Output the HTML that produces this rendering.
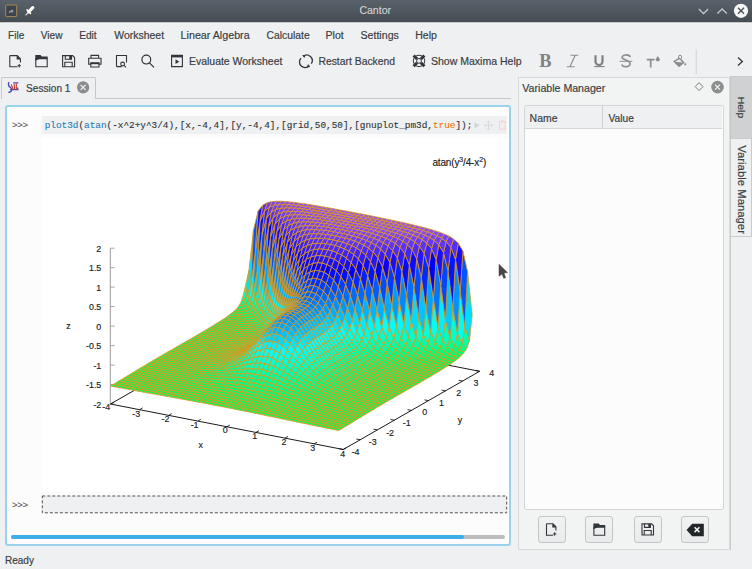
<!DOCTYPE html>
<html><head><meta charset="utf-8">
<style>
*{margin:0;padding:0;box-sizing:border-box}
html,body{width:752px;height:569px;overflow:hidden;background:#eff0f1;font-family:"Liberation Sans",sans-serif;color:#31363b;position:relative}
.a{position:absolute;white-space:nowrap}
svg{position:absolute;overflow:visible}
.btn{position:absolute;width:28px;height:27px;border:1px solid #c4c5c6;border-radius:3px;background:linear-gradient(#f1f2f2,#e9eaeb)}
</style></head><body>
<!-- title bar -->
<svg style="left:0;top:0" width="752" height="25"><defs><linearGradient id="tg" x1="0" y1="0" x2="0" y2="1"><stop offset="0" stop-color="#59626a"/><stop offset="1" stop-color="#454c53"/></linearGradient></defs><rect x="0" y="0" width="752" height="22.5" fill="url(#tg)"/><rect x="0" y="22.5" width="752" height="1.2" fill="#f4f5f6"/></svg>
<svg style="left:0;top:0" width="22" height="22"><rect x="5.7" y="5.0" width="11" height="11.6" rx="0.6" fill="#3d444b" stroke="#a78958" stroke-width="1"/><path d="M9 12.8C8.6 11.8 9.4 10.6 10.8 10.6C11.3 9.9 12.4 9.6 13.2 10.1V12.8Z" fill="#9aa0a6"/><path d="M10 12.2H12.8" stroke="#3d444b" stroke-width="0.6"/></svg>
<svg style="left:0;top:0" width="752" height="22">

<path d="M25.9 14.9L28.3 12.5" stroke="#dfe1e3" stroke-width="1.3" stroke-linecap="round"/>
<path d="M28.8 11.7L32.8 7.7" stroke="#fff" stroke-width="3.2" stroke-linecap="round"/>
<path d="M27 9.9L30.5 13.4" stroke="#fff" stroke-width="1.5" stroke-linecap="round"/>
<path d="M698.8 9L703.5 13.5L708.2 9" stroke="#c3c7cb" stroke-width="1.3" fill="none"/>
<path d="M717.4 13.5L722.1 9L726.8 13.5" stroke="#c3c7cb" stroke-width="1.3" fill="none"/>
<circle cx="741" cy="10.8" r="7.1" fill="#f6f7f7"/>
<path d="M738 7.8L744 13.8M744 7.8L738 13.8" stroke="#464d54" stroke-width="1.3"/>
</svg>

<!-- toolbar icons -->
<svg style="left:0;top:0" width="752" height="80" fill="none" stroke="#31363b" stroke-width="1.1">
<!-- new -->
<path d="M9.8 55.6H17.2L20.4 58.8V62.5M9.8 55.6V66.8H17.5"/><path d="M16.6 55.2L20.9 59.5H16.6Z" fill="#31363b" stroke="none"/><path d="M19.2 64v3.5M17.5 65.7h3.4" stroke-width="1"/>
<!-- open -->
<path d="M35.8 58.6V66.8H47.2V58.6Z"/><path d="M35.3 55.1H40.5L42 56.6H47.7V58.6H40.3L35.3 60.7Z" fill="#31363b" stroke="none"/>
<!-- save -->
<path d="M62.6 55.6H72.6L74.6 57.6V66.8H62.6Z"/><path d="M65.3 55.6V59.2H71.5V55.6M64.8 66.8V62.2H72.2V66.8"/><path d="M69.8 56.2h1.2v2.4h-1.2Z" fill="#31363b"/>
<!-- print -->
<path d="M91 58V55.4H98.6V58M88.7 58.2H101V64.2H88.7Z"/><path d="M90.8 62.8H99V67H90.8Z" fill="#eff0f1"/><path d="M90.5 62.8H99.2V64.2H90.5Z" fill="#31363b" stroke="none"/>
<!-- print preview -->
<path d="M116.5 66.6V55.5H126.5V62.5M116.5 66.6H121.8"/><circle cx="122.6" cy="64" r="1.9"/><path d="M124 65.4L126 67.3"/>
<!-- search -->
<circle cx="146.3" cy="59.6" r="4.4" stroke-width="1.2"/><path d="M149.5 62.8L154 67.3" stroke-width="1.2"/>
<!-- evaluate -->
<path d="M171.6 55.4H182.4V66.6H171.6Z"/><path d="M171 55H183V57.4H171Z" fill="#31363b" stroke="none"/><path d="M175.5 59.3L179.3 61.7L175.5 64.1Z" fill="#31363b" stroke="none"/>
<!-- restart -->
<path d="M303.2 56.2A5.6 5.6 0 0 1 311.3 63.7" stroke-width="1.3"/><path d="M309.2 65.8A5.6 5.6 0 0 1 301 58.1" stroke-width="1.3"/>
<path d="M302.3 55.0L305.6 54.9L304.3 58.1Z" fill="#31363b" stroke="none"/><path d="M310.1 67.1L306.8 67.2L308.1 64Z" fill="#31363b" stroke="none"/>
<!-- maxima help lifebuoy -->
<circle cx="419" cy="60.9" r="5.7" stroke-width="1"/><circle cx="419" cy="60.9" r="2.4" stroke-width="1"/>
<path d="M413.6 55.5L417.1 59M424.4 55.5L420.9 59M413.6 66.3L417.1 62.8M424.4 66.3L420.9 62.8" stroke-width="3"/>
<!-- disabled formatting icons -->
<g fill="#7f8183" stroke="none">
<text x="539.2" y="67" font-family="Liberation Serif" font-weight="bold" font-size="18.4">B</text>
</g>
<path d="M570.5 55.3H578.3M566.8 66.8H574.6M575.2 55.3L569.9 66.8" stroke="#8a8c8e" stroke-width="1.1"/>
<path d="M595.5 55.2V61.5A3.5 3.5 0 0 0 602.5 61.5V55.2" stroke="#7f8183" stroke-width="2.2"/><path d="M594 66.6H604.6" stroke="#7f8183" stroke-width="1.1"/>
<path d="M630.2 57.2A4 2.4 0 0 0 622 57.6C622 59.6 630 60.2 630 63.5A4 2.5 0 0 1 621.8 64.6" stroke="#8a8c8e" stroke-width="1.6"/><path d="M619.6 61.3H632.3" stroke="#8a8c8e" stroke-width="1"/>
<path d="M646.8 59.7H654.5M650.7 59.7V67.6" stroke="#8a8c8e" stroke-width="1.7"/><path d="M657.8 56L659.9 59.3A2.1 2.1 0 1 1 655.7 59.3Z" fill="#8a8c8e" stroke="none"/>
<path d="M678.5 58.6V56.8A1.5 1.5 0 0 1 681.5 56.8V58.6" stroke="#8a8c8e" stroke-width="1"/><path d="M673 61.3L679.6 57.4L684.8 62.6L679 67.2Z" fill="#8a8c8e" stroke="none"/><path d="M675 61.8L679.4 59.3L682.5 62.4Z" fill="#eff0f1" stroke="none"/><circle cx="685.3" cy="64.3" r="1.1" fill="#8a8c8e" stroke="none"/>
<path d="M696.2 49.5V74" stroke="#cfd0d1" stroke-width="1"/>
<path d="M738 57.5L742.4 61.5L738 65.5" stroke="#31363b" stroke-width="1.3"/>
</svg>

<!-- tab bar -->
<div class="a" style="left:1px;top:77px;width:95px;height:22px;border:1px solid #c6c7c8;border-bottom:none;border-radius:2px 2px 0 0;background:#eff0f1"></div>
<div class="a" style="left:95px;top:98px;width:416px;height:1px;background:#c6c7c8"></div>
<svg style="left:0;top:72px" width="100" height="30">
<path d="M9 10.2C8 12 8.3 14.5 10.5 15.5C12 16.3 12 18.5 10.8 19.5C10 20.2 9 20.3 8.5 19.8" stroke="#4b49b8" stroke-width="1.4" fill="none"/>
<path d="M13.2 10.8H18.4M10 17.6H18.6M17.6 17.6V15.6" stroke="#4b49b8" stroke-width="1.3" fill="none"/>
<path d="M11.2 12.5L13.2 17.2M14.2 12L14.6 17.3M16.3 11.5V17.3" stroke="#c0392b" stroke-width="1.1" fill="none"/>
<circle cx="83.1" cy="15.4" r="6.1" fill="#8b8d8f"/><path d="M80.6 12.9L85.6 17.9M85.6 12.9L80.6 17.9" stroke="#eff0f1" stroke-width="1.3"/>
</svg>

<!-- worksheet frame -->
<div class="a" style="left:5px;top:105px;width:506px;height:440.5px;border:2px solid #9ad1ec;border-radius:3px;background:#fcfcfc"></div>
<div class="a" style="left:42px;top:116px;width:465px;height:18px;background:#eff0f1"></div>
<div class="a" style="left:42px;top:137.5px;width:467px;height:354.5px;background:#fff"></div>
<svg style="left:0;top:0" width="752" height="569"><rect x="42.3" y="496" width="464.4" height="16.8" fill="#eff0f1" stroke="#505050" stroke-width="1" stroke-dasharray="3 2"/></svg>
<div class="a" style="left:11px;top:534.6px;width:494px;height:4.8px;border-radius:2.4px;background:#bcbdbe"></div>
<div class="a" style="left:11px;top:534.6px;width:453px;height:4.8px;border-radius:2.4px;background:#3daee9"></div>
<svg style="left:0;top:0" width="752" height="569">
<text x="44.7" y="127.9" font-family="Liberation Mono" font-size="9.4" fill="#31363b" stroke="#31363b" stroke-width="0.12" xml:space="preserve"><tspan fill="#2980b9" stroke="#2980b9">plot3d</tspan>(<tspan fill="#2980b9" stroke="#2980b9">atan</tspan>(-x^2+y^3/4),[x,-4,4],[y,-4,4],[grid,50,50],[gnuplot_pm3d,<tspan fill="#f67400" stroke="#f67400">true</tspan>]);</text>
<text x="12" y="127.9" font-family="Liberation Mono" font-size="9.4" fill="#555" stroke="#555" stroke-width="0.1" letter-spacing="-0.4">&gt;&gt;&gt;</text>
<text x="12" y="508" stroke="#555" stroke-width="0.1" font-family="Liberation Mono" font-size="9.4" fill="#555" letter-spacing="-0.4">&gt;&gt;&gt;</text>
<g fill="none" stroke="#c4c5c6" stroke-width="0.9" opacity="0.6">
<path d="M474.5 122L479.5 125.2L474.5 128.4Z" fill="#c4c5c6" stroke="none"/>
<path d="M488.5 121V129.4M484.3 125.2H492.7M487.3 122.2L488.5 121L489.7 122.2M487.3 128.2L488.5 129.4L489.7 128.2M485.5 124L484.3 125.2L485.5 126.4M491.5 124L492.7 125.2L491.5 126.4"/>
<path d="M498.5 121.8H506M499.6 121.8V129.2H505V121.8M501 120.8H503.5" stroke="#f0c0c0"/>
</g>
</svg>

<!-- plot -->
<svg style="left:0;top:0" width="752" height="569">
<defs><filter id="sb" x="-5%" y="-5%" width="110%" height="110%"><feGaussianBlur stdDeviation="0.35"/></filter></defs><g><path d="M110.5 404.0L246.9 325.8" stroke="#000" stroke-width="0.9" fill="none"/><path d="M246.9 325.8L479.6 371.3" stroke="#000" stroke-width="0.9" fill="none"/><path d="M110.3 404.0L110.3 248.2" stroke="#9a9a9a" stroke-width="1.0" fill="none"/><path d="M110.3 404.0L114.6 404.0" stroke="#9a9a9a" stroke-width="0.9" fill="none"/><path d="M110.3 384.5L114.6 384.5" stroke="#9a9a9a" stroke-width="0.9" fill="none"/><path d="M110.3 365.1L114.6 365.1" stroke="#9a9a9a" stroke-width="0.9" fill="none"/><path d="M110.3 345.6L114.6 345.6" stroke="#9a9a9a" stroke-width="0.9" fill="none"/><path d="M110.3 326.1L114.6 326.1" stroke="#9a9a9a" stroke-width="0.9" fill="none"/><path d="M110.3 306.6L114.6 306.6" stroke="#9a9a9a" stroke-width="0.9" fill="none"/><path d="M110.3 287.1L114.6 287.1" stroke="#9a9a9a" stroke-width="0.9" fill="none"/><path d="M110.3 267.7L114.6 267.7" stroke="#9a9a9a" stroke-width="0.9" fill="none"/><path d="M110.3 248.2L114.6 248.2" stroke="#9a9a9a" stroke-width="0.9" fill="none"/></g><g stroke="#dc9818" stroke-width="0.78" filter="url(#sb)" stroke-linejoin="round"><path d="M238.7 306.2 243.4 304.8 246.1 297.1 241.4 301.5Z" fill="#00ff88"/><path d="M236.0 309.4 240.6 308.9 243.4 304.8 238.7 306.2Z" fill="#00ff78"/><path d="M233.3 311.9 237.9 311.9 240.6 308.9 236.0 309.4Z" fill="#00ff70"/><path d="M241.4 301.5 246.1 297.1 248.8 271.1 244.2 291.3Z" fill="#00ffbc"/><path d="M240.6 308.9 245.3 307.8 248.0 301.5 243.4 304.8Z" fill="#00ff84"/><path d="M230.5 314.1 235.2 314.4 237.9 311.9 233.3 311.9Z" fill="#00ff6b"/><path d="M237.9 311.9 242.6 311.5 245.3 307.8 240.6 308.9Z" fill="#00ff77"/><path d="M243.4 304.8 248.0 301.5 250.8 285.0 246.1 297.1Z" fill="#00ffa7"/><path d="M235.2 314.4 239.8 314.4 242.6 311.5 237.9 311.9Z" fill="#00ff70"/><path d="M227.8 316.2 232.5 316.5 235.2 314.4 230.5 314.1Z" fill="#00ff68"/><path d="M242.6 311.5 247.2 310.5 250.0 305.2 245.3 307.8Z" fill="#00ff81"/><path d="M245.3 307.8 250.0 305.2 252.7 293.4 248.0 301.5Z" fill="#00ff9b"/><path d="M232.5 316.5 237.1 316.7 239.8 314.4 235.2 314.4Z" fill="#00ff6b"/><path d="M239.8 314.4 244.5 314.0 247.2 310.5 242.6 311.5Z" fill="#00ff76"/><path d="M225.1 318.1 229.7 318.5 232.5 316.5 227.8 316.2Z" fill="#00ff66"/><path d="M237.1 316.7 241.8 316.7 244.5 314.0 239.8 314.4Z" fill="#00ff70"/><path d="M229.7 318.5 234.4 318.9 237.1 316.7 232.5 316.5Z" fill="#00ff68"/><path d="M247.2 310.5 251.9 308.4 254.6 299.3 250.0 305.2Z" fill="#00ff94"/><path d="M244.5 314.0 249.1 313.1 251.9 308.4 247.2 310.5Z" fill="#00ff80"/><path d="M222.3 319.9 227.0 320.4 229.7 318.5 225.1 318.1Z" fill="#00ff64"/><path d="M234.4 318.9 239.0 319.1 241.8 316.7 237.1 316.7Z" fill="#00ff6c"/><path d="M241.8 316.7 246.4 316.4 249.1 313.1 244.5 314.0Z" fill="#00ff76"/><path d="M227.0 320.4 231.7 320.8 234.4 318.9 229.7 318.5Z" fill="#00ff66"/><path d="M219.6 321.6 224.3 322.2 227.0 320.4 222.3 319.9Z" fill="#00ff63"/><path d="M249.1 313.1 253.8 311.3 256.5 303.8 251.9 308.4Z" fill="#00ff90"/><path d="M239.0 319.1 243.7 319.1 246.4 316.4 241.8 316.7Z" fill="#00ff70"/><path d="M248.0 301.5 252.7 293.4 255.4 251.1 250.8 285.0Z" fill="#00fff2"/><path d="M231.7 320.8 236.3 321.2 239.0 319.1 234.4 318.9Z" fill="#00ff69"/><path d="M250.0 305.2 254.6 299.3 257.3 270.6 252.7 293.4Z" fill="#00ffd0"/><path d="M246.4 316.4 251.1 315.6 253.8 311.3 249.1 313.1Z" fill="#00ff7f"/><path d="M224.3 322.2 228.9 322.7 231.7 320.8 227.0 320.4Z" fill="#00ff65"/><path d="M246.1 297.1 250.8 285.0 253.5 229.9 248.8 271.1Z" fill="#00deff"/><path d="M216.9 323.3 221.5 323.9 224.3 322.2 219.6 321.6Z" fill="#00ff62"/><path d="M251.9 308.4 256.5 303.8 259.3 283.9 254.6 299.3Z" fill="#00ffbb"/><path d="M236.3 321.2 241.0 321.3 243.7 319.1 239.0 319.1Z" fill="#00ff6d"/><path d="M243.7 319.1 248.3 318.8 251.1 315.6 246.4 316.4Z" fill="#00ff77"/><path d="M228.9 322.7 233.6 323.1 236.3 321.2 231.7 320.8Z" fill="#00ff67"/><path d="M221.5 323.9 226.2 324.5 228.9 322.7 224.3 322.2Z" fill="#00ff63"/><path d="M251.1 315.6 255.7 313.9 258.5 307.4 253.8 311.3Z" fill="#00ff8e"/><path d="M214.2 325.0 218.8 325.7 221.5 323.9 216.9 323.3Z" fill="#00ff61"/><path d="M241.0 321.3 245.6 321.3 248.3 318.8 243.7 319.1Z" fill="#00ff71"/><path d="M233.6 323.1 238.2 323.4 241.0 321.3 236.3 321.2Z" fill="#00ff6a"/><path d="M248.3 318.8 253.0 318.0 255.7 313.9 251.1 315.6Z" fill="#00ff7f"/><path d="M253.8 311.3 258.5 307.4 261.2 292.7 256.5 303.8Z" fill="#00ffaf"/><path d="M226.2 324.5 230.9 325.0 233.6 323.1 228.9 322.7Z" fill="#00ff66"/><path d="M218.8 325.7 223.5 326.2 226.2 324.5 221.5 323.9Z" fill="#00ff63"/><path d="M238.2 323.4 242.9 323.6 245.6 321.3 241.0 321.3Z" fill="#00ff6e"/><path d="M245.6 321.3 250.3 321.0 253.0 318.0 248.3 318.8Z" fill="#00ff77"/><path d="M211.4 326.7 216.1 327.3 218.8 325.7 214.2 325.0Z" fill="#00ff60"/><path d="M230.9 325.0 235.5 325.4 238.2 323.4 233.6 323.1Z" fill="#00ff68"/><path d="M223.5 326.2 228.1 326.8 230.9 325.0 226.2 324.5Z" fill="#00ff64"/><path d="M253.0 318.0 257.7 316.4 260.4 310.6 255.7 313.9Z" fill="#00ff8d"/><path d="M255.7 313.9 260.4 310.6 263.1 298.9 258.5 307.4Z" fill="#00ffa8"/><path d="M216.1 327.3 220.7 327.9 223.5 326.2 218.8 325.7Z" fill="#00ff62"/><path d="M242.9 323.6 247.5 323.5 250.3 321.0 245.6 321.3Z" fill="#00ff72"/><path d="M235.5 325.4 240.2 325.6 242.9 323.6 238.2 323.4Z" fill="#00ff6b"/><path d="M250.3 321.0 254.9 320.2 257.7 316.4 253.0 318.0Z" fill="#00ff80"/><path d="M208.7 328.3 213.4 329.0 216.1 327.3 211.4 326.7Z" fill="#00ff60"/><path d="M228.1 326.8 232.8 327.2 235.5 325.4 230.9 325.0Z" fill="#00ff67"/><path d="M220.7 327.9 225.4 328.5 228.1 326.8 223.5 326.2Z" fill="#00ff64"/><path d="M240.2 325.6 244.8 325.7 247.5 323.5 242.9 323.6Z" fill="#00ff6f"/><path d="M247.5 323.5 252.2 323.2 254.9 320.2 250.3 321.0Z" fill="#00ff79"/><path d="M213.4 329.0 218.0 329.6 220.7 327.9 216.1 327.3Z" fill="#00ff61"/><path d="M232.8 327.2 237.4 327.6 240.2 325.6 235.5 325.4Z" fill="#00ff69"/><path d="M225.4 328.5 230.1 329.0 232.8 327.2 228.1 326.8Z" fill="#00ff66"/><path d="M206.0 329.9 210.6 330.6 213.4 329.0 208.7 328.3Z" fill="#00ff60"/><path d="M257.7 316.4 262.3 313.3 265.0 303.5 260.4 310.6Z" fill="#00ffa4"/><path d="M254.9 320.2 259.6 318.7 262.3 313.3 257.7 316.4Z" fill="#00ff8d"/><path d="M218.0 329.6 222.7 330.2 225.4 328.5 220.7 327.9Z" fill="#00ff63"/><path d="M244.8 325.7 249.5 325.6 252.2 323.2 247.5 323.5Z" fill="#00ff74"/><path d="M237.4 327.6 242.1 327.8 244.8 325.7 240.2 325.6Z" fill="#00ff6d"/><path d="M256.5 303.8 261.2 292.7 263.9 250.4 259.3 283.9Z" fill="#00efff"/><path d="M252.2 323.2 256.9 322.3 259.6 318.7 254.9 320.2Z" fill="#00ff82"/><path d="M210.6 330.6 215.3 331.3 218.0 329.6 213.4 329.0Z" fill="#00ff61"/><path d="M230.1 329.0 234.7 329.4 237.4 327.6 232.8 327.2Z" fill="#00ff68"/><path d="M254.6 299.3 259.3 283.9 262.0 234.3 257.3 270.6Z" fill="#00c7ff"/><path d="M258.5 307.4 263.1 298.9 265.8 266.1 261.2 292.7Z" fill="#00fff1"/><path d="M222.7 330.2 227.3 330.7 230.1 329.0 225.4 328.5Z" fill="#00ff65"/><path d="M203.3 331.6 207.9 332.2 210.6 330.6 206.0 329.9Z" fill="#00ff5f"/><path d="M242.1 327.8 246.7 327.8 249.5 325.6 244.8 325.7Z" fill="#00ff71"/><path d="M249.5 325.6 254.1 325.2 256.9 322.3 252.2 323.2Z" fill="#00ff7b"/><path d="M215.3 331.3 219.9 331.9 222.7 330.2 218.0 329.6Z" fill="#00ff62"/><path d="M252.7 293.4 257.3 270.6 260.1 221.0 255.4 251.1Z" fill="#0093ff"/><path d="M234.7 329.4 239.4 329.7 242.1 327.8 237.4 327.6Z" fill="#00ff6b"/><path d="M260.4 310.6 265.0 303.5 267.8 278.5 263.1 298.9Z" fill="#00ffdd"/><path d="M259.6 318.7 264.2 315.7 267.0 307.2 262.3 313.3Z" fill="#00ffa3"/><path d="M207.9 332.2 212.6 332.9 215.3 331.3 210.6 330.6Z" fill="#00ff61"/><path d="M227.3 330.7 232.0 331.2 234.7 329.4 230.1 329.0Z" fill="#00ff67"/><path d="M256.9 322.3 261.5 320.7 264.2 315.7 259.6 318.7Z" fill="#00ff8f"/><path d="M219.9 331.9 224.6 332.4 227.3 330.7 222.7 330.2Z" fill="#00ff64"/><path d="M200.5 333.2 205.2 333.8 207.9 332.2 203.3 331.6Z" fill="#00ff5f"/><path d="M246.7 327.8 251.4 327.7 254.1 325.2 249.5 325.6Z" fill="#00ff76"/><path d="M239.4 329.7 244.0 329.9 246.7 327.8 242.1 327.8Z" fill="#00ff6e"/><path d="M254.1 325.2 258.8 324.3 261.5 320.7 256.9 322.3Z" fill="#00ff84"/><path d="M212.6 332.9 217.2 333.5 219.9 331.9 215.3 331.3Z" fill="#00ff62"/><path d="M232.0 331.2 236.6 331.5 239.4 329.7 234.7 329.4Z" fill="#00ff69"/><path d="M250.8 285.0 255.4 251.1 258.1 211.1 253.5 229.9Z" fill="#0057ff"/><path d="M262.3 313.3 267.0 307.2 269.7 287.6 265.0 303.5Z" fill="#00ffd0"/><path d="M224.6 332.4 229.2 332.9 232.0 331.2 227.3 330.7Z" fill="#00ff66"/><path d="M205.2 333.8 209.8 334.5 212.6 332.9 207.9 332.2Z" fill="#00ff60"/><path d="M244.0 329.9 248.7 329.8 251.4 327.7 246.7 327.8Z" fill="#00ff73"/><path d="M251.4 327.7 256.1 327.1 258.8 324.3 254.1 325.2Z" fill="#00ff7d"/><path d="M217.2 333.5 221.9 334.1 224.6 332.4 219.9 331.9Z" fill="#00ff64"/><path d="M197.8 334.7 202.5 335.4 205.2 333.8 200.5 333.2Z" fill="#00ff5f"/><path d="M236.6 331.5 241.3 331.8 244.0 329.9 239.4 329.7Z" fill="#00ff6d"/><path d="M261.5 320.7 266.2 317.9 268.9 310.1 264.2 315.7Z" fill="#00ffa3"/><path d="M209.8 334.5 214.5 335.1 217.2 333.5 212.6 332.9Z" fill="#00ff62"/><path d="M229.2 332.9 233.9 333.3 236.6 331.5 232.0 331.2Z" fill="#00ff68"/><path d="M258.8 324.3 263.4 322.7 266.2 317.9 261.5 320.7Z" fill="#00ff91"/><path d="M221.9 334.1 226.5 334.6 229.2 332.9 224.6 332.4Z" fill="#00ff65"/><path d="M202.5 335.4 207.1 336.1 209.8 334.5 205.2 333.8Z" fill="#00ff60"/><path d="M248.7 329.8 253.3 329.6 256.1 327.1 251.4 327.7Z" fill="#00ff78"/><path d="M241.3 331.8 245.9 331.9 248.7 329.8 244.0 329.9Z" fill="#00ff70"/><path d="M264.2 315.7 268.9 310.1 271.6 294.0 267.0 307.2Z" fill="#00ffc9"/><path d="M256.1 327.1 260.7 326.1 263.4 322.7 258.8 324.3Z" fill="#00ff86"/><path d="M214.5 335.1 219.1 335.7 221.9 334.1 217.2 333.5Z" fill="#00ff63"/><path d="M195.1 336.3 199.7 337.0 202.5 335.4 197.8 334.7Z" fill="#00ff5f"/><path d="M233.9 333.3 238.6 333.6 241.3 331.8 236.6 331.5Z" fill="#00ff6b"/><path d="M207.1 336.1 211.8 336.7 214.5 335.1 209.8 334.5Z" fill="#00ff61"/><path d="M226.5 334.6 231.2 335.0 233.9 333.3 229.2 332.9Z" fill="#00ff68"/><path d="M219.1 335.7 223.8 336.2 226.5 334.6 221.9 334.1Z" fill="#00ff65"/><path d="M245.9 331.9 250.6 331.8 253.3 329.6 248.7 329.8Z" fill="#00ff75"/><path d="M199.7 337.0 204.4 337.7 207.1 336.1 202.5 335.4Z" fill="#00ff60"/><path d="M253.3 329.6 258.0 329.0 260.7 326.1 256.1 327.1Z" fill="#00ff80"/><path d="M238.6 333.6 243.2 333.8 245.9 331.9 241.3 331.8Z" fill="#00ff6f"/><path d="M263.4 322.7 268.1 319.7 270.8 312.5 266.2 317.9Z" fill="#00ffa5"/><path d="M211.8 336.7 216.4 337.3 219.1 335.7 214.5 335.1Z" fill="#00ff63"/><path d="M231.2 335.0 235.8 335.3 238.6 333.6 233.9 333.3Z" fill="#00ff6a"/><path d="M192.3 337.9 197.0 338.6 199.7 337.0 195.1 336.3Z" fill="#00ff5f"/><path d="M260.7 326.1 265.4 324.4 268.1 319.7 263.4 322.7Z" fill="#00ff94"/><path d="M223.8 336.2 228.4 336.7 231.2 335.0 226.5 334.6Z" fill="#00ff67"/><path d="M204.4 337.7 209.0 338.3 211.8 336.7 207.1 336.1Z" fill="#00ff61"/><path d="M266.2 317.9 270.8 312.5 273.5 298.8 268.9 310.1Z" fill="#00ffc6"/><path d="M250.6 331.8 255.2 331.4 258.0 329.0 253.3 329.6Z" fill="#00ff7b"/><path d="M243.2 333.8 247.9 333.8 250.6 331.8 245.9 331.9Z" fill="#00ff73"/><path d="M216.4 337.3 221.1 337.9 223.8 336.2 219.1 335.7Z" fill="#00ff65"/><path d="M197.0 338.6 201.6 339.3 204.4 337.7 199.7 337.0Z" fill="#00ff60"/><path d="M258.0 329.0 262.6 327.8 265.4 324.4 260.7 326.1Z" fill="#00ff8a"/><path d="M235.8 335.3 240.5 335.6 243.2 333.8 238.6 333.6Z" fill="#00ff6d"/><path d="M209.0 338.3 213.7 338.9 216.4 337.3 211.8 336.7Z" fill="#00ff63"/><path d="M228.4 336.7 233.1 337.1 235.8 335.3 231.2 335.0Z" fill="#00ff6a"/><path d="M189.6 339.5 194.3 340.2 197.0 338.6 192.3 337.9Z" fill="#00ff5f"/><path d="M263.1 298.9 267.8 278.5 270.5 236.9 265.8 266.1Z" fill="#00a1ff"/><path d="M265.0 303.5 269.7 287.6 272.4 248.4 267.8 278.5Z" fill="#00c3ff"/><path d="M221.1 337.9 225.7 338.3 228.4 336.7 223.8 336.2Z" fill="#00ff67"/><path d="M201.6 339.3 206.3 339.9 209.0 338.3 204.4 337.7Z" fill="#00ff61"/><path d="M247.9 333.8 252.5 333.5 255.2 331.4 250.6 331.8Z" fill="#00ff78"/><path d="M255.2 331.4 259.9 330.6 262.6 327.8 258.0 329.0Z" fill="#00ff84"/><path d="M261.2 292.7 265.8 266.1 268.6 226.6 263.9 250.4Z" fill="#0076ff"/><path d="M240.5 335.6 245.1 335.7 247.9 333.8 243.2 333.8Z" fill="#00ff71"/><path d="M213.7 338.9 218.3 339.5 221.1 337.9 216.4 337.3Z" fill="#00ff64"/><path d="M265.4 324.4 270.0 321.3 272.7 314.5 268.1 319.7Z" fill="#00ffa8"/><path d="M194.3 340.2 198.9 340.9 201.6 339.3 197.0 338.6Z" fill="#00ff60"/><path d="M233.1 337.1 237.8 337.3 240.5 335.6 235.8 335.3Z" fill="#00ff6d"/><path d="M267.0 307.2 271.6 294.0 274.3 259.8 269.7 287.6Z" fill="#00dcff"/><path d="M262.6 327.8 267.3 325.8 270.0 321.3 265.4 324.4Z" fill="#00ff98"/><path d="M268.1 319.7 272.7 314.5 275.5 302.4 270.8 312.5Z" fill="#00ffc6"/><path d="M206.3 339.9 211.0 340.5 213.7 338.9 209.0 338.3Z" fill="#00ff62"/><path d="M225.7 338.3 230.4 338.7 233.1 337.1 228.4 336.7Z" fill="#00ff69"/><path d="M259.3 283.9 263.9 250.4 266.6 218.0 262.0 234.3Z" fill="#0046ff"/><path d="M186.9 341.1 191.5 341.8 194.3 340.2 189.6 339.5Z" fill="#00ff5f"/><path d="M252.5 333.5 257.2 333.0 259.9 330.6 255.2 331.4Z" fill="#00ff7f"/><path d="M218.3 339.5 223.0 340.0 225.7 338.3 221.1 337.9Z" fill="#00ff66"/><path d="M245.1 335.7 249.8 335.5 252.5 333.5 247.9 333.8Z" fill="#00ff76"/><path d="M198.9 340.9 203.6 341.5 206.3 339.9 201.6 339.3Z" fill="#00ff61"/><path d="M237.8 337.3 242.4 337.5 245.1 335.7 240.5 335.6Z" fill="#00ff70"/><path d="M259.9 330.6 264.6 329.2 267.3 325.8 262.6 327.8Z" fill="#00ff8f"/><path d="M257.3 270.6 262.0 234.3 264.7 210.9 260.1 221.0Z" fill="#0015ff"/><path d="M268.9 310.1 273.5 298.8 276.3 269.9 271.6 294.0Z" fill="#00eeff"/><path d="M211.0 340.5 215.6 341.1 218.3 339.5 213.7 338.9Z" fill="#00ff64"/><path d="M230.4 338.7 235.0 339.0 237.8 337.3 233.1 337.1Z" fill="#00ff6c"/><path d="M191.5 341.8 196.2 342.4 198.9 340.9 194.3 340.2Z" fill="#00ff60"/><path d="M203.6 341.5 208.2 342.1 211.0 340.5 206.3 339.9Z" fill="#00ff62"/><path d="M223.0 340.0 227.6 340.4 230.4 338.7 225.7 338.3Z" fill="#00ff69"/><path d="M255.4 251.1 260.1 221.0 262.8 205.0 258.1 211.1Z" fill="#190efd"/><path d="M184.2 342.6 188.8 343.3 191.5 341.8 186.9 341.1Z" fill="#00ff5f"/><path d="M249.8 335.5 254.4 335.2 257.2 333.0 252.5 333.5Z" fill="#00ff7c"/><path d="M242.4 337.5 247.1 337.4 249.8 335.5 245.1 335.7Z" fill="#00ff75"/><path d="M257.2 333.0 261.8 332.0 264.6 329.2 259.9 330.6Z" fill="#00ff88"/><path d="M215.6 341.1 220.3 341.6 223.0 340.0 218.3 339.5Z" fill="#00ff66"/><path d="M196.2 342.4 200.8 343.1 203.6 341.5 198.9 340.9Z" fill="#00ff61"/><path d="M235.0 339.0 239.7 339.2 242.4 337.5 237.8 337.3Z" fill="#00ff6f"/><path d="M267.3 325.8 271.9 322.5 274.7 316.0 270.0 321.3Z" fill="#00ffad"/><path d="M208.2 342.1 212.9 342.7 215.6 341.1 211.0 340.5Z" fill="#00ff64"/><path d="M270.0 321.3 274.7 316.0 277.4 305.0 272.7 314.5Z" fill="#00ffc9"/><path d="M227.6 340.4 232.3 340.7 235.0 339.0 230.4 338.7Z" fill="#00ff6b"/><path d="M270.8 312.5 275.5 302.4 278.2 278.0 273.5 298.8Z" fill="#00f9ff"/><path d="M188.8 343.3 193.5 344.0 196.2 342.4 191.5 341.8Z" fill="#00ff60"/><path d="M264.6 329.2 269.2 327.0 271.9 322.5 267.3 325.8Z" fill="#00ff9e"/><path d="M220.3 341.6 224.9 342.0 227.6 340.4 223.0 340.0Z" fill="#00ff68"/><path d="M200.8 343.1 205.5 343.7 208.2 342.1 203.6 341.5Z" fill="#00ff62"/><path d="M247.1 337.4 251.7 337.2 254.4 335.2 249.8 335.5Z" fill="#00ff7a"/><path d="M254.4 335.2 259.1 334.4 261.8 332.0 257.2 333.0Z" fill="#00ff84"/><path d="M181.4 344.2 186.1 344.9 188.8 343.3 184.2 342.6Z" fill="#00ff5f"/><path d="M239.7 339.2 244.3 339.2 247.1 337.4 242.4 337.5Z" fill="#00ff73"/><path d="M212.9 342.7 217.5 343.2 220.3 341.6 215.6 341.1Z" fill="#00ff66"/><path d="M193.5 344.0 198.1 344.6 200.8 343.1 196.2 342.4Z" fill="#00ff61"/><path d="M261.8 332.0 266.5 330.4 269.2 327.0 264.6 329.2Z" fill="#00ff94"/><path d="M232.3 340.7 237.0 340.9 239.7 339.2 235.0 339.0Z" fill="#00ff6f"/><path d="M205.5 343.7 210.2 344.2 212.9 342.7 208.2 342.1Z" fill="#00ff64"/><path d="M224.9 342.0 229.6 342.3 232.3 340.7 227.6 340.4Z" fill="#00ff6b"/><path d="M186.1 344.9 190.7 345.6 193.5 344.0 188.8 343.3Z" fill="#00ff60"/><path d="M251.7 337.2 256.4 336.6 259.1 334.4 254.4 335.2Z" fill="#00ff81"/><path d="M217.5 343.2 222.2 343.6 224.9 342.0 220.3 341.6Z" fill="#00ff68"/><path d="M198.1 344.6 202.8 345.3 205.5 343.7 200.8 343.1Z" fill="#00ff62"/><path d="M244.3 339.2 249.0 339.0 251.7 337.2 247.1 337.4Z" fill="#00ff78"/><path d="M272.7 314.5 277.4 305.0 280.1 284.2 275.5 302.4Z" fill="#00feff"/><path d="M259.1 334.4 263.8 333.2 266.5 330.4 261.8 332.0Z" fill="#00ff8e"/><path d="M178.7 345.8 183.4 346.5 186.1 344.9 181.4 344.2Z" fill="#00ff5f"/><path d="M237.0 340.9 241.6 340.9 244.3 339.2 239.7 339.2Z" fill="#00ff72"/><path d="M210.2 344.2 214.8 344.7 217.5 343.2 212.9 342.7Z" fill="#00ff66"/><path d="M269.2 327.0 273.9 323.3 276.6 317.0 271.9 322.5Z" fill="#00ffb4"/><path d="M190.7 345.6 195.4 346.2 198.1 344.6 193.5 344.0Z" fill="#00ff61"/><path d="M229.6 342.3 234.2 342.5 237.0 340.9 232.3 340.7Z" fill="#00ff6e"/><path d="M271.9 322.5 276.6 317.0 279.3 306.8 274.7 316.0Z" fill="#00ffce"/><path d="M202.8 345.3 207.4 345.8 210.2 344.2 205.5 343.7Z" fill="#00ff64"/><path d="M222.2 343.6 226.8 343.9 229.6 342.3 224.9 342.0Z" fill="#00ff6b"/><path d="M266.5 330.4 271.1 327.8 273.9 323.3 269.2 327.0Z" fill="#00ffa5"/><path d="M183.4 346.5 188.0 347.1 190.7 345.6 186.1 344.9Z" fill="#00ff60"/><path d="M249.0 339.0 253.6 338.6 256.4 336.6 251.7 337.2Z" fill="#00ff7f"/><path d="M256.4 336.6 261.0 335.6 263.8 333.2 259.1 334.4Z" fill="#00ff8a"/><path d="M241.6 340.9 246.3 340.8 249.0 339.0 244.3 339.2Z" fill="#00ff77"/><path d="M214.8 344.7 219.5 345.2 222.2 343.6 217.5 343.2Z" fill="#00ff68"/><path d="M195.4 346.2 200.0 346.8 202.8 345.3 198.1 344.6Z" fill="#00ff62"/><path d="M176.0 347.3 180.6 348.0 183.4 346.5 178.7 345.8Z" fill="#00ff5f"/><path d="M234.2 342.5 238.9 342.6 241.6 340.9 237.0 340.9Z" fill="#00ff72"/><path d="M263.8 333.2 268.4 331.2 271.1 327.8 266.5 330.4Z" fill="#00ff9c"/><path d="M207.4 345.8 212.1 346.3 214.8 344.7 210.2 344.2Z" fill="#00ff66"/><path d="M188.0 347.1 192.7 347.8 195.4 346.2 190.7 345.6Z" fill="#00ff61"/><path d="M226.8 343.9 231.5 344.2 234.2 342.5 229.6 342.3Z" fill="#00ff6e"/><path d="M260.1 221.0 264.7 210.9 267.4 202.6 262.8 205.0Z" fill="#552ef9"/><path d="M274.7 316.0 279.3 306.8 282.0 288.8 277.4 305.0Z" fill="#00ffff"/><path d="M200.0 346.8 204.7 347.4 207.4 345.8 202.8 345.3Z" fill="#00ff64"/><path d="M219.5 345.2 224.1 345.5 226.8 343.9 222.2 343.6Z" fill="#00ff6b"/><path d="M180.6 348.0 185.3 348.7 188.0 347.1 183.4 346.5Z" fill="#00ff60"/><path d="M253.6 338.6 258.3 337.7 261.0 335.6 256.4 336.6Z" fill="#00ff87"/><path d="M246.3 340.8 250.9 340.4 253.6 338.6 249.0 339.0Z" fill="#00ff7d"/><path d="M238.9 342.6 243.5 342.5 246.3 340.8 241.6 340.9Z" fill="#00ff77"/><path d="M262.0 234.3 266.6 218.0 269.4 207.0 264.7 210.9Z" fill="#3d21fb"/><path d="M267.8 278.5 272.4 248.4 275.1 224.1 270.5 236.9Z" fill="#002bff"/><path d="M212.1 346.3 216.7 346.7 219.5 345.2 214.8 344.7Z" fill="#00ff68"/><path d="M269.7 287.6 274.3 259.8 277.1 231.3 272.4 248.4Z" fill="#004fff"/><path d="M192.7 347.8 197.3 348.4 200.0 346.8 195.4 346.2Z" fill="#00ff62"/><path d="M261.0 335.6 265.7 334.0 268.4 331.2 263.8 333.2Z" fill="#00ff95"/><path d="M265.8 266.1 270.5 236.9 273.2 217.7 268.6 226.6Z" fill="#0005ff"/><path d="M263.9 250.4 268.6 226.6 271.3 212.0 266.6 218.0Z" fill="#1e10fd"/><path d="M173.2 348.9 177.9 349.6 180.6 348.0 176.0 347.3Z" fill="#00ff5f"/><path d="M231.5 344.2 236.2 344.3 238.9 342.6 234.2 342.5Z" fill="#00ff71"/><path d="M271.6 294.0 276.3 269.9 279.0 239.2 274.3 259.8Z" fill="#006fff"/><path d="M204.7 347.4 209.4 347.9 212.1 346.3 207.4 345.8Z" fill="#00ff66"/><path d="M271.1 327.8 275.8 323.7 278.5 317.5 273.9 323.3Z" fill="#00ffbd"/><path d="M185.3 348.7 189.9 349.3 192.7 347.8 188.0 347.1Z" fill="#00ff61"/><path d="M224.1 345.5 228.8 345.8 231.5 344.2 226.8 343.9Z" fill="#00ff6e"/><path d="M273.9 323.3 278.5 317.5 281.2 307.9 276.6 317.0Z" fill="#00ffd6"/><path d="M273.5 298.8 278.2 278.0 280.9 247.4 276.3 269.9Z" fill="#0089ff"/><path d="M197.3 348.4 202.0 348.9 204.7 347.4 200.0 346.8Z" fill="#00ff64"/><path d="M216.7 346.7 221.4 347.1 224.1 345.5 219.5 345.2Z" fill="#00ff6a"/><path d="M268.4 331.2 273.1 328.1 275.8 323.7 271.1 327.8Z" fill="#00ffae"/><path d="M250.9 340.4 255.6 339.7 258.3 337.7 253.6 338.6Z" fill="#00ff85"/><path d="M177.9 349.6 182.6 350.3 185.3 348.7 180.6 348.0Z" fill="#00ff60"/><path d="M243.5 342.5 248.2 342.2 250.9 340.4 246.3 340.8Z" fill="#00ff7c"/><path d="M258.3 337.7 263.0 336.4 265.7 334.0 261.0 335.6Z" fill="#00ff91"/><path d="M236.2 344.3 240.8 344.2 243.5 342.5 238.9 342.6Z" fill="#00ff76"/><path d="M209.4 347.9 214.0 348.3 216.7 346.7 212.1 346.3Z" fill="#00ff68"/><path d="M189.9 349.3 194.6 349.9 197.3 348.4 192.7 347.8Z" fill="#00ff62"/><path d="M170.5 350.4 175.2 351.2 177.9 349.6 173.2 348.9Z" fill="#00ff5f"/><path d="M228.8 345.8 233.4 345.9 236.2 344.3 231.5 344.2Z" fill="#00ff71"/><path d="M264.7 210.9 269.4 207.0 272.1 201.6 267.4 202.6Z" fill="#6d3bf7"/><path d="M265.7 334.0 270.3 331.5 273.1 328.1 268.4 331.2Z" fill="#00ffa5"/><path d="M202.0 348.9 206.6 349.4 209.4 347.9 204.7 347.4Z" fill="#00ff66"/><path d="M276.6 317.0 281.2 307.9 284.0 292.0 279.3 306.8Z" fill="#00fcff"/><path d="M275.5 302.4 280.1 284.2 282.9 255.5 278.2 278.0Z" fill="#009cff"/><path d="M182.6 350.3 187.2 350.9 189.9 349.3 185.3 348.7Z" fill="#00ff61"/><path d="M221.4 347.1 226.0 347.3 228.8 345.8 224.1 345.5Z" fill="#00ff6d"/><path d="M248.2 342.2 252.8 341.5 255.6 339.7 250.9 340.4Z" fill="#00ff83"/><path d="M194.6 349.9 199.2 350.5 202.0 348.9 197.3 348.4Z" fill="#00ff64"/><path d="M214.0 348.3 218.7 348.7 221.4 347.1 216.7 346.7Z" fill="#00ff6a"/><path d="M255.6 339.7 260.2 338.5 263.0 336.4 258.3 337.7Z" fill="#00ff8e"/><path d="M240.8 344.2 245.5 343.9 248.2 342.2 243.5 342.5Z" fill="#00ff7b"/><path d="M175.2 351.2 179.8 351.8 182.6 350.3 177.9 349.6Z" fill="#00ff60"/><path d="M233.4 345.9 238.1 345.8 240.8 344.2 236.2 344.3Z" fill="#00ff76"/><path d="M206.6 349.4 211.3 349.9 214.0 348.3 209.4 347.9Z" fill="#00ff68"/><path d="M263.0 336.4 267.6 334.3 270.3 331.5 265.7 334.0Z" fill="#00ff9f"/><path d="M187.2 350.9 191.9 351.5 194.6 349.9 189.9 349.3Z" fill="#00ff62"/><path d="M167.8 352.0 172.4 352.7 175.2 351.2 170.5 350.4Z" fill="#00ff5e"/><path d="M226.0 347.3 230.7 347.4 233.4 345.9 228.8 345.8Z" fill="#00ff71"/><path d="M266.6 218.0 271.3 212.0 274.0 205.4 269.4 207.0Z" fill="#6135f8"/><path d="M199.2 350.5 203.9 351.0 206.6 349.4 202.0 348.9Z" fill="#00ff66"/><path d="M269.4 207.0 274.0 205.4 276.8 201.2 272.1 201.6Z" fill="#7942f6"/><path d="M277.4 305.0 282.0 288.8 284.8 262.9 280.1 284.2Z" fill="#00aaff"/><path d="M179.8 351.8 184.5 352.5 187.2 350.9 182.6 350.3Z" fill="#00ff61"/><path d="M218.7 348.7 223.3 348.9 226.0 347.3 221.4 347.1Z" fill="#00ff6d"/><path d="M273.1 328.1 277.7 323.5 280.4 317.5 275.8 323.7Z" fill="#00ffc9"/><path d="M275.8 323.7 280.4 317.5 283.2 308.4 278.5 317.5Z" fill="#00ffe1"/><path d="M245.5 343.9 250.1 343.3 252.8 341.5 248.2 342.2Z" fill="#00ff82"/><path d="M252.8 341.5 257.5 340.5 260.2 338.5 255.6 339.7Z" fill="#00ff8c"/><path d="M191.9 351.5 196.5 352.1 199.2 350.5 194.6 349.9Z" fill="#00ff64"/><path d="M211.3 349.9 215.9 350.2 218.7 348.7 214.0 348.3Z" fill="#00ff6a"/><path d="M238.1 345.8 242.7 345.5 245.5 343.9 240.8 344.2Z" fill="#00ff7b"/><path d="M172.4 352.7 177.1 353.4 179.8 351.8 175.2 351.2Z" fill="#00ff60"/><path d="M270.3 331.5 275.0 327.9 277.7 323.5 273.1 328.1Z" fill="#00ffba"/><path d="M260.2 338.5 264.9 336.7 267.6 334.3 263.0 336.4Z" fill="#00ff9a"/><path d="M230.7 347.4 235.4 347.4 238.1 345.8 233.4 345.9Z" fill="#00ff75"/><path d="M203.9 351.0 208.6 351.4 211.3 349.9 206.6 349.4Z" fill="#00ff68"/><path d="M184.5 352.5 189.1 353.1 191.9 351.5 187.2 350.9Z" fill="#00ff62"/><path d="M268.6 226.6 273.2 217.7 275.9 209.5 271.3 212.0Z" fill="#512df9"/><path d="M165.1 353.6 169.7 354.3 172.4 352.7 167.8 352.0Z" fill="#00ff5e"/><path d="M223.3 348.9 228.0 349.0 230.7 347.4 226.0 347.3Z" fill="#00ff71"/><path d="M278.5 317.5 283.2 308.4 285.9 294.3 281.2 307.9Z" fill="#00f5ff"/><path d="M274.0 205.4 278.7 204.7 281.4 201.3 276.8 201.2Z" fill="#8046f6"/><path d="M196.5 352.1 201.2 352.6 203.9 351.0 199.2 350.5Z" fill="#00ff66"/><path d="M267.6 334.3 272.3 331.3 275.0 327.9 270.3 331.5Z" fill="#00ffb1"/><path d="M177.1 353.4 181.8 354.0 184.5 352.5 179.8 351.8Z" fill="#00ff61"/><path d="M215.9 350.2 220.6 350.5 223.3 348.9 218.7 348.7Z" fill="#00ff6d"/><path d="M250.1 343.3 254.8 342.3 257.5 340.5 252.8 341.5Z" fill="#00ff8b"/><path d="M271.3 212.0 275.9 209.5 278.7 204.7 274.0 205.4Z" fill="#713ef7"/><path d="M242.7 345.5 247.4 344.9 250.1 343.3 245.5 343.9Z" fill="#00ff82"/><path d="M279.3 306.8 284.0 292.0 286.7 269.2 282.0 288.8Z" fill="#00b1ff"/><path d="M189.1 353.1 193.8 353.6 196.5 352.1 191.9 351.5Z" fill="#00ff64"/><path d="M208.6 351.4 213.2 351.8 215.9 350.2 211.3 349.9Z" fill="#00ff6a"/><path d="M257.5 340.5 262.2 338.8 264.9 336.7 260.2 338.5Z" fill="#00ff98"/><path d="M235.4 347.4 240.0 347.1 242.7 345.5 238.1 345.8Z" fill="#00ff7b"/><path d="M169.7 354.3 174.4 355.0 177.1 353.4 172.4 352.7Z" fill="#00ff60"/><path d="M270.5 236.9 275.1 224.1 277.9 214.0 273.2 217.7Z" fill="#3e22fb"/><path d="M228.0 349.0 232.6 349.0 235.4 347.4 230.7 347.4Z" fill="#00ff75"/><path d="M201.2 352.6 205.8 353.0 208.6 351.4 203.9 351.0Z" fill="#00ff68"/><path d="M181.8 354.0 186.4 354.7 189.1 353.1 184.5 352.5Z" fill="#00ff62"/><path d="M278.7 204.7 283.3 204.6 286.1 201.6 281.4 201.3Z" fill="#8549f6"/><path d="M264.9 336.7 269.5 334.1 272.3 331.3 267.6 334.3Z" fill="#00ffab"/><path d="M162.3 355.2 167.0 355.9 169.7 354.3 165.1 353.6Z" fill="#00ff5e"/><path d="M220.6 350.5 225.2 350.6 228.0 349.0 223.3 348.9Z" fill="#00ff71"/><path d="M272.4 248.4 277.1 231.3 279.8 218.8 275.1 224.1Z" fill="#2715fc"/><path d="M193.8 353.6 198.4 354.1 201.2 352.6 196.5 352.1Z" fill="#00ff66"/><path d="M174.4 355.0 179.0 355.6 181.8 354.0 177.1 353.4Z" fill="#00ff61"/><path d="M213.2 351.8 217.9 352.0 220.6 350.5 215.9 350.2Z" fill="#00ff6d"/><path d="M247.4 344.9 252.0 344.0 254.8 342.3 250.1 343.3Z" fill="#00ff8a"/><path d="M240.0 347.1 244.7 346.5 247.4 344.9 242.7 345.5Z" fill="#00ff81"/><path d="M275.9 209.5 280.6 208.4 283.3 204.6 278.7 204.7Z" fill="#7b43f6"/><path d="M254.8 342.3 259.4 340.7 262.2 338.8 257.5 340.5Z" fill="#00ff96"/><path d="M277.7 323.5 282.4 316.8 285.1 308.3 280.4 317.5Z" fill="#00ffee"/><path d="M275.0 327.9 279.6 322.6 282.4 316.8 277.7 323.5Z" fill="#00ffd8"/><path d="M274.3 259.8 279.0 239.2 281.7 224.1 277.1 231.3Z" fill="#0e08fe"/><path d="M186.4 354.7 191.1 355.2 193.8 353.6 189.1 353.1Z" fill="#00ff64"/><path d="M205.8 353.0 210.5 353.4 213.2 351.8 208.6 351.4Z" fill="#00ff6a"/><path d="M232.6 349.0 237.3 348.7 240.0 347.1 235.4 347.4Z" fill="#00ff7b"/><path d="M273.2 217.7 277.9 214.0 280.6 208.4 275.9 209.5Z" fill="#6839f8"/><path d="M167.0 355.9 171.6 356.6 174.4 355.0 169.7 354.3Z" fill="#00ff5f"/><path d="M283.3 204.6 288.0 204.7 290.7 202.0 286.1 201.6Z" fill="#884af5"/><path d="M225.2 350.6 229.9 350.5 232.6 349.0 228.0 349.0Z" fill="#00ff75"/><path d="M262.2 338.8 266.8 336.4 269.5 334.1 264.9 336.7Z" fill="#00ffa6"/><path d="M198.4 354.1 203.1 354.6 205.8 353.0 201.2 352.6Z" fill="#00ff68"/><path d="M272.3 331.3 276.9 327.0 279.6 322.6 275.0 327.9Z" fill="#00ffc9"/><path d="M179.0 355.6 183.7 356.2 186.4 354.7 181.8 354.0Z" fill="#00ff62"/><path d="M276.3 269.9 280.9 247.4 283.7 229.9 279.0 239.2Z" fill="#000cff"/><path d="M281.2 307.9 285.9 294.3 288.6 274.4 284.0 292.0Z" fill="#00b4ff"/><path d="M159.6 356.8 164.3 357.5 167.0 355.9 162.3 355.2Z" fill="#00ff5e"/><path d="M217.9 352.0 222.5 352.2 225.2 350.6 220.6 350.5Z" fill="#00ff71"/><path d="M280.4 317.5 285.1 308.3 287.8 295.7 283.2 308.4Z" fill="#00ebff"/><path d="M191.1 355.2 195.7 355.7 198.4 354.1 193.8 353.6Z" fill="#00ff66"/><path d="M171.6 356.6 176.3 357.2 179.0 355.6 174.4 355.0Z" fill="#00ff61"/><path d="M210.5 353.4 215.1 353.6 217.9 352.0 213.2 351.8Z" fill="#00ff6d"/><path d="M280.6 208.4 285.3 208.0 288.0 204.7 283.3 204.6Z" fill="#8146f6"/><path d="M288.0 204.7 292.6 205.1 295.4 202.5 290.7 202.0Z" fill="#8b4cf5"/><path d="M244.7 346.5 249.3 345.6 252.0 344.0 247.4 344.9Z" fill="#00ff8a"/><path d="M278.2 278.0 282.9 255.5 285.6 236.0 280.9 247.4Z" fill="#0025ff"/><path d="M252.0 344.0 256.7 342.5 259.4 340.7 254.8 342.3Z" fill="#00ff95"/><path d="M237.3 348.7 241.9 348.1 244.7 346.5 240.0 347.1Z" fill="#00ff81"/><path d="M269.5 334.1 274.2 330.3 276.9 327.0 272.3 331.3Z" fill="#00ffc0"/><path d="M183.7 356.2 188.3 356.8 191.1 355.2 186.4 354.7Z" fill="#00ff64"/><path d="M203.1 354.6 207.7 354.9 210.5 353.4 205.8 353.0Z" fill="#00ff6a"/><path d="M229.9 350.5 234.5 350.3 237.3 348.7 232.6 349.0Z" fill="#00ff7b"/><path d="M164.3 357.5 168.9 358.2 171.6 356.6 167.0 355.9Z" fill="#00ff5f"/><path d="M275.1 224.1 279.8 218.8 282.5 212.3 277.9 214.0Z" fill="#5d33f8"/><path d="M259.4 340.7 264.1 338.5 266.8 336.4 262.2 338.8Z" fill="#00ffa4"/><path d="M277.9 214.0 282.5 212.3 285.3 208.0 280.6 208.4Z" fill="#7440f7"/><path d="M222.5 352.2 227.2 352.1 229.9 350.5 225.2 350.6Z" fill="#00ff75"/><path d="M195.7 355.7 200.4 356.2 203.1 354.6 198.4 354.1Z" fill="#00ff68"/><path d="M176.3 357.2 180.9 357.8 183.7 356.2 179.0 355.6Z" fill="#00ff62"/><path d="M156.9 358.3 161.5 359.1 164.3 357.5 159.6 356.8Z" fill="#00ff5e"/><path d="M215.1 353.6 219.8 353.7 222.5 352.2 217.9 352.0Z" fill="#00ff71"/><path d="M280.1 284.2 284.8 262.9 287.5 242.3 282.9 255.5Z" fill="#003cff"/><path d="M292.6 205.1 297.3 205.5 300.0 203.2 295.4 202.5Z" fill="#8d4df5"/><path d="M285.3 208.0 289.9 208.0 292.6 205.1 288.0 204.7Z" fill="#8549f6"/><path d="M188.3 356.8 193.0 357.3 195.7 355.7 191.1 355.2Z" fill="#00ff66"/><path d="M266.8 336.4 271.5 333.1 274.2 330.3 269.5 334.1Z" fill="#00ffba"/><path d="M168.9 358.2 173.6 358.8 176.3 357.2 171.6 356.6Z" fill="#00ff61"/><path d="M207.7 354.9 212.4 355.2 215.1 353.6 210.5 353.4Z" fill="#00ff6d"/><path d="M459.4 349.6 464.0 352.6 466.8 348.4 462.1 343.3Z" fill="#00ff84"/><path d="M241.9 348.1 246.6 347.2 249.3 345.6 244.7 346.5Z" fill="#00ff89"/><path d="M249.3 345.6 254.0 344.2 256.7 342.5 252.0 344.0Z" fill="#00ff94"/><path d="M234.5 350.3 239.2 349.7 241.9 348.1 237.3 348.7Z" fill="#00ff81"/><path d="M180.9 357.8 185.6 358.4 188.3 356.8 183.7 356.2Z" fill="#00ff64"/><path d="M200.4 356.2 205.0 356.5 207.7 354.9 203.1 354.6Z" fill="#00ff6a"/><path d="M227.2 352.1 231.8 351.8 234.5 350.3 229.9 350.5Z" fill="#00ff7b"/><path d="M283.2 308.4 287.8 295.7 290.6 278.6 285.9 294.3Z" fill="#00b2ff"/><path d="M277.1 231.3 281.7 224.1 284.5 216.4 279.8 218.8Z" fill="#502cf9"/><path d="M256.7 342.5 261.3 340.3 264.1 338.5 259.4 340.7Z" fill="#00ffa2"/><path d="M161.5 359.1 166.2 359.8 168.9 358.2 164.3 357.5Z" fill="#00ff5f"/><path d="M282.5 212.3 287.2 211.6 289.9 208.0 285.3 208.0Z" fill="#7c44f6"/><path d="M452.0 350.6 456.7 353.4 459.4 349.6 454.7 345.2Z" fill="#00ff81"/><path d="M297.3 205.5 301.9 206.1 304.7 203.8 300.0 203.2Z" fill="#8e4ef5"/><path d="M456.7 353.4 461.3 355.6 464.0 352.6 459.4 349.6Z" fill="#00ff77"/><path d="M219.8 353.7 224.4 353.7 227.2 352.1 222.5 352.2Z" fill="#00ff75"/><path d="M454.7 345.2 459.4 349.6 462.1 343.3 457.5 333.5Z" fill="#00ff9b"/><path d="M289.9 208.0 294.6 208.2 297.3 205.5 292.6 205.1Z" fill="#884af5"/><path d="M282.0 288.8 286.7 269.2 289.4 248.7 284.8 262.9Z" fill="#004eff"/><path d="M279.6 322.6 284.3 315.4 287.0 307.6 282.4 316.8Z" fill="#00ffff"/><path d="M193.0 357.3 197.6 357.8 200.4 356.2 195.7 355.7Z" fill="#00ff68"/><path d="M462.1 343.3 466.8 348.4 469.5 340.7 464.8 326.9Z" fill="#00ffa7"/><path d="M276.9 327.0 281.6 321.0 284.3 315.4 279.6 322.6Z" fill="#00ffea"/><path d="M173.6 358.8 178.2 359.4 180.9 357.8 176.3 357.2Z" fill="#00ff62"/><path d="M447.3 346.6 452.0 350.6 454.7 345.2 450.1 337.5Z" fill="#00ff94"/><path d="M279.8 218.8 284.5 216.4 287.2 211.6 282.5 212.3Z" fill="#6d3bf7"/><path d="M154.1 359.9 158.8 360.7 161.5 359.1 156.9 358.3Z" fill="#00ff5e"/><path d="M212.4 355.2 217.1 355.3 219.8 353.7 215.1 353.6Z" fill="#00ff71"/><path d="M444.6 351.4 449.3 354.1 452.0 350.6 447.3 346.6Z" fill="#00ff80"/><path d="M264.1 338.5 268.7 335.3 271.5 333.1 266.8 336.4Z" fill="#00ffb6"/><path d="M440.0 347.7 444.6 351.4 447.3 346.6 442.7 340.2Z" fill="#00ff90"/><path d="M449.3 354.1 453.9 356.2 456.7 353.4 452.0 350.6Z" fill="#00ff76"/><path d="M185.6 358.4 190.3 358.9 193.0 357.3 188.3 356.8Z" fill="#00ff65"/><path d="M166.2 359.8 170.8 360.4 173.6 358.8 168.9 358.2Z" fill="#00ff60"/><path d="M282.4 316.8 287.0 307.6 289.8 296.6 285.1 308.3Z" fill="#00deff"/><path d="M205.0 356.5 209.7 356.8 212.4 355.2 207.7 354.9Z" fill="#00ff6d"/><path d="M274.2 330.3 278.8 325.2 281.6 321.0 276.9 327.0Z" fill="#00ffdc"/><path d="M301.9 206.1 306.6 206.7 309.3 204.5 304.7 203.8Z" fill="#8f4ef5"/><path d="M239.2 349.7 243.9 348.8 246.6 347.2 241.9 348.1Z" fill="#00ff89"/><path d="M246.6 347.2 251.2 345.8 254.0 344.2 249.3 345.6Z" fill="#00ff94"/><path d="M437.2 352.0 441.9 354.7 444.6 351.4 440.0 347.7Z" fill="#00ff7f"/><path d="M231.8 351.8 236.5 351.3 239.2 349.7 234.5 350.3Z" fill="#00ff81"/><path d="M453.9 356.2 458.6 358.0 461.3 355.6 456.7 353.4Z" fill="#00ff70"/><path d="M279.0 239.2 283.7 229.9 286.4 220.9 281.7 224.1Z" fill="#4023fa"/><path d="M287.2 211.6 291.8 211.4 294.6 208.2 289.9 208.0Z" fill="#8146f6"/><path d="M432.6 348.5 437.2 352.0 440.0 347.7 435.3 342.0Z" fill="#00ff8e"/><path d="M294.6 208.2 299.2 208.6 301.9 206.1 297.3 205.5Z" fill="#8a4bf5"/><path d="M178.2 359.4 182.9 360.0 185.6 358.4 180.9 357.8Z" fill="#00ff63"/><path d="M197.6 357.8 202.3 358.1 205.0 356.5 200.4 356.2Z" fill="#00ff6a"/><path d="M254.0 344.2 258.6 342.1 261.3 340.3 256.7 342.5Z" fill="#00ffa1"/><path d="M224.4 353.7 229.1 353.4 231.8 351.8 227.2 352.1Z" fill="#00ff7b"/><path d="M441.9 354.7 446.5 356.8 449.3 354.1 444.6 351.4Z" fill="#00ff76"/><path d="M158.8 360.7 163.5 361.4 166.2 359.8 161.5 359.1Z" fill="#00ff5f"/><path d="M217.1 355.3 221.7 355.3 224.4 353.7 219.8 353.7Z" fill="#00ff75"/><path d="M284.0 292.0 288.6 274.4 291.4 254.9 286.7 269.2Z" fill="#005bff"/><path d="M429.9 352.6 434.5 355.2 437.2 352.0 432.6 348.5Z" fill="#00ff7f"/><path d="M190.3 358.9 194.9 359.4 197.6 357.8 193.0 357.3Z" fill="#00ff67"/><path d="M425.2 349.1 429.9 352.6 432.6 348.5 427.9 343.3Z" fill="#00ff8d"/><path d="M170.8 360.4 175.5 361.0 178.2 359.4 173.6 358.8Z" fill="#00ff62"/><path d="M271.5 333.1 276.1 328.5 278.8 325.2 274.2 330.3Z" fill="#00ffd3"/><path d="M446.5 356.8 451.2 358.6 453.9 356.2 449.3 354.1Z" fill="#00ff70"/><path d="M435.3 342.0 440.0 347.7 442.7 340.2 438.0 327.3Z" fill="#00ffaf"/><path d="M306.6 206.7 311.3 207.4 314.0 205.3 309.3 204.5Z" fill="#904ff5"/><path d="M261.3 340.3 266.0 337.3 268.7 335.3 264.1 338.5Z" fill="#00ffb4"/><path d="M284.5 216.4 289.1 215.3 291.8 211.4 287.2 211.6Z" fill="#7641f7"/><path d="M151.4 361.5 156.1 362.3 158.8 360.7 154.1 359.9Z" fill="#00ff5e"/><path d="M209.7 356.8 214.3 356.9 217.1 355.3 212.4 355.2Z" fill="#00ff71"/><path d="M442.7 340.2 447.3 346.6 450.1 337.5 445.4 320.3Z" fill="#00ffbb"/><path d="M427.9 343.3 432.6 348.5 435.3 342.0 430.7 331.6Z" fill="#00ffa8"/><path d="M434.5 355.2 439.2 357.3 441.9 354.7 437.2 352.0Z" fill="#00ff77"/><path d="M281.7 224.1 286.4 220.9 289.1 215.3 284.5 216.4Z" fill="#6437f8"/><path d="M299.2 208.6 303.9 209.1 306.6 206.7 301.9 206.1Z" fill="#8c4cf5"/><path d="M182.9 360.0 187.5 360.5 190.3 358.9 185.6 358.4Z" fill="#00ff65"/><path d="M291.8 211.4 296.5 211.5 299.2 208.6 294.6 208.2Z" fill="#8448f6"/><path d="M163.5 361.4 168.1 362.0 170.8 360.4 166.2 359.8Z" fill="#00ff60"/><path d="M280.9 247.4 285.6 236.0 288.3 225.6 283.7 229.9Z" fill="#2f1afc"/><path d="M202.3 358.1 206.9 358.4 209.7 356.8 205.0 356.5Z" fill="#00ff6d"/><path d="M451.2 358.6 455.9 360.2 458.6 358.0 453.9 356.2Z" fill="#00ff6b"/><path d="M420.5 344.2 425.2 349.1 427.9 343.3 423.3 334.4Z" fill="#00ffa4"/><path d="M417.8 349.6 422.5 353.0 425.2 349.1 420.5 344.2Z" fill="#00ff8d"/><path d="M422.5 353.0 427.1 355.6 429.9 352.6 425.2 349.1Z" fill="#00ff80"/><path d="M439.2 357.3 443.8 359.1 446.5 356.8 441.9 354.7Z" fill="#00ff70"/><path d="M236.5 351.3 241.1 350.3 243.9 348.8 239.2 349.7Z" fill="#00ff89"/><path d="M243.9 348.8 248.5 347.3 251.2 345.8 246.6 347.2Z" fill="#00ff94"/><path d="M285.1 308.3 289.8 296.6 292.5 282.0 287.8 295.7Z" fill="#00acff"/><path d="M229.1 353.4 233.7 352.8 236.5 351.3 231.8 351.8Z" fill="#00ff81"/><path d="M427.1 355.6 431.8 357.7 434.5 355.2 429.9 352.6Z" fill="#00ff77"/><path d="M450.1 337.5 454.7 345.2 457.5 333.5 452.8 308.8Z" fill="#00ffd0"/><path d="M175.5 361.0 180.1 361.6 182.9 360.0 178.2 359.4Z" fill="#00ff63"/><path d="M194.9 359.4 199.6 359.8 202.3 358.1 197.6 357.8Z" fill="#00ff6a"/><path d="M311.3 207.4 315.9 208.1 318.6 206.1 314.0 205.3Z" fill="#914ff5"/><path d="M251.2 345.8 255.9 343.7 258.6 342.1 254.0 344.2Z" fill="#00ffa1"/><path d="M221.7 355.3 226.4 355.0 229.1 353.4 224.4 353.7Z" fill="#00ff7a"/><path d="M156.1 362.3 160.7 363.0 163.5 361.4 158.8 360.7Z" fill="#00ff5f"/><path d="M413.2 344.9 417.8 349.6 420.5 344.2 415.9 336.3Z" fill="#00ffa3"/><path d="M268.7 335.3 273.4 331.1 276.1 328.5 271.5 333.1Z" fill="#00ffcd"/><path d="M443.8 359.1 448.5 360.7 451.2 358.6 446.5 356.8Z" fill="#00ff6c"/><path d="M214.3 356.9 219.0 356.9 221.7 355.3 217.1 355.3Z" fill="#00ff75"/><path d="M410.4 349.9 415.1 353.3 417.8 349.6 413.2 344.9Z" fill="#00ff8f"/><path d="M303.9 209.1 308.5 209.7 311.3 207.4 306.6 206.7Z" fill="#8d4df5"/><path d="M415.1 353.3 419.7 355.9 422.5 353.0 417.8 349.6Z" fill="#00ff82"/><path d="M431.8 357.7 436.4 359.6 439.2 357.3 434.5 355.2Z" fill="#00ff71"/><path d="M289.1 215.3 293.8 214.9 296.5 211.5 291.8 211.4Z" fill="#7c44f6"/><path d="M187.5 360.5 192.2 361.0 194.9 359.4 190.3 358.9Z" fill="#00ff67"/><path d="M168.1 362.0 172.8 362.7 175.5 361.0 170.8 360.4Z" fill="#00ff61"/><path d="M258.6 342.1 263.3 339.1 266.0 337.3 261.3 340.3Z" fill="#00ffb2"/><path d="M296.5 211.5 301.1 211.8 303.9 209.1 299.2 208.6Z" fill="#874af5"/><path d="M285.9 294.3 290.6 278.6 293.3 260.8 288.6 274.4Z" fill="#0065ff"/><path d="M148.7 363.1 153.3 363.9 156.1 362.3 151.4 361.5Z" fill="#00ff5e"/><path d="M419.7 355.9 424.4 358.1 427.1 355.6 422.5 353.0Z" fill="#00ff79"/><path d="M206.9 358.4 211.6 358.5 214.3 356.9 209.7 356.8Z" fill="#00ff71"/><path d="M282.9 255.5 287.5 242.3 290.2 230.6 285.6 236.0Z" fill="#1d10fd"/><path d="M405.8 345.2 410.4 349.9 413.2 344.9 408.5 337.4Z" fill="#00ffa3"/><path d="M448.5 360.7 453.1 362.2 455.9 360.2 451.2 358.6Z" fill="#00ff68"/><path d="M315.9 208.1 320.6 208.9 323.3 206.9 318.6 206.1Z" fill="#9250f5"/><path d="M180.1 361.6 184.8 362.2 187.5 360.5 182.9 360.0Z" fill="#00ff65"/><path d="M436.4 359.6 441.1 361.2 443.8 359.1 439.2 357.3Z" fill="#00ff6d"/><path d="M160.7 363.0 165.4 363.7 168.1 362.0 163.5 361.4Z" fill="#00ff60"/><path d="M283.7 229.9 288.3 225.6 291.0 219.3 286.4 220.9Z" fill="#5a31f9"/><path d="M281.6 321.0 286.2 313.5 289.0 306.5 284.3 315.4Z" fill="#00ecff"/><path d="M286.4 220.9 291.0 219.3 293.8 214.9 289.1 215.3Z" fill="#703df7"/><path d="M199.6 359.8 204.2 360.0 206.9 358.4 202.3 358.1Z" fill="#00ff6d"/><path d="M424.4 358.1 429.1 360.0 431.8 357.7 427.1 355.6Z" fill="#00ff72"/><path d="M403.1 350.0 407.7 353.4 410.4 349.9 405.8 345.2Z" fill="#00ff91"/><path d="M407.7 353.4 412.4 356.1 415.1 353.3 410.4 349.9Z" fill="#00ff84"/><path d="M233.7 352.8 238.4 351.9 241.1 350.3 236.5 351.3Z" fill="#00ff89"/><path d="M278.8 325.2 283.5 318.7 286.2 313.5 281.6 321.0Z" fill="#00ffff"/><path d="M241.1 350.3 245.8 348.9 248.5 347.3 243.9 348.8Z" fill="#00ff94"/><path d="M308.5 209.7 313.2 210.4 315.9 208.1 311.3 207.4Z" fill="#8e4ef5"/><path d="M226.4 355.0 231.0 354.5 233.7 352.8 229.1 353.4Z" fill="#00ff81"/><path d="M412.4 356.1 417.0 358.4 419.7 355.9 415.1 353.3Z" fill="#00ff7b"/><path d="M266.0 337.3 270.7 333.2 273.4 331.1 268.7 335.3Z" fill="#00ffca"/><path d="M284.3 315.4 289.0 306.5 291.7 297.0 287.0 307.6Z" fill="#00ceff"/><path d="M172.8 362.7 177.4 363.3 180.1 361.6 175.5 361.0Z" fill="#00ff63"/><path d="M192.2 361.0 196.8 361.4 199.6 359.8 194.9 359.4Z" fill="#00ff6a"/><path d="M248.5 347.3 253.2 345.2 255.9 343.7 251.2 345.8Z" fill="#00ffa1"/><path d="M457.5 333.5 462.1 343.3 464.8 326.9 460.2 291.1Z" fill="#00fff2"/><path d="M219.0 356.9 223.6 356.6 226.4 355.0 221.7 355.3Z" fill="#00ff7a"/><path d="M153.3 363.9 158.0 364.6 160.7 363.0 156.1 362.3Z" fill="#00ff5f"/><path d="M398.4 345.2 403.1 350.0 405.8 345.2 401.1 338.0Z" fill="#00ffa5"/><path d="M301.1 211.8 305.8 212.2 308.5 209.7 303.9 209.1Z" fill="#894bf5"/><path d="M441.1 361.2 445.7 362.7 448.5 360.7 443.8 359.1Z" fill="#00ff69"/><path d="M293.8 214.9 298.4 214.8 301.1 211.8 296.5 211.5Z" fill="#8046f6"/><path d="M415.9 336.3 420.5 344.2 423.3 334.4 418.6 316.7Z" fill="#00ffd0"/><path d="M429.1 360.0 433.7 361.6 436.4 359.6 431.8 357.7Z" fill="#00ff6e"/><path d="M284.8 262.9 289.4 248.7 292.2 235.8 287.5 242.3Z" fill="#0c06fe"/><path d="M211.6 358.5 216.3 358.5 219.0 356.9 214.3 356.9Z" fill="#00ff75"/><path d="M423.3 334.4 427.9 343.3 430.7 331.6 426.0 309.5Z" fill="#00ffdd"/><path d="M408.5 337.4 413.2 344.9 415.9 336.3 411.2 321.3Z" fill="#00ffc9"/><path d="M320.6 208.9 325.2 209.7 327.9 207.7 323.3 206.9Z" fill="#9250f5"/><path d="M417.0 358.4 421.7 360.3 424.4 358.1 419.7 355.9Z" fill="#00ff74"/><path d="M184.8 362.2 189.5 362.7 192.2 361.0 187.5 360.5Z" fill="#00ff67"/><path d="M400.3 353.4 405.0 356.3 407.7 353.4 403.1 350.0Z" fill="#00ff86"/><path d="M276.1 328.5 280.8 322.6 283.5 318.7 278.8 325.2Z" fill="#00fff2"/><path d="M395.7 349.8 400.3 353.4 403.1 350.0 398.4 345.2Z" fill="#00ff94"/><path d="M165.4 363.7 170.0 364.3 172.8 362.7 168.1 362.0Z" fill="#00ff61"/><path d="M255.9 343.7 260.5 340.7 263.3 339.1 258.6 342.1Z" fill="#00ffb2"/><path d="M146.0 364.8 150.6 365.5 153.3 363.9 148.7 363.1Z" fill="#00ff5d"/><path d="M204.2 360.0 208.9 360.2 211.6 358.5 206.9 358.4Z" fill="#00ff70"/><path d="M405.0 356.3 409.6 358.6 412.4 356.1 407.7 353.4Z" fill="#00ff7d"/><path d="M313.2 210.4 317.8 211.1 320.6 208.9 315.9 208.1Z" fill="#8f4ef5"/><path d="M401.1 338.0 405.8 345.2 408.5 337.4 403.9 324.3Z" fill="#00ffc6"/><path d="M445.7 362.7 450.4 364.1 453.1 362.2 448.5 360.7Z" fill="#00ff66"/><path d="M433.7 361.6 438.4 363.2 441.1 361.2 436.4 359.6Z" fill="#00ff6a"/><path d="M421.7 360.3 426.3 362.0 429.1 360.0 424.4 358.1Z" fill="#00ff6f"/><path d="M177.4 363.3 182.1 363.8 184.8 362.2 180.1 361.6Z" fill="#00ff65"/><path d="M391.0 345.0 395.7 349.8 398.4 345.2 393.7 338.2Z" fill="#00ffa8"/><path d="M291.0 219.3 295.7 218.6 298.4 214.8 293.8 214.9Z" fill="#7741f7"/><path d="M430.7 331.6 435.3 342.0 438.0 327.3 433.4 298.8Z" fill="#00fff1"/><path d="M158.0 364.6 162.7 365.3 165.4 363.7 160.7 363.0Z" fill="#00ff60"/><path d="M196.8 361.4 201.5 361.7 204.2 360.0 199.6 359.8Z" fill="#00ff6c"/><path d="M305.8 212.2 310.5 212.8 313.2 210.4 308.5 209.7Z" fill="#8b4cf5"/><path d="M285.6 236.0 290.2 230.6 293.0 223.4 288.3 225.6Z" fill="#4e2bf9"/><path d="M409.6 358.6 414.3 360.6 417.0 358.4 412.4 356.1Z" fill="#00ff76"/><path d="M287.8 295.7 292.5 282.0 295.2 266.1 290.6 278.6Z" fill="#006aff"/><path d="M298.4 214.8 303.1 215.0 305.8 212.2 301.1 211.8Z" fill="#8448f6"/><path d="M287.0 307.6 291.7 297.0 294.4 284.7 289.8 296.6Z" fill="#00a4ff"/><path d="M325.2 209.7 329.9 210.5 332.6 208.5 327.9 207.7Z" fill="#9350f5"/><path d="M231.0 354.5 235.7 353.6 238.4 351.9 233.7 352.8Z" fill="#00ff89"/><path d="M238.4 351.9 243.1 350.5 245.8 348.9 241.1 350.3Z" fill="#00ff93"/><path d="M392.9 353.3 397.6 356.3 400.3 353.4 395.7 349.8Z" fill="#00ff8a"/><path d="M263.3 339.1 267.9 335.1 270.7 333.2 266.0 337.3Z" fill="#00ffc8"/><path d="M223.6 356.6 228.3 356.1 231.0 354.5 226.4 355.0Z" fill="#00ff81"/><path d="M388.3 349.5 392.9 353.3 395.7 349.8 391.0 345.0Z" fill="#00ff98"/><path d="M288.3 225.6 293.0 223.4 295.7 218.6 291.0 219.3Z" fill="#6839f8"/><path d="M393.7 338.2 398.4 345.2 401.1 338.0 396.5 326.0Z" fill="#00ffc6"/><path d="M170.0 364.3 174.7 364.9 177.4 363.3 172.8 362.7Z" fill="#00ff62"/><path d="M273.4 331.1 278.0 325.6 280.8 322.6 276.1 328.5Z" fill="#00ffeb"/><path d="M189.5 362.7 194.1 363.1 196.8 361.4 192.2 361.0Z" fill="#00ff69"/><path d="M438.4 363.2 443.0 364.6 445.7 362.7 441.1 361.2Z" fill="#00ff67"/><path d="M286.7 269.2 291.4 254.9 294.1 241.3 289.4 248.7Z" fill="#0005ff"/><path d="M426.3 362.0 431.0 363.6 433.7 361.6 429.1 360.0Z" fill="#00ff6b"/><path d="M216.3 358.5 220.9 358.3 223.6 356.6 219.0 356.9Z" fill="#00ff7a"/><path d="M245.8 348.9 250.4 346.8 253.2 345.2 248.5 347.3Z" fill="#00ffa1"/><path d="M397.6 356.3 402.2 358.7 405.0 356.3 400.3 353.4Z" fill="#00ff80"/><path d="M150.6 365.5 155.3 366.2 158.0 364.6 153.3 363.9Z" fill="#00ff5e"/><path d="M414.3 360.6 418.9 362.4 421.7 360.3 417.0 358.4Z" fill="#00ff71"/><path d="M317.8 211.1 322.5 211.8 325.2 209.7 320.6 208.9Z" fill="#904ff5"/><path d="M208.9 360.2 213.5 360.2 216.3 358.5 211.6 358.5Z" fill="#00ff74"/><path d="M383.6 344.4 388.3 349.5 391.0 345.0 386.4 337.8Z" fill="#00ffad"/><path d="M402.2 358.7 406.9 360.8 409.6 358.6 405.0 356.3Z" fill="#00ff78"/><path d="M182.1 363.8 186.7 364.3 189.5 362.7 184.8 362.2Z" fill="#00ff66"/><path d="M162.7 365.3 167.3 366.0 170.0 364.3 165.4 363.7Z" fill="#00ff61"/><path d="M253.2 345.2 257.8 342.3 260.5 340.7 255.9 343.7Z" fill="#00ffb1"/><path d="M310.5 212.8 315.1 213.4 317.8 211.1 313.2 210.4Z" fill="#8c4cf5"/><path d="M143.2 366.4 147.9 367.1 150.6 365.5 146.0 364.8Z" fill="#00ff5d"/><path d="M329.9 210.5 334.5 211.3 337.3 209.4 332.6 208.5Z" fill="#9350f4"/><path d="M201.5 361.7 206.1 361.9 208.9 360.2 204.2 360.0Z" fill="#00ff70"/><path d="M295.7 218.6 300.3 218.3 303.1 215.0 298.4 214.8Z" fill="#7c44f6"/><path d="M431.0 363.6 435.6 365.0 438.4 363.2 433.7 361.6Z" fill="#00ff68"/><path d="M443.0 364.6 447.7 365.9 450.4 364.1 445.7 362.7Z" fill="#00ff65"/><path d="M386.4 337.8 391.0 345.0 393.7 338.2 389.1 326.8Z" fill="#00ffc9"/><path d="M303.1 215.0 307.7 215.4 310.5 212.8 305.8 212.2Z" fill="#8649f5"/><path d="M418.9 362.4 423.6 364.0 426.3 362.0 421.7 360.3Z" fill="#00ff6d"/><path d="M385.6 352.9 390.2 356.1 392.9 353.3 388.3 349.5Z" fill="#00ff8f"/><path d="M438.0 327.3 442.7 340.2 445.4 320.3 440.8 285.0Z" fill="#00efff"/><path d="M380.9 348.8 385.6 352.9 388.3 349.5 383.6 344.4Z" fill="#00ff9e"/><path d="M174.7 364.9 179.3 365.5 182.1 363.8 177.4 363.3Z" fill="#00ff64"/><path d="M390.2 356.1 394.9 358.7 397.6 356.3 392.9 353.3Z" fill="#00ff84"/><path d="M406.9 360.8 411.6 362.6 414.3 360.6 409.6 358.6Z" fill="#00ff73"/><path d="M464.8 326.9 469.5 340.7 472.2 314.8 467.6 271.7Z" fill="#00deff"/><path d="M155.3 366.2 159.9 366.9 162.7 365.3 158.0 364.6Z" fill="#00ff5f"/><path d="M194.1 363.1 198.8 363.4 201.5 361.7 196.8 361.4Z" fill="#00ff6c"/><path d="M287.5 242.3 292.2 235.8 294.9 227.9 290.2 230.6Z" fill="#4124fa"/><path d="M322.5 211.8 327.1 212.6 329.9 210.5 325.2 209.7Z" fill="#904ff5"/><path d="M270.7 333.2 275.3 328.0 278.0 325.6 273.4 331.1Z" fill="#00ffe6"/><path d="M228.3 356.1 232.9 355.3 235.7 353.6 231.0 354.5Z" fill="#00ff89"/><path d="M394.9 358.7 399.5 360.9 402.2 358.7 397.6 356.3Z" fill="#00ff7b"/><path d="M260.5 340.7 265.2 336.8 267.9 335.1 263.3 339.1Z" fill="#00ffc7"/><path d="M235.7 353.6 240.3 352.2 243.1 350.5 238.4 351.9Z" fill="#00ff93"/><path d="M220.9 358.3 225.6 357.8 228.3 356.1 223.6 356.6Z" fill="#00ff80"/><path d="M288.6 274.4 293.3 260.8 296.0 246.9 291.4 254.9Z" fill="#0015ff"/><path d="M435.6 365.0 440.3 366.3 443.0 364.6 438.4 363.2Z" fill="#00ff66"/><path d="M423.6 364.0 428.2 365.4 431.0 363.6 426.3 362.0Z" fill="#00ff69"/><path d="M293.0 223.4 297.6 222.4 300.3 218.3 295.7 218.6Z" fill="#713ef7"/><path d="M167.3 366.0 172.0 366.6 174.7 364.9 170.0 364.3Z" fill="#00ff62"/><path d="M186.7 364.3 191.4 364.8 194.1 363.1 189.5 362.7Z" fill="#00ff69"/><path d="M315.1 213.4 319.8 214.1 322.5 211.8 317.8 211.1Z" fill="#8d4df5"/><path d="M213.5 360.2 218.2 360.1 220.9 358.3 216.3 358.5Z" fill="#00ff79"/><path d="M411.6 362.6 416.2 364.3 418.9 362.4 414.3 360.6Z" fill="#00ff6e"/><path d="M376.3 343.4 380.9 348.8 383.6 344.4 379.0 337.0Z" fill="#00ffb4"/><path d="M334.5 211.3 339.2 212.2 341.9 210.2 337.3 209.4Z" fill="#9351f4"/><path d="M243.1 350.5 247.7 348.4 250.4 346.8 245.8 348.9Z" fill="#00ffa1"/><path d="M147.9 367.1 152.5 367.9 155.3 366.2 150.6 365.5Z" fill="#00ff5e"/><path d="M290.2 230.6 294.9 227.9 297.6 222.4 293.0 223.4Z" fill="#5f34f8"/><path d="M379.0 337.0 383.6 344.4 386.4 337.8 381.7 326.8Z" fill="#00ffce"/><path d="M399.5 360.9 404.2 362.8 406.9 360.8 402.2 358.7Z" fill="#00ff75"/><path d="M307.7 215.4 312.4 215.9 315.1 213.4 310.5 212.8Z" fill="#884af5"/><path d="M206.1 361.9 210.8 362.0 213.5 360.2 208.9 360.2Z" fill="#00ff74"/><path d="M378.2 352.2 382.8 355.7 385.6 352.9 380.9 348.8Z" fill="#00ff94"/><path d="M300.3 218.3 305.0 218.4 307.7 215.4 303.1 215.0Z" fill="#8046f6"/><path d="M283.5 318.7 288.1 311.3 290.9 305.2 286.2 313.5Z" fill="#00d6ff"/><path d="M382.8 355.7 387.5 358.5 390.2 356.1 385.6 352.9Z" fill="#00ff88"/><path d="M289.8 296.6 294.4 284.7 297.1 270.9 292.5 282.0Z" fill="#006cff"/><path d="M179.3 365.5 184.0 366.0 186.7 364.3 182.1 363.8Z" fill="#00ff66"/><path d="M159.9 366.9 164.6 367.6 167.3 366.0 162.7 365.3Z" fill="#00ff60"/><path d="M286.2 313.5 290.9 305.2 293.6 297.2 289.0 306.5Z" fill="#00bdff"/><path d="M327.1 212.6 331.8 213.4 334.5 211.3 329.9 210.5Z" fill="#914ff5"/><path d="M250.4 346.8 255.1 343.9 257.8 342.3 253.2 345.2Z" fill="#00ffb1"/><path d="M373.5 347.8 378.2 352.2 380.9 348.8 376.3 343.4Z" fill="#00ffa5"/><path d="M428.2 365.4 432.9 366.8 435.6 365.0 431.0 363.6Z" fill="#00ff67"/><path d="M198.8 363.4 203.4 363.6 206.1 361.9 201.5 361.7Z" fill="#00ff6f"/><path d="M140.5 368.0 145.2 368.8 147.9 367.1 143.2 366.4Z" fill="#00ff5d"/><path d="M440.3 366.3 444.9 367.6 447.7 365.9 443.0 364.6Z" fill="#00ff63"/><path d="M416.2 364.3 420.9 365.8 423.6 364.0 418.9 362.4Z" fill="#00ff6b"/><path d="M387.5 358.5 392.1 360.8 394.9 358.7 390.2 356.1Z" fill="#00ff7f"/><path d="M404.2 362.8 408.8 364.5 411.6 362.6 406.9 360.8Z" fill="#00ff70"/><path d="M280.8 322.6 285.4 315.8 288.1 311.3 283.5 318.7Z" fill="#00e6ff"/><path d="M172.0 366.6 176.6 367.2 179.3 365.5 174.7 364.9Z" fill="#00ff64"/><path d="M319.8 214.1 324.4 214.8 327.1 212.6 322.5 211.8Z" fill="#8e4df5"/><path d="M339.2 212.2 343.8 213.0 346.6 211.1 341.9 210.2Z" fill="#9451f4"/><path d="M267.9 335.1 272.6 330.0 275.3 328.0 270.7 333.2Z" fill="#00ffe3"/><path d="M191.4 364.8 196.0 365.1 198.8 363.4 194.1 363.1Z" fill="#00ff6b"/><path d="M152.5 367.9 157.2 368.6 159.9 366.9 155.3 366.2Z" fill="#00ff5f"/><path d="M289.4 248.7 294.1 241.3 296.8 232.5 292.2 235.8Z" fill="#341cfb"/><path d="M396.5 326.0 401.1 338.0 403.9 324.3 399.2 301.7Z" fill="#00f9ff"/><path d="M392.1 360.8 396.8 362.9 399.5 360.9 394.9 358.7Z" fill="#00ff78"/><path d="M403.9 324.3 408.5 337.4 411.2 321.3 406.6 295.4Z" fill="#00eeff"/><path d="M225.6 357.8 230.2 357.0 232.9 355.3 228.3 356.1Z" fill="#00ff88"/><path d="M297.6 222.4 302.3 222.0 305.0 218.4 300.3 218.3Z" fill="#7741f7"/><path d="M312.4 215.9 317.0 216.5 319.8 214.1 315.1 213.4Z" fill="#894bf5"/><path d="M368.9 341.9 373.5 347.8 376.3 343.4 371.6 335.7Z" fill="#00ffbd"/><path d="M289.0 306.5 293.6 297.2 296.3 287.0 291.7 297.0Z" fill="#009aff"/><path d="M232.9 355.3 237.6 353.9 240.3 352.2 235.7 353.6Z" fill="#00ff93"/><path d="M218.2 360.1 222.8 359.6 225.6 357.8 220.9 358.3Z" fill="#00ff7f"/><path d="M257.8 342.3 262.5 338.3 265.2 336.8 260.5 340.7Z" fill="#00ffc7"/><path d="M389.1 326.8 393.7 338.2 396.5 326.0 391.8 306.0Z" fill="#00feff"/><path d="M420.9 365.8 425.5 367.2 428.2 365.4 423.6 364.0Z" fill="#00ff68"/><path d="M432.9 366.8 437.6 368.1 440.3 366.3 435.6 365.0Z" fill="#00ff64"/><path d="M290.6 278.6 295.2 266.1 297.9 252.5 293.3 260.8Z" fill="#0023ff"/><path d="M445.4 320.3 450.1 337.5 452.8 308.8 448.1 270.7Z" fill="#00c7ff"/><path d="M305.0 218.4 309.7 218.7 312.4 215.9 307.7 215.4Z" fill="#8247f6"/><path d="M371.6 335.7 376.3 343.4 379.0 337.0 374.3 326.1Z" fill="#00ffd6"/><path d="M375.4 355.0 380.1 358.1 382.8 355.7 378.2 352.2Z" fill="#00ff8e"/><path d="M331.8 213.4 336.5 214.2 339.2 212.2 334.5 211.3Z" fill="#914ff5"/><path d="M408.8 364.5 413.5 366.1 416.2 364.3 411.6 362.6Z" fill="#00ff6d"/><path d="M164.6 367.6 169.2 368.3 172.0 366.6 167.3 366.0Z" fill="#00ff62"/><path d="M370.8 351.2 375.4 355.0 378.2 352.2 373.5 347.8Z" fill="#00ff9c"/><path d="M184.0 366.0 188.7 366.5 191.4 364.8 186.7 364.3Z" fill="#00ff68"/><path d="M210.8 362.0 215.5 361.8 218.2 360.1 213.5 360.2Z" fill="#00ff78"/><path d="M240.3 352.2 245.0 350.1 247.7 348.4 243.1 350.5Z" fill="#00ffa0"/><path d="M145.2 368.8 149.8 369.5 152.5 367.9 147.9 367.1Z" fill="#00ff5e"/><path d="M396.8 362.9 401.4 364.7 404.2 362.8 399.5 360.9Z" fill="#00ff73"/><path d="M380.1 358.1 384.8 360.6 387.5 358.5 382.8 355.7Z" fill="#00ff84"/><path d="M278.0 325.6 282.7 319.3 285.4 315.8 280.8 322.6Z" fill="#00f1ff"/><path d="M411.2 321.3 415.9 336.3 418.6 316.7 414.0 287.1Z" fill="#00dcff"/><path d="M203.4 363.6 208.1 363.8 210.8 362.0 206.1 361.9Z" fill="#00ff73"/><path d="M366.1 346.3 370.8 351.2 373.5 347.8 368.9 341.9Z" fill="#00ffae"/><path d="M294.9 227.9 299.5 226.5 302.3 222.0 297.6 222.4Z" fill="#6a3af7"/><path d="M343.8 213.0 348.5 213.9 351.2 212.0 346.6 211.1Z" fill="#9451f4"/><path d="M324.4 214.8 329.1 215.6 331.8 213.4 327.1 212.6Z" fill="#8e4ef5"/><path d="M292.2 235.8 296.8 232.5 299.5 226.5 294.9 227.9Z" fill="#562ff9"/><path d="M176.6 367.2 181.3 367.7 184.0 366.0 179.3 365.5Z" fill="#00ff65"/><path d="M381.7 326.8 386.4 337.8 389.1 326.8 384.4 308.8Z" fill="#00ffff"/><path d="M157.2 368.6 161.9 369.3 164.6 367.6 159.9 366.9Z" fill="#00ff60"/><path d="M384.8 360.6 389.4 362.8 392.1 360.8 387.5 358.5Z" fill="#00ff7c"/><path d="M247.7 348.4 252.4 345.5 255.1 343.9 250.4 346.8Z" fill="#00ffb1"/><path d="M425.5 367.2 430.2 368.5 432.9 366.8 428.2 365.4Z" fill="#00ff66"/><path d="M196.0 365.1 200.7 365.4 203.4 363.6 198.8 363.4Z" fill="#00ff6e"/><path d="M413.5 366.1 418.1 367.6 420.9 365.8 416.2 364.3Z" fill="#00ff69"/><path d="M437.6 368.1 442.2 369.3 444.9 367.6 440.3 366.3Z" fill="#00ff63"/><path d="M137.8 369.6 142.4 370.4 145.2 368.8 140.5 368.0Z" fill="#00ff5c"/><path d="M317.0 216.5 321.7 217.2 324.4 214.8 319.8 214.1Z" fill="#8a4cf5"/><path d="M401.4 364.7 406.1 366.3 408.8 364.5 404.2 362.8Z" fill="#00ff6f"/><path d="M336.5 214.2 341.1 215.1 343.8 213.0 339.2 212.2Z" fill="#9250f5"/><path d="M169.2 368.3 173.9 368.9 176.6 367.2 172.0 366.6Z" fill="#00ff63"/><path d="M302.3 222.0 306.9 222.0 309.7 218.7 305.0 218.4Z" fill="#7b43f6"/><path d="M309.7 218.7 314.3 219.2 317.0 216.5 312.4 215.9Z" fill="#8448f6"/><path d="M291.4 254.9 296.0 246.9 298.7 237.4 294.1 241.3Z" fill="#2615fc"/><path d="M265.2 336.8 269.9 331.7 272.6 330.0 267.9 335.1Z" fill="#00ffe2"/><path d="M389.4 362.8 394.1 364.8 396.8 362.9 392.1 360.8Z" fill="#00ff76"/><path d="M188.7 366.5 193.3 366.9 196.0 365.1 191.4 364.8Z" fill="#00ff6a"/><path d="M149.8 369.5 154.5 370.2 157.2 368.6 152.5 367.9Z" fill="#00ff5e"/><path d="M368.1 354.0 372.7 357.4 375.4 355.0 370.8 351.2Z" fill="#00ff95"/><path d="M372.7 357.4 377.4 360.2 380.1 358.1 375.4 355.0Z" fill="#00ff8a"/><path d="M222.8 359.6 227.5 358.9 230.2 357.0 225.6 357.8Z" fill="#00ff87"/><path d="M361.5 339.9 366.1 346.3 368.9 341.9 364.2 333.8Z" fill="#00ffc9"/><path d="M363.4 349.7 368.1 354.0 370.8 351.2 366.1 346.3Z" fill="#00ffa5"/><path d="M348.5 213.9 353.1 214.8 355.9 212.9 351.2 212.0Z" fill="#9451f4"/><path d="M418.6 316.7 423.3 334.4 426.0 309.5 421.3 277.5Z" fill="#00c3ff"/><path d="M275.3 328.0 280.0 321.9 282.7 319.3 278.0 325.6Z" fill="#00f7ff"/><path d="M215.5 361.8 220.1 361.5 222.8 359.6 218.2 360.1Z" fill="#00ff7e"/><path d="M230.2 357.0 234.9 355.8 237.6 353.9 232.9 355.3Z" fill="#00ff92"/><path d="M364.2 333.8 368.9 341.9 371.6 335.7 366.9 324.8Z" fill="#00ffe1"/><path d="M329.1 215.6 333.7 216.4 336.5 214.2 331.8 213.4Z" fill="#8f4ef5"/><path d="M374.3 326.1 379.0 337.0 381.7 326.8 377.1 310.2Z" fill="#00fcff"/><path d="M418.1 367.6 422.8 368.9 425.5 367.2 420.9 365.8Z" fill="#00ff67"/><path d="M430.2 368.5 434.8 369.8 437.6 368.1 432.9 366.8Z" fill="#00ff64"/><path d="M291.7 297.0 296.3 287.0 299.1 275.3 294.4 284.7Z" fill="#006cff"/><path d="M255.1 343.9 259.7 339.9 262.5 338.3 257.8 342.3Z" fill="#00ffc7"/><path d="M406.1 366.3 410.8 367.9 413.5 366.1 408.8 364.5Z" fill="#00ff6b"/><path d="M161.9 369.3 166.5 370.0 169.2 368.3 164.6 367.6Z" fill="#00ff61"/><path d="M181.3 367.7 185.9 368.2 188.7 366.5 184.0 366.0Z" fill="#00ff67"/><path d="M208.1 363.8 212.7 363.7 215.5 361.8 210.8 362.0Z" fill="#00ff77"/><path d="M377.4 360.2 382.0 362.6 384.8 360.6 380.1 358.1Z" fill="#00ff81"/><path d="M237.6 353.9 242.3 352.0 245.0 350.1 240.3 352.2Z" fill="#00ff9f"/><path d="M292.5 282.0 297.1 270.9 299.9 258.1 295.2 266.1Z" fill="#002eff"/><path d="M394.1 364.8 398.7 366.5 401.4 364.7 396.8 362.9Z" fill="#00ff71"/><path d="M142.4 370.4 147.1 371.2 149.8 369.5 145.2 368.8Z" fill="#00ff5d"/><path d="M321.7 217.2 326.3 217.9 329.1 215.6 324.4 214.8Z" fill="#8b4cf5"/><path d="M299.5 226.5 304.2 225.9 306.9 222.0 302.3 222.0Z" fill="#713ef7"/><path d="M200.7 365.4 205.3 365.6 208.1 363.8 203.4 363.6Z" fill="#00ff72"/><path d="M341.1 215.1 345.8 215.9 348.5 213.9 343.8 213.0Z" fill="#9250f5"/><path d="M358.8 344.3 363.4 349.7 366.1 346.3 361.5 339.9Z" fill="#00ffba"/><path d="M382.0 362.6 386.7 364.7 389.4 362.8 384.8 360.6Z" fill="#00ff7a"/><path d="M173.9 368.9 178.5 369.5 181.3 367.7 176.6 367.2Z" fill="#00ff65"/><path d="M314.3 219.2 319.0 219.7 321.7 217.2 317.0 216.5Z" fill="#8649f5"/><path d="M154.5 370.2 159.1 371.0 161.9 369.3 157.2 368.6Z" fill="#00ff5f"/><path d="M306.9 222.0 311.6 222.2 314.3 219.2 309.7 218.7Z" fill="#7e45f6"/><path d="M245.0 350.1 249.6 347.3 252.4 345.5 247.7 348.4Z" fill="#00ffb1"/><path d="M422.8 368.9 427.4 370.2 430.2 368.5 425.5 367.2Z" fill="#00ff65"/><path d="M294.1 241.3 298.7 237.4 301.5 230.8 296.8 232.5Z" fill="#4b29fa"/><path d="M193.3 366.9 198.0 367.2 200.7 365.4 196.0 365.1Z" fill="#00ff6d"/><path d="M410.8 367.9 415.4 369.3 418.1 367.6 413.5 366.1Z" fill="#00ff68"/><path d="M434.8 369.8 439.5 371.0 442.2 369.3 437.6 368.1Z" fill="#00ff62"/><path d="M353.1 214.8 357.8 215.7 360.5 213.8 355.9 212.9Z" fill="#9451f4"/><path d="M135.1 371.3 139.7 372.1 142.4 370.4 137.8 369.6Z" fill="#00ff5c"/><path d="M398.7 366.5 403.4 368.1 406.1 366.3 401.4 364.7Z" fill="#00ff6d"/><path d="M296.8 232.5 301.5 230.8 304.2 225.9 299.5 226.5Z" fill="#6235f8"/><path d="M333.7 216.4 338.4 217.2 341.1 215.1 336.5 214.2Z" fill="#8f4ef5"/><path d="M365.3 356.4 370.0 359.6 372.7 357.4 368.1 354.0Z" fill="#00ff91"/><path d="M360.7 352.5 365.3 356.4 368.1 354.0 363.4 349.7Z" fill="#00ff9f"/><path d="M293.3 260.8 297.9 252.5 300.7 242.6 296.0 246.9Z" fill="#180dfd"/><path d="M386.7 364.7 391.3 366.6 394.1 364.8 389.4 362.8Z" fill="#00ff75"/><path d="M166.5 370.0 171.2 370.6 173.9 368.9 169.2 368.3Z" fill="#00ff62"/><path d="M366.9 324.8 371.6 335.7 374.3 326.1 369.7 310.7Z" fill="#00f5ff"/><path d="M185.9 368.2 190.6 368.7 193.3 366.9 188.7 366.5Z" fill="#00ff69"/><path d="M262.5 338.3 267.1 333.3 269.9 331.7 265.2 336.8Z" fill="#00ffe1"/><path d="M370.0 359.6 374.6 362.2 377.4 360.2 372.7 357.4Z" fill="#00ff87"/><path d="M147.1 371.2 151.7 371.9 154.5 370.2 149.8 369.5Z" fill="#00ff5e"/><path d="M272.6 330.0 277.2 324.0 280.0 321.9 275.3 328.0Z" fill="#00fbff"/><path d="M288.1 311.3 292.8 304.0 295.5 297.4 290.9 305.2Z" fill="#00acff"/><path d="M326.3 217.9 331.0 218.6 333.7 216.4 329.1 215.6Z" fill="#8c4cf5"/><path d="M220.1 361.5 224.8 360.9 227.5 358.9 222.8 359.6Z" fill="#00ff85"/><path d="M345.8 215.9 350.4 216.8 353.1 214.8 348.5 213.9Z" fill="#9250f5"/><path d="M356.0 347.7 360.7 352.5 363.4 349.7 358.8 344.3Z" fill="#00ffb1"/><path d="M227.5 358.9 232.1 357.8 234.9 355.8 230.2 357.0Z" fill="#00ff90"/><path d="M212.7 363.7 217.4 363.4 220.1 361.5 215.5 361.8Z" fill="#00ff7d"/><path d="M452.8 308.8 457.5 333.5 460.2 291.1 455.5 259.3Z" fill="#0093ff"/><path d="M415.4 369.3 420.1 370.6 422.8 368.9 418.1 367.6Z" fill="#00ff66"/><path d="M356.8 331.3 361.5 339.9 364.2 333.8 359.6 322.8Z" fill="#00ffee"/><path d="M285.4 315.8 290.1 309.0 292.8 304.0 288.1 311.3Z" fill="#00bfff"/><path d="M427.4 370.2 432.1 371.5 434.8 369.8 430.2 368.5Z" fill="#00ff63"/><path d="M354.1 337.2 358.8 344.3 361.5 339.9 356.8 331.3Z" fill="#00ffd8"/><path d="M403.4 368.1 408.0 369.6 410.8 367.9 406.1 366.3Z" fill="#00ff6a"/><path d="M374.6 362.2 379.3 364.5 382.0 362.6 377.4 360.2Z" fill="#00ff7f"/><path d="M252.4 345.5 257.0 341.6 259.7 339.9 255.1 343.9Z" fill="#00ffc7"/><path d="M426.0 309.5 430.7 331.6 433.4 298.8 428.7 267.8Z" fill="#00a1ff"/><path d="M205.3 365.6 210.0 365.6 212.7 363.7 208.1 363.8Z" fill="#00ff76"/><path d="M178.5 369.5 183.2 370.0 185.9 368.2 181.3 367.7Z" fill="#00ff66"/><path d="M290.9 305.2 295.5 297.4 298.3 289.2 293.6 297.2Z" fill="#0090ff"/><path d="M319.0 219.7 323.6 220.4 326.3 217.9 321.7 217.2Z" fill="#874af5"/><path d="M159.1 371.0 163.8 371.6 166.5 370.0 161.9 369.3Z" fill="#00ff60"/><path d="M304.2 225.9 308.8 225.7 311.6 222.2 306.9 222.0Z" fill="#7640f7"/><path d="M234.9 355.8 239.5 354.0 242.3 352.0 237.6 353.9Z" fill="#00ff9e"/><path d="M391.3 366.6 396.0 368.3 398.7 366.5 394.1 364.8Z" fill="#00ff70"/><path d="M357.8 215.7 362.4 216.6 365.2 214.7 360.5 213.8Z" fill="#9451f4"/><path d="M311.6 222.2 316.2 222.6 319.0 219.7 314.3 219.2Z" fill="#8046f6"/><path d="M139.7 372.1 144.4 372.8 147.1 371.2 142.4 370.4Z" fill="#00ff5d"/><path d="M338.4 217.2 343.0 218.0 345.8 215.9 341.1 215.1Z" fill="#904ef5"/><path d="M198.0 367.2 202.6 367.4 205.3 365.6 200.7 365.4Z" fill="#00ff70"/><path d="M379.3 364.5 384.0 366.5 386.7 364.7 382.0 362.6Z" fill="#00ff78"/><path d="M294.4 284.7 299.1 275.3 301.8 263.6 297.1 270.9Z" fill="#0037ff"/><path d="M171.2 370.6 175.8 371.2 178.5 369.5 173.9 368.9Z" fill="#00ff64"/><path d="M351.4 341.5 356.0 347.7 358.8 344.3 354.1 337.2Z" fill="#00ffc9"/><path d="M151.7 371.9 156.4 372.6 159.1 371.0 154.5 370.2Z" fill="#00ff5f"/><path d="M282.7 319.3 287.3 312.8 290.1 309.0 285.4 315.8Z" fill="#00ccff"/><path d="M242.3 352.0 246.9 349.2 249.6 347.3 245.0 350.1Z" fill="#00ffaf"/><path d="M350.4 216.8 355.1 217.7 357.8 215.7 353.1 214.8Z" fill="#9250f5"/><path d="M331.0 218.6 335.6 219.4 338.4 217.2 333.7 216.4Z" fill="#8c4df5"/><path d="M190.6 368.7 195.2 369.1 198.0 367.2 193.3 366.9Z" fill="#00ff6c"/><path d="M420.1 370.6 424.7 371.9 427.4 370.2 422.8 368.9Z" fill="#00ff64"/><path d="M408.0 369.6 412.7 371.0 415.4 369.3 410.8 367.9Z" fill="#00ff68"/><path d="M358.0 354.9 362.6 358.5 365.3 356.4 360.7 352.5Z" fill="#00ff9a"/><path d="M432.1 371.5 436.8 372.7 439.5 371.0 434.8 369.8Z" fill="#00ff61"/><path d="M296.0 246.9 300.7 242.6 303.4 235.3 298.7 237.4Z" fill="#3f22fb"/><path d="M301.5 230.8 306.1 229.9 308.8 225.7 304.2 225.9Z" fill="#6a3af7"/><path d="M362.6 358.5 367.3 361.5 370.0 359.6 365.3 356.4Z" fill="#00ff8e"/><path d="M396.0 368.3 400.6 369.8 403.4 368.1 398.7 366.5Z" fill="#00ff6d"/><path d="M132.3 372.9 137.0 373.7 139.7 372.1 135.1 371.3Z" fill="#00ff5c"/><path d="M359.6 322.8 364.2 333.8 366.9 324.8 362.3 310.3Z" fill="#00ebff"/><path d="M353.3 350.5 358.0 354.9 360.7 352.5 356.0 347.7Z" fill="#00ffab"/><path d="M295.2 266.1 299.9 258.1 302.6 247.9 297.9 252.5Z" fill="#0a05fe"/><path d="M293.6 297.2 298.3 289.2 301.0 279.4 296.3 287.0Z" fill="#006bff"/><path d="M384.0 366.5 388.6 368.3 391.3 366.6 386.7 364.7Z" fill="#00ff73"/><path d="M323.6 220.4 328.3 221.1 331.0 218.6 326.3 217.9Z" fill="#884af5"/><path d="M362.4 216.6 367.1 217.6 369.8 215.6 365.2 214.7Z" fill="#9451f4"/><path d="M367.3 361.5 371.9 364.1 374.6 362.2 370.0 359.6Z" fill="#00ff85"/><path d="M163.8 371.6 168.4 372.3 171.2 370.6 166.5 370.0Z" fill="#00ff62"/><path d="M183.2 370.0 187.9 370.5 190.6 368.7 185.9 368.2Z" fill="#00ff68"/><path d="M298.7 237.4 303.4 235.3 306.1 229.9 301.5 230.8Z" fill="#5930f9"/><path d="M269.9 331.7 274.5 325.8 277.2 324.0 272.6 330.0Z" fill="#00fdff"/><path d="M343.0 218.0 347.7 218.9 350.4 216.8 345.8 215.9Z" fill="#904ff5"/><path d="M259.7 339.9 264.4 334.9 267.1 333.3 262.5 338.3Z" fill="#00ffe1"/><path d="M217.4 363.4 222.0 362.9 224.8 360.9 220.1 361.5Z" fill="#00ff83"/><path d="M144.4 372.8 149.0 373.6 151.7 371.9 147.1 371.2Z" fill="#00ff5d"/><path d="M224.8 360.9 229.4 359.9 232.1 357.8 227.5 358.9Z" fill="#00ff8e"/><path d="M308.8 225.7 313.5 225.8 316.2 222.6 311.6 222.2Z" fill="#7942f6"/><path d="M316.2 222.6 320.9 223.1 323.6 220.4 319.0 219.7Z" fill="#8247f6"/><path d="M210.0 365.6 214.7 365.4 217.4 363.4 212.7 363.7Z" fill="#00ff7b"/><path d="M371.9 364.1 376.6 366.3 379.3 364.5 374.6 362.2Z" fill="#00ff7d"/><path d="M412.7 371.0 417.3 372.3 420.1 370.6 415.4 369.3Z" fill="#00ff65"/><path d="M348.7 344.9 353.3 350.5 356.0 347.7 351.4 341.5Z" fill="#00ffc0"/><path d="M202.6 367.4 207.3 367.5 210.0 365.6 205.3 365.6Z" fill="#00ff74"/><path d="M424.7 371.9 429.4 373.1 432.1 371.5 427.4 370.2Z" fill="#00ff62"/><path d="M400.6 369.8 405.3 371.3 408.0 369.6 403.4 368.1Z" fill="#00ff6a"/><path d="M249.6 347.3 254.3 343.5 257.0 341.6 252.4 345.5Z" fill="#00ffc6"/><path d="M232.1 357.8 236.8 356.1 239.5 354.0 234.9 355.8Z" fill="#00ff9c"/><path d="M175.8 371.2 180.5 371.8 183.2 370.0 178.5 369.5Z" fill="#00ff65"/><path d="M355.1 217.7 359.7 218.6 362.4 216.6 357.8 215.7Z" fill="#9250f5"/><path d="M156.4 372.6 161.0 373.4 163.8 371.6 159.1 371.0Z" fill="#00ff60"/><path d="M335.6 219.4 340.3 220.3 343.0 218.0 338.4 217.2Z" fill="#8d4df5"/><path d="M388.6 368.3 393.3 370.0 396.0 368.3 391.3 366.6Z" fill="#00ff6f"/><path d="M280.0 321.9 284.6 315.6 287.3 312.8 282.7 319.3Z" fill="#00d4ff"/><path d="M349.5 328.2 354.1 337.2 356.8 331.3 352.2 320.3Z" fill="#00ffff"/><path d="M137.0 373.7 141.6 374.5 144.4 372.8 139.7 372.1Z" fill="#00ff5c"/><path d="M195.2 369.1 199.9 369.3 202.6 367.4 198.0 367.2Z" fill="#00ff6f"/><path d="M384.4 308.8 389.1 326.8 391.8 306.0 387.2 282.9Z" fill="#00aaff"/><path d="M346.7 333.8 351.4 341.5 354.1 337.2 349.5 328.2Z" fill="#00ffea"/><path d="M377.1 310.2 381.7 326.8 384.4 308.8 379.8 287.4Z" fill="#00b1ff"/><path d="M367.1 217.6 371.8 218.5 374.5 216.6 369.8 215.6Z" fill="#9451f4"/><path d="M376.6 366.3 381.2 368.2 384.0 366.5 379.3 364.5Z" fill="#00ff77"/><path d="M328.3 221.1 332.9 221.8 335.6 219.4 331.0 218.6Z" fill="#894bf5"/><path d="M391.8 306.0 396.5 326.0 399.2 301.7 394.5 277.3Z" fill="#009cff"/><path d="M168.4 372.3 173.1 373.0 175.8 371.2 171.2 370.6Z" fill="#00ff63"/><path d="M239.5 354.0 244.2 351.4 246.9 349.2 242.3 352.0Z" fill="#00ffad"/><path d="M347.7 218.9 352.3 219.8 355.1 217.7 350.4 216.8Z" fill="#904ff5"/><path d="M306.1 229.9 310.8 229.6 313.5 225.8 308.8 225.7Z" fill="#6f3df7"/><path d="M355.2 357.0 359.9 360.5 362.6 358.5 358.0 354.9Z" fill="#00ff98"/><path d="M149.0 373.6 153.7 374.3 156.4 372.6 151.7 371.9Z" fill="#00ff5e"/><path d="M187.9 370.5 192.5 370.9 195.2 369.1 190.6 368.7Z" fill="#00ff6b"/><path d="M350.6 352.8 355.2 357.0 358.0 354.9 353.3 350.5Z" fill="#00ffa6"/><path d="M359.9 360.5 364.5 363.4 367.3 361.5 362.6 358.5Z" fill="#00ff8c"/><path d="M405.3 371.3 410.0 372.6 412.7 371.0 408.0 369.6Z" fill="#00ff67"/><path d="M417.3 372.3 422.0 373.5 424.7 371.9 420.1 370.6Z" fill="#00ff64"/><path d="M433.4 298.8 438.0 327.3 440.8 285.0 436.1 259.3Z" fill="#0076ff"/><path d="M320.9 223.1 325.5 223.7 328.3 221.1 323.6 220.4Z" fill="#8448f6"/><path d="M429.4 373.1 434.0 374.3 436.8 372.7 432.1 371.5Z" fill="#00ff61"/><path d="M393.3 370.0 397.9 371.5 400.6 369.8 396.0 368.3Z" fill="#00ff6c"/><path d="M297.9 252.5 302.6 247.9 305.3 240.2 300.7 242.6Z" fill="#321bfb"/><path d="M313.5 225.8 318.2 226.2 320.9 223.1 316.2 222.6Z" fill="#7c44f6"/><path d="M129.6 374.6 134.2 375.4 137.0 373.7 132.3 372.9Z" fill="#00ff5b"/><path d="M296.3 287.0 301.0 279.4 303.7 269.0 299.1 275.3Z" fill="#003fff"/><path d="M369.7 310.7 374.3 326.1 377.1 310.2 372.4 290.8Z" fill="#00b4ff"/><path d="M352.2 320.3 356.8 331.3 359.6 322.8 354.9 309.3Z" fill="#00deff"/><path d="M297.1 270.9 301.8 263.6 304.5 253.5 299.9 258.1Z" fill="#0004ff"/><path d="M359.7 218.6 364.4 219.6 367.1 217.6 362.4 216.6Z" fill="#9250f5"/><path d="M344.0 338.0 348.7 344.9 351.4 341.5 346.7 333.8Z" fill="#00ffdc"/><path d="M364.5 363.4 369.2 365.8 371.9 364.1 367.3 361.5Z" fill="#00ff83"/><path d="M381.2 368.2 385.9 370.0 388.6 368.3 384.0 366.5Z" fill="#00ff72"/><path d="M340.3 220.3 345.0 221.1 347.7 218.9 343.0 218.0Z" fill="#8d4df5"/><path d="M161.0 373.4 165.7 374.0 168.4 372.3 163.8 371.6Z" fill="#00ff61"/><path d="M214.7 365.4 219.3 365.1 222.0 362.9 217.4 363.4Z" fill="#00ff81"/><path d="M180.5 371.8 185.1 372.3 187.9 370.5 183.2 370.0Z" fill="#00ff67"/><path d="M345.9 347.6 350.6 352.8 353.3 350.5 348.7 344.9Z" fill="#00ffba"/><path d="M222.0 362.9 226.7 362.1 229.4 359.9 224.8 360.9Z" fill="#00ff8b"/><path d="M267.1 333.3 271.8 327.4 274.5 325.8 269.9 331.7Z" fill="#00fdff"/><path d="M303.4 235.3 308.0 234.3 310.8 229.6 306.1 229.9Z" fill="#6235f8"/><path d="M207.3 367.5 211.9 367.5 214.7 365.4 210.0 365.6Z" fill="#00ff79"/><path d="M257.0 341.6 261.7 336.6 264.4 334.9 259.7 339.9Z" fill="#00ffe1"/><path d="M399.2 301.7 403.9 324.3 406.6 295.4 401.9 271.1Z" fill="#0089ff"/><path d="M141.6 374.5 146.3 375.3 149.0 373.6 144.4 372.8Z" fill="#00ff5d"/><path d="M300.7 242.6 305.3 240.2 308.0 234.3 303.4 235.3Z" fill="#4e2bf9"/><path d="M371.8 218.5 376.4 219.5 379.1 217.5 374.5 216.6Z" fill="#9451f4"/><path d="M229.4 359.9 234.1 358.5 236.8 356.1 232.1 357.8Z" fill="#00ff99"/><path d="M332.9 221.8 337.6 222.6 340.3 220.3 335.6 219.4Z" fill="#894bf5"/><path d="M277.2 324.0 281.9 317.8 284.6 315.6 280.0 321.9Z" fill="#00d8ff"/><path d="M199.9 369.3 204.5 369.5 207.3 367.5 202.6 367.4Z" fill="#00ff73"/><path d="M369.2 365.8 373.8 368.0 376.6 366.3 371.9 364.1Z" fill="#00ff7c"/><path d="M246.9 349.2 251.6 345.6 254.3 343.5 249.6 347.3Z" fill="#00ffc4"/><path d="M352.3 219.8 357.0 220.7 359.7 218.6 355.1 217.7Z" fill="#904ff5"/><path d="M410.0 372.6 414.6 373.9 417.3 372.3 412.7 371.0Z" fill="#00ff65"/><path d="M397.9 371.5 402.6 372.9 405.3 371.3 400.6 369.8Z" fill="#00ff69"/><path d="M422.0 373.5 426.6 374.7 429.4 373.1 424.7 371.9Z" fill="#00ff62"/><path d="M173.1 373.0 177.7 373.6 180.5 371.8 175.8 371.2Z" fill="#00ff65"/><path d="M153.7 374.3 158.3 375.1 161.0 373.4 156.4 372.6Z" fill="#00ff5f"/><path d="M385.9 370.0 390.5 371.6 393.3 370.0 388.6 368.3Z" fill="#00ff6f"/><path d="M292.8 304.0 297.5 298.0 300.2 291.4 295.5 297.4Z" fill="#0086ff"/><path d="M362.3 310.3 366.9 324.8 369.7 310.7 365.0 293.2Z" fill="#00b2ff"/><path d="M325.5 223.7 330.2 224.4 332.9 221.8 328.3 221.1Z" fill="#8548f6"/><path d="M192.5 370.9 197.2 371.3 199.9 369.3 195.2 369.1Z" fill="#00ff6d"/><path d="M460.2 291.1 464.8 326.9 467.6 271.7 462.9 251.1Z" fill="#0057ff"/><path d="M310.8 229.6 315.4 229.7 318.2 226.2 313.5 225.8Z" fill="#733ff7"/><path d="M134.2 375.4 138.9 376.2 141.6 374.5 137.0 373.7Z" fill="#00ff5c"/><path d="M290.1 309.0 294.7 303.2 297.5 298.0 292.8 304.0Z" fill="#009bff"/><path d="M364.4 219.6 369.0 220.5 371.8 218.5 367.1 217.6Z" fill="#9250f5"/><path d="M318.2 226.2 322.8 226.6 325.5 223.7 320.9 223.1Z" fill="#7e45f6"/><path d="M236.8 356.1 241.5 353.8 244.2 351.4 239.5 354.0Z" fill="#00ffaa"/><path d="M341.3 341.2 345.9 347.6 348.7 344.9 344.0 338.0Z" fill="#00ffd3"/><path d="M345.0 221.1 349.6 222.0 352.3 219.8 347.7 218.9Z" fill="#8d4df5"/><path d="M373.8 368.0 378.5 369.9 381.2 368.2 376.6 366.3Z" fill="#00ff77"/><path d="M352.5 358.9 357.2 362.3 359.9 360.5 355.2 357.0Z" fill="#00ff96"/><path d="M165.7 374.0 170.4 374.7 173.1 373.0 168.4 372.3Z" fill="#00ff62"/><path d="M295.5 297.4 300.2 291.4 302.9 283.4 298.3 289.2Z" fill="#0069ff"/><path d="M347.8 354.9 352.5 358.9 355.2 357.0 350.6 352.8Z" fill="#00ffa4"/><path d="M185.1 372.3 189.8 372.8 192.5 370.9 187.9 370.5Z" fill="#00ff69"/><path d="M146.3 375.3 150.9 376.0 153.7 374.3 149.0 373.6Z" fill="#00ff5e"/><path d="M357.2 362.3 361.8 365.1 364.5 363.4 359.9 360.5Z" fill="#00ff8b"/><path d="M376.4 219.5 381.1 220.4 383.8 218.5 379.1 217.5Z" fill="#9351f4"/><path d="M342.1 324.5 346.7 333.8 349.5 328.2 344.8 317.4Z" fill="#00ecff"/><path d="M402.6 372.9 407.2 374.3 410.0 372.6 405.3 371.3Z" fill="#00ff67"/><path d="M414.6 373.9 419.3 375.2 422.0 373.5 417.3 372.3Z" fill="#00ff63"/><path d="M299.9 258.1 304.5 253.5 307.2 245.3 302.6 247.9Z" fill="#2514fc"/><path d="M426.6 374.7 431.3 375.9 434.0 374.3 429.4 373.1Z" fill="#00ff61"/><path d="M406.6 295.4 411.2 321.3 414.0 287.1 409.3 264.7Z" fill="#006fff"/><path d="M390.5 371.6 395.2 373.1 397.9 371.5 393.3 370.0Z" fill="#00ff6b"/><path d="M337.6 222.6 342.2 223.5 345.0 221.1 340.3 220.3Z" fill="#8a4bf5"/><path d="M357.0 220.7 361.6 221.7 364.4 219.6 359.7 218.6Z" fill="#904ff5"/><path d="M126.9 376.2 131.5 377.0 134.2 375.4 129.6 374.6Z" fill="#00ff5b"/><path d="M287.3 312.8 292.0 307.1 294.7 303.2 290.1 309.0Z" fill="#00a9ff"/><path d="M343.2 349.9 347.8 354.9 350.6 352.8 345.9 347.6Z" fill="#00ffb6"/><path d="M211.9 367.5 216.6 367.3 219.3 365.1 214.7 365.4Z" fill="#00ff7e"/><path d="M339.3 329.6 344.0 338.0 346.7 333.8 342.1 324.5Z" fill="#00ffff"/><path d="M299.1 275.3 303.7 269.0 306.4 259.2 301.8 263.6Z" fill="#0011ff"/><path d="M219.3 365.1 224.0 364.5 226.7 362.1 222.0 362.9Z" fill="#00ff88"/><path d="M361.8 365.1 366.5 367.5 369.2 365.8 364.5 363.4Z" fill="#00ff82"/><path d="M308.0 234.3 312.7 233.8 315.4 229.7 310.8 229.6Z" fill="#6839f8"/><path d="M378.5 369.9 383.2 371.7 385.9 370.0 381.2 368.2Z" fill="#00ff72"/><path d="M177.7 373.6 182.4 374.1 185.1 372.3 180.5 371.8Z" fill="#00ff66"/><path d="M158.3 375.1 163.0 375.8 165.7 374.0 161.0 373.4Z" fill="#00ff60"/><path d="M204.5 369.5 209.2 369.6 211.9 367.5 207.3 367.5Z" fill="#00ff77"/><path d="M344.8 317.4 349.5 328.2 352.2 320.3 347.5 307.9Z" fill="#00ceff"/><path d="M330.2 224.4 334.8 225.2 337.6 222.6 332.9 221.8Z" fill="#8549f5"/><path d="M254.3 343.5 258.9 338.6 261.7 336.6 257.0 341.6Z" fill="#00ffe0"/><path d="M264.4 334.9 269.1 329.0 271.8 327.4 267.1 333.3Z" fill="#00fdff"/><path d="M226.7 362.1 231.3 360.9 234.1 358.5 229.4 359.9Z" fill="#00ff95"/><path d="M138.9 376.2 143.6 376.9 146.3 375.3 141.6 374.5Z" fill="#00ff5c"/><path d="M369.0 220.5 373.7 221.5 376.4 219.5 371.8 218.5Z" fill="#9250f5"/><path d="M354.9 309.3 359.6 322.8 362.3 310.3 357.6 294.7Z" fill="#00acff"/><path d="M244.2 351.4 248.8 348.0 251.6 345.6 246.9 349.2Z" fill="#00ffc1"/><path d="M349.6 222.0 354.3 222.9 357.0 220.7 352.3 219.8Z" fill="#8d4df5"/><path d="M274.5 325.8 279.2 319.7 281.9 317.8 277.2 324.0Z" fill="#00daff"/><path d="M197.2 371.3 201.8 371.5 204.5 369.5 199.9 369.3Z" fill="#00ff71"/><path d="M322.8 226.6 327.5 227.2 330.2 224.4 325.5 223.7Z" fill="#7f45f6"/><path d="M315.4 229.7 320.1 230.0 322.8 226.6 318.2 226.2Z" fill="#7641f7"/><path d="M298.3 289.2 302.9 283.4 305.6 274.4 301.0 279.4Z" fill="#0046ff"/><path d="M302.6 247.9 307.2 245.3 310.0 238.9 305.3 240.2Z" fill="#4324fa"/><path d="M305.3 240.2 310.0 238.9 312.7 233.8 308.0 234.3Z" fill="#5830f9"/><path d="M366.5 367.5 371.1 369.7 373.8 368.0 369.2 365.8Z" fill="#00ff7b"/><path d="M407.2 374.3 411.9 375.5 414.6 373.9 410.0 372.6Z" fill="#00ff65"/><path d="M170.4 374.7 175.0 375.3 177.7 373.6 173.1 373.0Z" fill="#00ff63"/><path d="M395.2 373.1 399.8 374.5 402.6 372.9 397.9 371.5Z" fill="#00ff69"/><path d="M419.3 375.2 423.9 376.4 426.6 374.7 422.0 373.5Z" fill="#00ff62"/><path d="M381.1 220.4 385.7 221.4 388.4 219.4 383.8 218.5Z" fill="#9350f4"/><path d="M338.5 343.8 343.2 349.9 345.9 347.6 341.3 341.2Z" fill="#00ffcd"/><path d="M150.9 376.0 155.6 376.8 158.3 375.1 153.7 374.3Z" fill="#00ff5f"/><path d="M336.6 333.5 341.3 341.2 344.0 338.0 339.3 329.6Z" fill="#00fff2"/><path d="M383.2 371.7 387.8 373.3 390.5 371.6 385.9 370.0Z" fill="#00ff6e"/><path d="M189.8 372.8 194.4 373.2 197.2 371.3 192.5 370.9Z" fill="#00ff6c"/><path d="M234.1 358.5 238.7 356.5 241.5 353.8 236.8 356.1Z" fill="#00ffa6"/><path d="M361.6 221.7 366.3 222.6 369.0 220.5 364.4 219.6Z" fill="#904ef5"/><path d="M342.2 223.5 346.9 224.4 349.6 222.0 345.0 221.1Z" fill="#8a4bf5"/><path d="M131.5 377.0 136.2 377.8 138.9 376.2 134.2 375.4Z" fill="#00ff5b"/><path d="M440.8 285.0 445.4 320.3 448.1 270.7 443.5 252.5Z" fill="#0046ff"/><path d="M284.6 315.6 289.3 310.1 292.0 307.1 287.3 312.8Z" fill="#00b2ff"/><path d="M371.1 369.7 375.8 371.6 378.5 369.9 373.8 368.0Z" fill="#00ff76"/><path d="M349.8 360.7 354.4 364.0 357.2 362.3 352.5 358.9Z" fill="#00ff95"/><path d="M345.1 356.7 349.8 360.7 352.5 358.9 347.8 354.9Z" fill="#00ffa2"/><path d="M163.0 375.8 167.6 376.5 170.4 374.7 165.7 374.0Z" fill="#00ff61"/><path d="M182.4 374.1 187.0 374.7 189.8 372.8 185.1 372.3Z" fill="#00ff68"/><path d="M334.8 225.2 339.5 226.0 342.2 223.5 337.6 222.6Z" fill="#8649f5"/><path d="M373.7 221.5 378.3 222.5 381.1 220.4 376.4 219.5Z" fill="#914ff5"/><path d="M143.6 376.9 148.2 377.7 150.9 376.0 146.3 375.3Z" fill="#00ff5d"/><path d="M354.4 364.0 359.1 366.8 361.8 365.1 357.2 362.3Z" fill="#00ff8a"/><path d="M354.3 222.9 358.9 223.9 361.6 221.7 357.0 220.7Z" fill="#8d4df5"/><path d="M301.8 263.6 306.4 259.2 309.2 250.9 304.5 253.5Z" fill="#160cfd"/><path d="M312.7 233.8 317.4 233.8 320.1 230.0 315.4 229.7Z" fill="#6c3bf7"/><path d="M399.8 374.5 404.5 375.9 407.2 374.3 402.6 372.9Z" fill="#00ff66"/><path d="M216.6 367.3 221.2 366.9 224.0 364.5 219.3 365.1Z" fill="#00ff85"/><path d="M411.9 375.5 416.5 376.8 419.3 375.2 414.6 373.9Z" fill="#00ff63"/><path d="M340.5 351.9 345.1 356.7 347.8 354.9 343.2 349.9Z" fill="#00ffb4"/><path d="M209.2 369.6 213.8 369.5 216.6 367.3 211.9 367.5Z" fill="#00ff7b"/><path d="M414.0 287.1 418.6 316.7 421.3 277.5 416.7 258.6Z" fill="#004fff"/><path d="M327.5 227.2 332.1 228.0 334.8 225.2 330.2 224.4Z" fill="#8046f6"/><path d="M423.9 376.4 428.6 377.5 431.3 375.9 426.6 374.7Z" fill="#00ff60"/><path d="M387.8 373.3 392.5 374.7 395.2 373.1 390.5 371.6Z" fill="#00ff6b"/><path d="M124.1 377.9 128.8 378.7 131.5 377.0 126.9 376.2Z" fill="#00ff5a"/><path d="M320.1 230.0 324.7 230.4 327.5 227.2 322.8 226.6Z" fill="#7842f6"/><path d="M347.5 307.9 352.2 320.3 354.9 309.3 350.3 295.6Z" fill="#00a4ff"/><path d="M385.7 221.4 390.4 222.4 393.1 220.4 388.4 219.4Z" fill="#9350f5"/><path d="M224.0 364.5 228.6 363.5 231.3 360.9 226.7 362.1Z" fill="#00ff91"/><path d="M201.8 371.5 206.5 371.7 209.2 369.6 204.5 369.5Z" fill="#00ff74"/><path d="M301.0 279.4 305.6 274.4 308.4 265.3 303.7 269.0Z" fill="#001fff"/><path d="M359.1 366.8 363.7 369.2 366.5 367.5 361.8 365.1Z" fill="#00ff82"/><path d="M175.0 375.3 179.7 376.0 182.4 374.1 177.7 373.6Z" fill="#00ff65"/><path d="M241.5 353.8 246.1 350.7 248.8 348.0 244.2 351.4Z" fill="#00ffbd"/><path d="M375.8 371.6 380.4 373.3 383.2 371.7 378.5 369.9Z" fill="#00ff71"/><path d="M251.6 345.6 256.2 340.9 258.9 338.6 254.3 343.5Z" fill="#00ffdd"/><path d="M155.6 376.8 160.2 377.5 163.0 375.8 158.3 375.1Z" fill="#00ff5f"/><path d="M366.3 222.6 371.0 223.6 373.7 221.5 369.0 220.5Z" fill="#8f4ef5"/><path d="M346.9 224.4 351.5 225.3 354.3 222.9 349.6 222.0Z" fill="#8a4bf5"/><path d="M333.9 336.5 338.5 343.8 341.3 341.2 336.6 333.5Z" fill="#00ffeb"/><path d="M261.7 336.6 266.3 330.7 269.1 329.0 264.4 334.9Z" fill="#00feff"/><path d="M136.2 377.8 140.8 378.6 143.6 376.9 138.9 376.2Z" fill="#00ff5c"/><path d="M194.4 373.2 199.1 373.6 201.8 371.5 197.2 371.3Z" fill="#00ff6f"/><path d="M310.0 238.9 314.6 238.4 317.4 233.8 312.7 233.8Z" fill="#5f34f8"/><path d="M334.7 320.4 339.3 329.6 342.1 324.5 337.4 314.3Z" fill="#00d6ff"/><path d="M271.8 327.4 276.4 321.3 279.2 319.7 274.5 325.8Z" fill="#00dbff"/><path d="M231.3 360.9 236.0 359.3 238.7 356.5 234.1 358.5Z" fill="#00ffa1"/><path d="M335.8 346.0 340.5 351.9 343.2 349.9 338.5 343.8Z" fill="#00ffca"/><path d="M304.5 253.5 309.2 250.9 311.9 244.0 307.2 245.3Z" fill="#361dfb"/><path d="M337.4 314.3 342.1 324.5 344.8 317.4 340.1 306.3Z" fill="#00bdff"/><path d="M363.7 369.2 368.4 371.3 371.1 369.7 366.5 367.5Z" fill="#00ff7b"/><path d="M378.3 222.5 383.0 223.5 385.7 221.4 381.1 220.4Z" fill="#914ff5"/><path d="M339.5 226.0 344.2 226.9 346.9 224.4 342.2 223.5Z" fill="#8649f5"/><path d="M167.6 376.5 172.3 377.1 175.0 375.3 170.4 374.7Z" fill="#00ff62"/><path d="M404.5 375.9 409.2 377.1 411.9 375.5 407.2 374.3Z" fill="#00ff64"/><path d="M297.5 298.0 302.1 293.9 304.8 287.5 300.2 291.4Z" fill="#0069ff"/><path d="M281.9 317.8 286.5 312.4 289.3 310.1 284.6 315.6Z" fill="#00b7ff"/><path d="M392.5 374.7 397.1 376.1 399.8 374.5 395.2 373.1Z" fill="#00ff68"/><path d="M416.5 376.8 421.2 378.0 423.9 376.4 419.3 375.2Z" fill="#00ff61"/><path d="M358.9 223.9 363.6 224.9 366.3 222.6 361.6 221.7Z" fill="#8d4df5"/><path d="M307.2 245.3 311.9 244.0 314.6 238.4 310.0 238.9Z" fill="#4d2af9"/><path d="M148.2 377.7 152.9 378.5 155.6 376.8 150.9 376.0Z" fill="#00ff5e"/><path d="M187.0 374.7 191.7 375.1 194.4 373.2 189.8 372.8Z" fill="#00ff6a"/><path d="M294.7 303.2 299.4 299.1 302.1 293.9 297.5 298.0Z" fill="#007eff"/><path d="M380.4 373.3 385.1 374.9 387.8 373.3 383.2 371.7Z" fill="#00ff6e"/><path d="M332.0 324.9 336.6 333.5 339.3 329.6 334.7 320.4Z" fill="#00e6ff"/><path d="M332.1 228.0 336.8 228.8 339.5 226.0 334.8 225.2Z" fill="#8146f6"/><path d="M390.4 222.4 395.0 223.5 397.8 221.4 393.1 220.4Z" fill="#9250f5"/><path d="M128.8 378.7 133.4 379.5 136.2 377.8 131.5 377.0Z" fill="#00ff5b"/><path d="M317.4 233.8 322.0 234.1 324.7 230.4 320.1 230.0Z" fill="#6f3df7"/><path d="M300.2 291.4 304.8 287.5 307.6 279.9 302.9 283.4Z" fill="#004dff"/><path d="M324.7 230.4 329.4 231.1 332.1 228.0 327.5 227.2Z" fill="#7a42f6"/><path d="M371.0 223.6 375.6 224.7 378.3 222.5 373.7 221.5Z" fill="#8f4ef5"/><path d="M368.4 371.3 373.0 373.2 375.8 371.6 371.1 369.7Z" fill="#00ff76"/><path d="M347.0 362.4 351.7 365.6 354.4 364.0 349.8 360.7Z" fill="#00ff94"/><path d="M342.4 358.4 347.0 362.4 349.8 360.7 345.1 356.7Z" fill="#00ffa1"/><path d="M351.5 225.3 356.2 226.3 358.9 223.9 354.3 222.9Z" fill="#8a4bf5"/><path d="M160.2 377.5 164.9 378.2 167.6 376.5 163.0 375.8Z" fill="#00ff60"/><path d="M179.7 376.0 184.3 376.5 187.0 374.7 182.4 374.1Z" fill="#00ff67"/><path d="M303.7 269.0 308.4 265.3 311.1 256.8 306.4 259.2Z" fill="#0704fe"/><path d="M213.8 369.5 218.5 369.3 221.2 366.9 216.6 367.3Z" fill="#00ff81"/><path d="M206.5 371.7 211.1 371.8 213.8 369.5 209.2 369.6Z" fill="#00ff78"/><path d="M140.8 378.6 145.5 379.4 148.2 377.7 143.6 376.9Z" fill="#00ff5d"/><path d="M221.2 366.9 225.9 366.2 228.6 363.5 224.0 364.5Z" fill="#00ff8c"/><path d="M351.7 365.6 356.4 368.4 359.1 366.8 354.4 364.0Z" fill="#00ff8a"/><path d="M238.7 356.5 243.4 353.8 246.1 350.7 241.5 353.8Z" fill="#00ffb7"/><path d="M292.0 307.1 296.7 303.1 299.4 299.1 294.7 303.2Z" fill="#008dff"/><path d="M340.1 306.3 344.8 317.4 347.5 307.9 342.9 296.1Z" fill="#009aff"/><path d="M337.7 353.7 342.4 358.4 345.1 356.7 340.5 351.9Z" fill="#00ffb2"/><path d="M397.1 376.1 401.8 377.5 404.5 375.9 399.8 374.5Z" fill="#00ff66"/><path d="M409.2 377.1 413.8 378.4 416.5 376.8 411.9 375.5Z" fill="#00ff63"/><path d="M248.8 348.0 253.5 343.6 256.2 340.9 251.6 345.6Z" fill="#00ffd9"/><path d="M372.4 290.8 377.1 310.2 379.8 287.4 375.1 271.3Z" fill="#005bff"/><path d="M383.0 223.5 387.6 224.6 390.4 222.4 385.7 221.4Z" fill="#904ff5"/><path d="M365.0 293.2 369.7 310.7 372.4 290.8 367.7 275.3Z" fill="#0065ff"/><path d="M199.1 373.6 203.7 373.8 206.5 371.7 201.8 371.5Z" fill="#00ff72"/><path d="M421.2 378.0 425.8 379.1 428.6 377.5 423.9 376.4Z" fill="#00ff60"/><path d="M385.1 374.9 389.7 376.3 392.5 374.7 387.8 373.3Z" fill="#00ff6b"/><path d="M331.2 338.9 335.8 346.0 338.5 343.8 333.9 336.5Z" fill="#00ffe6"/><path d="M344.2 226.9 348.8 227.8 351.5 225.3 346.9 224.4Z" fill="#8649f5"/><path d="M121.4 379.5 126.1 380.3 128.8 378.7 124.1 377.9Z" fill="#00ff5a"/><path d="M363.6 224.9 368.2 225.9 371.0 223.6 366.3 222.6Z" fill="#8c4df5"/><path d="M172.3 377.1 176.9 377.8 179.7 376.0 175.0 375.3Z" fill="#00ff64"/><path d="M302.9 283.4 307.6 279.9 310.3 271.6 305.6 274.4Z" fill="#002dff"/><path d="M356.4 368.4 361.0 370.8 363.7 369.2 359.1 366.8Z" fill="#00ff81"/><path d="M314.6 238.4 319.3 238.3 322.0 234.1 317.4 233.8Z" fill="#6436f8"/><path d="M152.9 378.5 157.5 379.2 160.2 377.5 155.6 376.8Z" fill="#00ff5f"/><path d="M228.6 363.5 233.3 362.3 236.0 359.3 231.3 360.9Z" fill="#00ff9c"/><path d="M373.0 373.2 377.7 374.9 380.4 373.3 375.8 371.6Z" fill="#00ff71"/><path d="M421.3 277.5 426.0 309.5 428.7 267.8 424.1 253.2Z" fill="#002bff"/><path d="M379.8 287.4 384.4 308.8 387.2 282.9 382.5 266.9Z" fill="#004eff"/><path d="M329.2 328.4 333.9 336.5 336.6 333.5 332.0 324.9Z" fill="#00f1ff"/><path d="M258.9 338.6 263.6 332.8 266.3 330.7 261.7 336.6Z" fill="#00ffff"/><path d="M357.6 294.7 362.3 310.3 365.0 293.2 360.4 278.8Z" fill="#006aff"/><path d="M395.0 223.5 399.7 224.5 402.4 222.4 397.8 221.4Z" fill="#9250f5"/><path d="M191.7 375.1 196.4 375.6 199.1 373.6 194.4 373.2Z" fill="#00ff6d"/><path d="M336.8 228.8 341.4 229.6 344.2 226.9 339.5 226.0Z" fill="#8146f6"/><path d="M133.4 379.5 138.1 380.3 140.8 378.6 136.2 377.8Z" fill="#00ff5b"/><path d="M306.4 259.2 311.1 256.8 313.8 249.5 309.2 250.9Z" fill="#2715fc"/><path d="M333.1 347.8 337.7 353.7 340.5 351.9 335.8 346.0Z" fill="#00ffc8"/><path d="M375.6 224.7 380.3 225.7 383.0 223.5 378.3 222.5Z" fill="#8e4ef5"/><path d="M322.0 234.1 326.7 234.6 329.4 231.1 324.7 230.4Z" fill="#713ef7"/><path d="M329.4 231.1 334.0 231.8 336.8 228.8 332.1 228.0Z" fill="#7a43f6"/><path d="M269.1 329.0 273.7 322.9 276.4 321.3 271.8 327.4Z" fill="#00dbff"/><path d="M356.2 226.3 360.8 227.3 363.6 224.9 358.9 223.9Z" fill="#894bf5"/><path d="M279.2 319.7 283.8 314.2 286.5 312.4 281.9 317.8Z" fill="#00baff"/><path d="M164.9 378.2 169.6 378.9 172.3 377.1 167.6 376.5Z" fill="#00ff61"/><path d="M361.0 370.8 365.7 372.9 368.4 371.3 363.7 369.2Z" fill="#00ff7b"/><path d="M448.1 270.7 452.8 308.8 455.5 259.3 450.9 247.3Z" fill="#0015ff"/><path d="M311.9 244.0 316.6 243.4 319.3 238.3 314.6 238.4Z" fill="#552ef9"/><path d="M184.3 376.5 189.0 377.1 191.7 375.1 187.0 374.7Z" fill="#00ff68"/><path d="M401.8 377.5 406.4 378.7 409.2 377.1 404.5 375.9Z" fill="#00ff64"/><path d="M389.7 376.3 394.4 377.7 397.1 376.1 392.5 374.7Z" fill="#00ff68"/><path d="M309.2 250.9 313.8 249.5 316.6 243.4 311.9 244.0Z" fill="#4123fa"/><path d="M413.8 378.4 418.5 379.6 421.2 378.0 416.5 376.8Z" fill="#00ff61"/><path d="M145.5 379.4 150.1 380.2 152.9 378.5 148.2 377.7Z" fill="#00ff5d"/><path d="M289.3 310.1 293.9 306.1 296.7 303.1 292.0 307.1Z" fill="#0096ff"/><path d="M350.3 295.6 354.9 309.3 357.6 294.7 353.0 281.8Z" fill="#006cff"/><path d="M387.2 282.9 391.8 306.0 394.5 277.3 389.9 262.3Z" fill="#003cff"/><path d="M387.6 224.6 392.3 225.6 395.0 223.5 390.4 222.4Z" fill="#904ff5"/><path d="M377.7 374.9 382.4 376.5 385.1 374.9 380.4 373.3Z" fill="#00ff6e"/><path d="M348.8 227.8 353.5 228.8 356.2 226.3 351.5 225.3Z" fill="#8649f5"/><path d="M330.0 311.3 334.7 320.4 337.4 314.3 332.8 304.7Z" fill="#00acff"/><path d="M236.0 359.3 240.6 357.1 243.4 353.8 238.7 356.5Z" fill="#00ffb0"/><path d="M368.2 225.9 372.9 227.0 375.6 224.7 371.0 223.6Z" fill="#8c4cf5"/><path d="M305.6 274.4 310.3 271.6 313.0 263.3 308.4 265.3Z" fill="#000aff"/><path d="M126.1 380.3 130.7 381.2 133.4 379.5 128.8 378.7Z" fill="#00ff5a"/><path d="M211.1 371.8 215.8 371.8 218.5 369.3 213.8 369.5Z" fill="#00ff7d"/><path d="M218.5 369.3 223.2 368.9 225.9 366.2 221.2 366.9Z" fill="#00ff87"/><path d="M246.1 350.7 250.8 346.9 253.5 343.6 248.8 348.0Z" fill="#00ffd3"/><path d="M176.9 377.8 181.6 378.4 184.3 376.5 179.7 376.0Z" fill="#00ff65"/><path d="M203.7 373.8 208.4 374.1 211.1 371.8 206.5 371.7Z" fill="#00ff75"/><path d="M399.7 224.5 404.3 225.6 407.1 223.5 402.4 222.4Z" fill="#914ff5"/><path d="M157.5 379.2 162.2 380.0 164.9 378.2 160.2 377.5Z" fill="#00ff5f"/><path d="M365.7 372.9 370.3 374.7 373.0 373.2 368.4 371.3Z" fill="#00ff75"/><path d="M339.7 360.0 344.3 364.0 347.0 362.4 342.4 358.4Z" fill="#00ffa1"/><path d="M327.3 316.3 332.0 324.9 334.7 320.4 330.0 311.3Z" fill="#00bfff"/><path d="M344.3 364.0 349.0 367.2 351.7 365.6 347.0 362.4Z" fill="#00ff94"/><path d="M341.4 229.6 346.1 230.6 348.8 227.8 344.2 226.9Z" fill="#8146f6"/><path d="M332.8 304.7 337.4 314.3 340.1 306.3 335.5 296.4Z" fill="#0090ff"/><path d="M319.3 238.3 323.9 238.6 326.7 234.6 322.0 234.1Z" fill="#6738f8"/><path d="M380.3 225.7 384.9 226.8 387.6 224.6 383.0 223.5Z" fill="#8e4df5"/><path d="M138.1 380.3 142.8 381.1 145.5 379.4 140.8 378.6Z" fill="#00ff5c"/><path d="M225.9 366.2 230.5 365.3 233.3 362.3 228.6 363.5Z" fill="#00ff95"/><path d="M302.1 293.9 306.8 291.9 309.5 285.6 304.8 287.5Z" fill="#0056ff"/><path d="M326.5 331.0 331.2 338.9 333.9 336.5 329.2 328.4Z" fill="#00f7ff"/><path d="M349.0 367.2 353.6 370.0 356.4 368.4 351.7 365.6Z" fill="#00ff89"/><path d="M196.4 375.6 201.0 376.0 203.7 373.8 199.1 373.6Z" fill="#00ff6f"/><path d="M360.8 227.3 365.5 228.3 368.2 225.9 363.6 224.9Z" fill="#894bf5"/><path d="M328.4 340.9 333.1 347.8 335.8 346.0 331.2 338.9Z" fill="#00ffe3"/><path d="M335.0 355.3 339.7 360.0 342.4 358.4 337.7 353.7Z" fill="#00ffb2"/><path d="M334.0 231.8 338.7 232.7 341.4 229.6 336.8 228.8Z" fill="#7b43f6"/><path d="M342.9 296.1 347.5 307.9 350.3 295.6 345.6 284.4Z" fill="#006cff"/><path d="M394.4 377.7 399.0 379.1 401.8 377.5 397.1 376.1Z" fill="#00ff66"/><path d="M406.4 378.7 411.1 380.0 413.8 378.4 409.2 377.1Z" fill="#00ff62"/><path d="M326.7 234.6 331.3 235.2 334.0 231.8 329.4 231.1Z" fill="#733ff7"/><path d="M299.4 299.1 304.0 297.0 306.8 291.9 302.1 293.9Z" fill="#006bff"/><path d="M418.5 379.6 423.1 380.7 425.8 379.1 421.2 378.0Z" fill="#00ff60"/><path d="M382.4 376.5 387.0 377.9 389.7 376.3 385.1 374.9Z" fill="#00ff6b"/><path d="M118.7 381.1 123.3 382.0 126.1 380.3 121.4 379.5Z" fill="#00ff5a"/><path d="M304.8 287.5 309.5 285.6 312.2 278.3 307.6 279.9Z" fill="#003cff"/><path d="M169.6 378.9 174.2 379.6 176.9 377.8 172.3 377.1Z" fill="#00ff63"/><path d="M256.2 340.9 260.9 335.4 263.6 332.8 258.9 338.6Z" fill="#00fffb"/><path d="M394.5 277.3 399.2 301.7 401.9 271.1 397.3 257.8Z" fill="#0025ff"/><path d="M308.4 265.3 313.0 263.3 315.8 255.7 311.1 256.8Z" fill="#160cfd"/><path d="M392.3 225.6 397.0 226.7 399.7 224.5 395.0 223.5Z" fill="#8f4ef5"/><path d="M150.1 380.2 154.8 381.0 157.5 379.2 152.9 378.5Z" fill="#00ff5e"/><path d="M353.6 370.0 358.3 372.3 361.0 370.8 356.4 368.4Z" fill="#00ff81"/><path d="M189.0 377.1 193.6 377.6 196.4 375.6 191.7 375.1Z" fill="#00ff6b"/><path d="M370.3 374.7 375.0 376.5 377.7 374.9 373.0 373.2Z" fill="#00ff71"/><path d="M353.5 228.8 358.1 229.9 360.8 227.3 356.2 226.3Z" fill="#8549f5"/><path d="M372.9 227.0 377.5 228.1 380.3 225.7 375.6 224.7Z" fill="#8b4cf5"/><path d="M324.6 320.0 329.2 328.4 332.0 324.9 327.3 316.3Z" fill="#00ccff"/><path d="M316.6 243.4 321.2 243.4 323.9 238.6 319.3 238.3Z" fill="#5931f9"/><path d="M130.7 381.2 135.4 382.0 138.1 380.3 133.4 379.5Z" fill="#00ff5b"/><path d="M286.5 312.4 291.2 308.5 293.9 306.1 289.3 310.1Z" fill="#009cff"/><path d="M330.4 349.5 335.0 355.3 337.7 353.7 333.1 347.8Z" fill="#00ffc7"/><path d="M233.3 362.3 237.9 360.6 240.6 357.1 236.0 359.3Z" fill="#00ffa8"/><path d="M404.3 225.6 409.0 226.8 411.7 224.6 407.1 223.5Z" fill="#904ff5"/><path d="M266.3 330.7 271.0 324.7 273.7 322.9 269.1 329.0Z" fill="#00dcff"/><path d="M296.7 303.1 301.3 301.0 304.0 297.0 299.4 299.1Z" fill="#0079ff"/><path d="M311.1 256.8 315.8 255.7 318.5 249.0 313.8 249.5Z" fill="#311bfb"/><path d="M276.4 321.3 281.1 315.8 283.8 314.2 279.2 319.7Z" fill="#00baff"/><path d="M307.6 279.9 312.2 278.3 314.9 270.4 310.3 271.6Z" fill="#001dff"/><path d="M346.1 230.6 350.7 231.6 353.5 228.8 348.8 227.8Z" fill="#8146f6"/><path d="M162.2 380.0 166.8 380.7 169.6 378.9 164.9 378.2Z" fill="#00ff60"/><path d="M181.6 378.4 186.2 379.0 189.0 377.1 184.3 376.5Z" fill="#00ff67"/><path d="M243.4 353.8 248.0 350.5 250.8 346.9 246.1 350.7Z" fill="#00ffcb"/><path d="M428.7 267.8 433.4 298.8 436.1 259.3 431.5 248.6Z" fill="#0005ff"/><path d="M313.8 249.5 318.5 249.0 321.2 243.4 316.6 243.4Z" fill="#4827fa"/><path d="M384.9 226.8 389.6 227.9 392.3 225.6 387.6 224.6Z" fill="#8d4df5"/><path d="M358.3 372.3 362.9 374.4 365.7 372.9 361.0 370.8Z" fill="#00ff7b"/><path d="M335.5 296.4 340.1 306.3 342.9 296.1 338.2 286.7Z" fill="#006bff"/><path d="M365.5 228.3 370.2 229.5 372.9 227.0 368.2 225.9Z" fill="#884af5"/><path d="M399.0 379.1 403.7 380.3 406.4 378.7 401.8 377.5Z" fill="#00ff64"/><path d="M142.8 381.1 147.4 381.9 150.1 380.2 145.5 379.4Z" fill="#00ff5d"/><path d="M215.8 371.8 220.4 371.6 223.2 368.9 218.5 369.3Z" fill="#00ff83"/><path d="M387.0 377.9 391.7 379.3 394.4 377.7 389.7 376.3Z" fill="#00ff68"/><path d="M411.1 380.0 415.7 381.1 418.5 379.6 413.8 378.4Z" fill="#00ff61"/><path d="M208.4 374.1 213.0 374.2 215.8 371.8 211.1 371.8Z" fill="#00ff79"/><path d="M323.9 238.6 328.6 239.2 331.3 235.2 326.7 234.6Z" fill="#6939f8"/><path d="M338.7 232.7 343.4 233.6 346.1 230.6 341.4 229.6Z" fill="#7b43f6"/><path d="M375.0 376.5 379.6 378.0 382.4 376.5 377.7 374.9Z" fill="#00ff6d"/><path d="M331.3 235.2 336.0 236.1 338.7 232.7 334.0 231.8Z" fill="#733ff7"/><path d="M223.2 368.9 227.8 368.3 230.5 365.3 225.9 366.2Z" fill="#00ff8f"/><path d="M201.0 376.0 205.7 376.3 208.4 374.1 203.7 373.8Z" fill="#00ff72"/><path d="M397.0 226.7 401.6 227.9 404.3 225.6 399.7 224.5Z" fill="#8e4ef5"/><path d="M123.3 382.0 128.0 382.8 130.7 381.2 126.1 380.3Z" fill="#00ff5a"/><path d="M174.2 379.6 178.9 380.3 181.6 378.4 176.9 377.8Z" fill="#00ff64"/><path d="M325.4 303.5 330.0 311.3 332.8 304.7 328.1 296.8Z" fill="#0086ff"/><path d="M358.1 229.9 362.8 231.0 365.5 228.3 360.8 227.3Z" fill="#8548f6"/><path d="M377.5 228.1 382.2 229.2 384.9 226.8 380.3 225.7Z" fill="#8a4cf5"/><path d="M154.8 381.0 159.4 381.7 162.2 380.0 157.5 379.2Z" fill="#00ff5f"/><path d="M323.8 333.1 328.4 340.9 331.2 338.9 326.5 331.0Z" fill="#00fbff"/><path d="M310.3 271.6 314.9 270.4 317.7 262.6 313.0 263.3Z" fill="#0301ff"/><path d="M362.9 374.4 367.6 376.3 370.3 374.7 365.7 372.9Z" fill="#00ff75"/><path d="M336.9 361.6 341.6 365.5 344.3 364.0 339.7 360.0Z" fill="#00ffa1"/><path d="M401.9 271.1 406.6 295.4 409.3 264.7 404.7 253.5Z" fill="#000cff"/><path d="M341.6 365.5 346.2 368.8 349.0 367.2 344.3 364.0Z" fill="#00ff94"/><path d="M322.7 308.6 327.3 316.3 330.0 311.3 325.4 303.5Z" fill="#009bff"/><path d="M193.6 377.6 198.3 378.1 201.0 376.0 196.4 375.6Z" fill="#00ff6d"/><path d="M253.5 343.6 258.1 338.5 260.9 335.4 256.2 340.9Z" fill="#00fff6"/><path d="M409.0 226.8 413.6 227.9 416.4 225.7 411.7 224.6Z" fill="#8f4ef5"/><path d="M135.4 382.0 140.0 382.8 142.8 381.1 138.1 380.3Z" fill="#00ff5b"/><path d="M321.9 322.9 326.5 331.0 329.2 328.4 324.6 320.0Z" fill="#00d4ff"/><path d="M306.8 291.9 311.4 291.9 314.1 285.6 309.5 285.6Z" fill="#004dff"/><path d="M325.7 342.6 330.4 349.5 333.1 347.8 328.4 340.9Z" fill="#00ffe2"/><path d="M346.2 368.8 350.9 371.5 353.6 370.0 349.0 367.2Z" fill="#00ff89"/><path d="M332.3 356.9 336.9 361.6 339.7 360.0 335.0 355.3Z" fill="#00ffb1"/><path d="M350.7 231.6 355.4 232.7 358.1 229.9 353.5 228.8Z" fill="#8046f6"/><path d="M321.2 243.4 325.9 243.8 328.6 239.2 323.9 238.6Z" fill="#5c32f8"/><path d="M230.5 365.3 235.2 364.1 237.9 360.6 233.3 362.3Z" fill="#00ffa0"/><path d="M328.1 296.8 332.8 304.7 335.5 296.4 330.8 288.8Z" fill="#0069ff"/><path d="M293.9 306.1 298.6 304.1 301.3 301.0 296.7 303.1Z" fill="#0083ff"/><path d="M389.6 227.9 394.2 229.1 397.0 226.7 392.3 225.6Z" fill="#8c4cf5"/><path d="M391.7 379.3 396.3 380.6 399.0 379.1 394.4 377.7Z" fill="#00ff66"/><path d="M403.7 380.3 408.3 381.5 411.1 380.0 406.4 378.7Z" fill="#00ff62"/><path d="M240.6 357.1 245.3 354.4 248.0 350.5 243.4 353.8Z" fill="#00ffc2"/><path d="M309.5 285.6 314.1 285.6 316.9 278.4 312.2 278.3Z" fill="#0033ff"/><path d="M370.2 229.5 374.8 230.6 377.5 228.1 372.9 227.0Z" fill="#874af5"/><path d="M304.0 297.0 308.7 297.0 311.4 291.9 306.8 291.9Z" fill="#0061ff"/><path d="M166.8 380.7 171.5 381.4 174.2 379.6 169.6 378.9Z" fill="#00ff61"/><path d="M116.0 382.8 120.6 383.6 123.3 382.0 118.7 381.1Z" fill="#00ff59"/><path d="M415.7 381.1 420.4 382.3 423.1 380.7 418.5 379.6Z" fill="#00ff60"/><path d="M379.6 378.0 384.3 379.5 387.0 377.9 382.4 376.5Z" fill="#00ff6a"/><path d="M186.2 379.0 190.9 379.6 193.6 377.6 189.0 377.1Z" fill="#00ff69"/><path d="M455.5 259.3 460.2 291.1 462.9 251.1 458.3 243.2Z" fill="#190efd"/><path d="M313.0 263.3 317.7 262.6 320.4 255.5 315.8 255.7Z" fill="#1f11fd"/><path d="M147.4 381.9 152.1 382.7 154.8 381.0 150.1 380.2Z" fill="#00ff5d"/><path d="M343.4 233.6 348.0 234.7 350.7 231.6 346.1 230.6Z" fill="#7a43f6"/><path d="M350.9 371.5 355.6 373.9 358.3 372.3 353.6 370.0Z" fill="#00ff81"/><path d="M328.6 239.2 333.2 240.0 336.0 236.1 331.3 235.2Z" fill="#6a3af7"/><path d="M319.9 312.6 324.6 320.0 327.3 316.3 322.7 308.6Z" fill="#00a9ff"/><path d="M401.6 227.9 406.3 229.1 409.0 226.8 404.3 225.6Z" fill="#8d4df5"/><path d="M367.6 376.3 372.2 378.0 375.0 376.5 370.3 374.7Z" fill="#00ff71"/><path d="M336.0 236.1 340.6 237.1 343.4 233.6 338.7 232.7Z" fill="#733ff7"/><path d="M283.8 314.2 288.5 310.3 291.2 308.5 286.5 312.4Z" fill="#009eff"/><path d="M318.5 249.0 323.1 249.2 325.9 243.8 321.2 243.4Z" fill="#4c29fa"/><path d="M315.8 255.7 320.4 255.5 323.1 249.2 318.5 249.0Z" fill="#371efb"/><path d="M128.0 382.8 132.6 383.6 135.4 382.0 130.7 381.2Z" fill="#00ff5a"/><path d="M382.2 229.2 386.8 230.5 389.6 227.9 384.9 226.8Z" fill="#894bf5"/><path d="M263.6 332.8 268.2 326.9 271.0 324.7 266.3 330.7Z" fill="#00deff"/><path d="M362.8 231.0 367.4 232.2 370.2 229.5 365.5 228.3Z" fill="#8448f6"/><path d="M353.0 281.8 357.6 294.7 360.4 278.8 355.7 269.1Z" fill="#002eff"/><path d="M312.2 278.3 316.9 278.4 319.6 270.7 314.9 270.4Z" fill="#0016ff"/><path d="M345.6 284.4 350.3 295.6 353.0 281.8 348.3 272.7Z" fill="#0037ff"/><path d="M327.6 351.1 332.3 356.9 335.0 355.3 330.4 349.5Z" fill="#00ffc7"/><path d="M213.0 374.2 217.7 374.2 220.4 371.6 215.8 371.8Z" fill="#00ff7e"/><path d="M360.4 278.8 365.0 293.2 367.7 275.3 363.1 265.3Z" fill="#0023ff"/><path d="M178.9 380.3 183.5 380.9 186.2 379.0 181.6 378.4Z" fill="#00ff65"/><path d="M220.4 371.6 225.1 371.3 227.8 368.3 223.2 368.9Z" fill="#00ff89"/><path d="M159.4 381.7 164.1 382.5 166.8 380.7 162.2 380.0Z" fill="#00ff5f"/><path d="M205.7 376.3 210.3 376.6 213.0 374.2 208.4 374.1Z" fill="#00ff76"/><path d="M413.6 227.9 418.3 229.2 421.0 226.8 416.4 225.7Z" fill="#8e4ef5"/><path d="M338.2 286.7 342.9 296.1 345.6 284.4 340.9 276.3Z" fill="#003fff"/><path d="M301.3 301.0 306.0 300.9 308.7 297.0 304.0 297.0Z" fill="#006fff"/><path d="M273.7 322.9 278.4 317.4 281.1 315.8 276.4 321.3Z" fill="#00baff"/><path d="M320.7 297.6 325.4 303.5 328.1 296.8 323.5 291.1Z" fill="#0069ff"/><path d="M355.6 373.9 360.2 376.0 362.9 374.4 358.3 372.3Z" fill="#00ff7b"/><path d="M140.0 382.8 144.7 383.6 147.4 381.9 142.8 381.1Z" fill="#00ff5c"/><path d="M311.4 291.9 316.1 293.8 318.8 287.5 314.1 285.6Z" fill="#004dff"/><path d="M355.4 232.7 360.0 233.9 362.8 231.0 358.1 229.9Z" fill="#7f45f6"/><path d="M318.0 302.8 322.7 308.6 325.4 303.5 320.7 297.6Z" fill="#007eff"/><path d="M394.2 229.1 398.9 230.4 401.6 227.9 397.0 226.7Z" fill="#8b4cf5"/><path d="M250.8 346.9 255.4 342.3 258.1 338.5 253.5 343.6Z" fill="#00ffee"/><path d="M396.3 380.6 401.0 381.9 403.7 380.3 399.0 379.1Z" fill="#00ff64"/><path d="M330.8 288.8 335.5 296.4 338.2 286.7 333.6 279.8Z" fill="#0046ff"/><path d="M367.7 275.3 372.4 290.8 375.1 271.3 370.5 261.5Z" fill="#0015ff"/><path d="M384.3 379.5 388.9 380.9 391.7 379.3 387.0 377.9Z" fill="#00ff68"/><path d="M198.3 378.1 202.9 378.5 205.7 376.3 201.0 376.0Z" fill="#00ff6f"/><path d="M408.3 381.5 413.0 382.7 415.7 381.1 411.1 380.0Z" fill="#00ff61"/><path d="M374.8 230.6 379.5 231.9 382.2 229.2 377.5 228.1Z" fill="#8649f5"/><path d="M237.9 360.6 242.6 358.5 245.3 354.4 240.6 357.1Z" fill="#00ffb7"/><path d="M409.3 264.7 414.0 287.1 416.7 258.6 412.0 249.6Z" fill="#0e08fe"/><path d="M314.1 285.6 318.8 287.5 321.5 280.1 316.9 278.4Z" fill="#0033ff"/><path d="M325.9 243.8 330.5 244.5 333.2 240.0 328.6 239.2Z" fill="#5d33f8"/><path d="M227.8 368.3 232.5 367.6 235.2 364.1 230.5 365.3Z" fill="#00ff98"/><path d="M308.7 297.0 313.3 298.9 316.1 293.8 311.4 291.9Z" fill="#0061ff"/><path d="M372.2 378.0 376.9 379.6 379.6 378.0 375.0 376.5Z" fill="#00ff6d"/><path d="M323.5 291.1 328.1 296.8 330.8 288.8 326.2 283.5Z" fill="#004dff"/><path d="M314.9 270.4 319.6 270.7 322.3 263.1 317.7 262.6Z" fill="#0804fe"/><path d="M436.1 259.3 440.8 285.0 443.5 252.5 438.8 244.8Z" fill="#1e10fd"/><path d="M120.6 383.6 125.3 384.5 128.0 382.8 123.3 382.0Z" fill="#00ff59"/><path d="M348.0 234.7 352.7 235.9 355.4 232.7 350.7 231.6Z" fill="#7a42f6"/><path d="M171.5 381.4 176.1 382.1 178.9 380.3 174.2 379.6Z" fill="#00ff62"/><path d="M316.1 293.8 320.7 297.6 323.5 291.1 318.8 287.5Z" fill="#0056ff"/><path d="M406.3 229.1 410.9 230.4 413.6 227.9 409.0 226.8Z" fill="#8c4cf5"/><path d="M319.1 325.1 323.8 333.1 326.5 331.0 321.9 322.9Z" fill="#00d8ff"/><path d="M321.0 334.9 325.7 342.6 328.4 340.9 323.8 333.1Z" fill="#00fdff"/><path d="M152.1 382.7 156.7 383.5 159.4 381.7 154.8 381.0Z" fill="#00ff5e"/><path d="M291.2 308.5 295.9 306.4 298.6 304.1 293.9 306.1Z" fill="#0088ff"/><path d="M190.9 379.6 195.6 380.1 198.3 378.1 193.6 377.6Z" fill="#00ff6a"/><path d="M333.2 240.0 337.9 241.0 340.6 237.1 336.0 236.1Z" fill="#6a3af7"/><path d="M340.6 237.1 345.3 238.2 348.0 234.7 343.4 233.6Z" fill="#733ff7"/><path d="M313.3 298.9 318.0 302.8 320.7 297.6 316.1 293.8Z" fill="#006bff"/><path d="M386.8 230.5 391.5 231.8 394.2 229.1 389.6 227.9Z" fill="#884af5"/><path d="M375.1 271.3 379.8 287.4 382.5 266.9 377.9 257.7Z" fill="#0005ff"/><path d="M367.4 232.2 372.1 233.5 374.8 230.6 370.2 229.5Z" fill="#8247f6"/><path d="M317.2 315.6 321.9 322.9 324.6 320.0 319.9 312.6Z" fill="#00b2ff"/><path d="M360.2 376.0 364.9 377.9 367.6 376.3 362.9 374.4Z" fill="#00ff75"/><path d="M334.2 363.2 338.9 367.1 341.6 365.5 336.9 361.6Z" fill="#00ffa1"/><path d="M338.9 367.1 343.5 370.3 346.2 368.8 341.6 365.5Z" fill="#00ff94"/><path d="M318.8 287.5 323.5 291.1 326.2 283.5 321.5 280.1Z" fill="#003cff"/><path d="M315.3 306.7 319.9 312.6 322.7 308.6 318.0 302.8Z" fill="#008dff"/><path d="M132.6 383.6 137.3 384.5 140.0 382.8 135.4 382.0Z" fill="#00ff5b"/><path d="M323.1 249.2 327.8 249.8 330.5 244.5 325.9 243.8Z" fill="#4e2af9"/><path d="M317.7 262.6 322.3 263.1 325.1 256.0 320.4 255.5Z" fill="#2313fd"/><path d="M316.9 278.4 321.5 280.1 324.3 272.3 319.6 270.7Z" fill="#0016ff"/><path d="M323.0 344.2 327.6 351.1 330.4 349.5 325.7 342.6Z" fill="#00ffe1"/><path d="M418.3 229.2 422.9 230.5 425.7 228.0 421.0 226.8Z" fill="#8d4df5"/><path d="M343.5 370.3 348.2 373.1 350.9 371.5 346.2 368.8Z" fill="#00ff89"/><path d="M329.6 358.4 334.2 363.2 336.9 361.6 332.3 356.9Z" fill="#00ffb1"/><path d="M306.0 300.9 310.6 302.8 313.3 298.9 308.7 297.0Z" fill="#006fff"/><path d="M320.4 255.5 325.1 256.0 327.8 249.8 323.1 249.2Z" fill="#3a20fb"/><path d="M298.6 304.1 303.2 304.0 306.0 300.9 301.3 301.0Z" fill="#0079ff"/><path d="M164.1 382.5 168.8 383.2 171.5 381.4 166.8 380.7Z" fill="#00ff60"/><path d="M183.5 380.9 188.2 381.5 190.9 379.6 186.2 379.0Z" fill="#00ff67"/><path d="M398.9 230.4 403.5 231.8 406.3 229.1 401.6 227.9Z" fill="#894bf5"/><path d="M360.0 233.9 364.7 235.3 367.4 232.2 362.8 231.0Z" fill="#7e45f6"/><path d="M388.9 380.9 393.6 382.2 396.3 380.6 391.7 379.3Z" fill="#00ff66"/><path d="M401.0 381.9 405.6 383.1 408.3 381.5 403.7 380.3Z" fill="#00ff62"/><path d="M326.2 283.5 330.8 288.8 333.6 279.8 328.9 275.2Z" fill="#002dff"/><path d="M113.2 384.4 117.9 385.3 120.6 383.6 116.0 382.8Z" fill="#00ff59"/><path d="M248.0 350.5 252.7 346.6 255.4 342.3 250.8 346.9Z" fill="#00ffe3"/><path d="M379.5 231.9 384.1 233.3 386.8 230.5 382.2 229.2Z" fill="#8448f6"/><path d="M413.0 382.7 417.7 383.9 420.4 382.3 415.7 381.1Z" fill="#00ff60"/><path d="M376.9 379.6 381.5 381.1 384.3 379.5 379.6 378.0Z" fill="#00ff6a"/><path d="M235.2 364.1 239.8 362.6 242.6 358.5 237.9 360.6Z" fill="#00ffad"/><path d="M144.7 383.6 149.3 384.4 152.1 382.7 147.4 381.9Z" fill="#00ff5c"/><path d="M260.9 335.4 265.5 329.6 268.2 326.9 263.6 332.8Z" fill="#00e2ff"/><path d="M217.7 374.2 222.4 374.2 225.1 371.3 220.4 371.6Z" fill="#00ff83"/><path d="M210.3 376.6 215.0 376.8 217.7 374.2 213.0 374.2Z" fill="#00ff79"/><path d="M310.6 302.8 315.3 306.7 318.0 302.8 313.3 298.9Z" fill="#0079ff"/><path d="M321.5 280.1 326.2 283.5 328.9 275.2 324.3 272.3Z" fill="#001dff"/><path d="M382.5 266.9 387.2 282.9 389.9 262.3 385.2 254.0Z" fill="#0c06fe"/><path d="M348.2 373.1 352.8 375.5 355.6 373.9 350.9 371.5Z" fill="#00ff81"/><path d="M352.7 235.9 357.3 237.2 360.0 233.9 355.4 232.7Z" fill="#7842f6"/><path d="M281.1 315.8 285.7 311.9 288.5 310.3 283.8 314.2Z" fill="#009fff"/><path d="M330.5 244.5 335.2 245.6 337.9 241.0 333.2 240.0Z" fill="#5d33f8"/><path d="M364.9 377.9 369.5 379.6 372.2 378.0 367.6 376.3Z" fill="#00ff71"/><path d="M410.9 230.4 415.6 231.9 418.3 229.2 413.6 227.9Z" fill="#8a4bf5"/><path d="M319.6 270.7 324.3 272.3 327.0 264.5 322.3 263.1Z" fill="#0804fe"/><path d="M333.6 279.8 338.2 286.7 340.9 276.3 336.3 270.7Z" fill="#001fff"/><path d="M202.9 378.5 207.6 378.9 210.3 376.6 205.7 376.3Z" fill="#00ff72"/><path d="M125.3 384.5 129.9 385.3 132.6 383.6 128.0 382.8Z" fill="#00ff5a"/><path d="M225.1 371.3 229.7 370.9 232.5 367.6 227.8 368.3Z" fill="#00ff90"/><path d="M345.3 238.2 349.9 239.5 352.7 235.9 348.0 234.7Z" fill="#713ef7"/><path d="M391.5 231.8 396.2 233.2 398.9 230.4 394.2 229.1Z" fill="#8649f5"/><path d="M176.1 382.1 180.8 382.8 183.5 380.9 178.9 380.3Z" fill="#00ff64"/><path d="M372.1 233.5 376.7 234.9 379.5 231.9 374.8 230.6Z" fill="#8046f6"/><path d="M337.9 241.0 342.6 242.3 345.3 238.2 340.6 237.1Z" fill="#6939f8"/><path d="M324.9 352.7 329.6 358.4 332.3 356.9 327.6 351.1Z" fill="#00ffc7"/><path d="M416.7 258.6 421.3 277.5 424.1 253.2 419.4 246.1Z" fill="#2715fc"/><path d="M156.7 383.5 161.4 384.2 164.1 382.5 159.4 381.7Z" fill="#00ff5e"/><path d="M271.0 324.7 275.6 319.3 278.4 317.4 273.7 322.9Z" fill="#00bbff"/><path d="M340.9 276.3 345.6 284.4 348.3 272.7 343.7 266.5Z" fill="#0011ff"/><path d="M422.9 230.5 427.6 232.0 430.3 229.3 425.7 228.0Z" fill="#8b4cf5"/><path d="M195.6 380.1 200.2 380.6 202.9 378.5 198.3 378.1Z" fill="#00ff6d"/><path d="M312.5 309.8 317.2 315.6 319.9 312.6 315.3 306.7Z" fill="#0096ff"/><path d="M352.8 375.5 357.5 377.6 360.2 376.0 355.6 373.9Z" fill="#00ff7b"/><path d="M327.8 249.8 332.4 251.0 335.2 245.6 330.5 244.5Z" fill="#4e2af9"/><path d="M137.3 384.5 142.0 385.3 144.7 383.6 140.0 382.8Z" fill="#00ff5b"/><path d="M322.3 263.1 327.0 264.5 329.7 257.3 325.1 256.0Z" fill="#2313fd"/><path d="M403.5 231.8 408.2 233.3 410.9 230.4 406.3 229.1Z" fill="#874af5"/><path d="M245.3 354.4 250.0 351.3 252.7 346.6 248.0 350.5Z" fill="#00ffd7"/><path d="M364.7 235.3 369.4 236.7 372.1 233.5 367.4 232.2Z" fill="#7c44f6"/><path d="M393.6 382.2 398.2 383.5 401.0 381.9 396.3 380.6Z" fill="#00ff64"/><path d="M381.5 381.1 386.2 382.5 388.9 380.9 384.3 379.5Z" fill="#00ff68"/><path d="M405.6 383.1 410.3 384.3 413.0 382.7 408.3 381.5Z" fill="#00ff61"/><path d="M324.3 272.3 328.9 275.2 331.6 266.9 327.0 264.5Z" fill="#0301ff"/><path d="M384.1 233.3 388.8 234.8 391.5 231.8 386.8 230.5Z" fill="#8247f6"/><path d="M325.1 256.0 329.7 257.3 332.4 251.0 327.8 249.8Z" fill="#3a20fb"/><path d="M389.9 262.3 394.5 277.3 397.3 257.8 392.6 250.6Z" fill="#1d10fd"/><path d="M303.2 304.0 307.9 305.9 310.6 302.8 306.0 300.9Z" fill="#0079ff"/><path d="M348.3 272.7 353.0 281.8 355.7 269.1 351.1 262.6Z" fill="#0004ff"/><path d="M328.9 275.2 333.6 279.8 336.3 270.7 331.6 266.9Z" fill="#000aff"/><path d="M314.5 317.9 319.1 325.1 321.9 322.9 317.2 315.6Z" fill="#00b7ff"/><path d="M168.8 383.2 173.4 384.0 176.1 382.1 171.5 381.4Z" fill="#00ff61"/><path d="M369.5 379.6 374.2 381.2 376.9 379.6 372.2 378.0Z" fill="#00ff6d"/><path d="M232.5 367.6 237.1 366.6 239.8 362.6 235.2 364.1Z" fill="#00ffa2"/><path d="M316.4 326.9 321.0 334.9 323.8 333.1 319.1 325.1Z" fill="#00daff"/><path d="M288.5 310.3 293.1 308.2 295.9 306.4 291.2 308.5Z" fill="#008bff"/><path d="M117.9 385.3 122.5 386.1 125.3 384.5 120.6 383.6Z" fill="#00ff59"/><path d="M443.5 252.5 448.1 270.7 450.9 247.3 446.2 241.6Z" fill="#3d21fb"/><path d="M188.2 381.5 192.8 382.2 195.6 380.1 190.9 379.6Z" fill="#00ff68"/><path d="M357.3 237.2 362.0 238.8 364.7 235.3 360.0 233.9Z" fill="#7641f7"/><path d="M415.6 231.9 420.2 233.5 422.9 230.5 418.3 229.2Z" fill="#884af5"/><path d="M149.3 384.4 154.0 385.2 156.7 383.5 152.1 382.7Z" fill="#00ff5d"/><path d="M318.3 336.5 323.0 344.2 325.7 342.6 321.0 334.9Z" fill="#00fdff"/><path d="M335.2 245.6 339.8 247.0 342.6 242.3 337.9 241.0Z" fill="#5c32f8"/><path d="M307.9 305.9 312.5 309.8 315.3 306.7 310.6 302.8Z" fill="#0083ff"/><path d="M295.9 306.4 300.5 306.3 303.2 304.0 298.6 304.1Z" fill="#007fff"/><path d="M396.2 233.2 400.8 234.8 403.5 231.8 398.9 230.4Z" fill="#8448f6"/><path d="M355.7 269.1 360.4 278.8 363.1 265.3 358.4 258.8Z" fill="#0a05fe"/><path d="M349.9 239.5 354.6 241.1 357.3 237.2 352.7 235.9Z" fill="#6f3df7"/><path d="M376.7 234.9 381.4 236.5 384.1 233.3 379.5 231.9Z" fill="#7e45f6"/><path d="M342.6 242.3 347.2 243.8 349.9 239.5 345.3 238.2Z" fill="#6738f8"/><path d="M258.1 338.5 262.8 333.1 265.5 329.6 260.9 335.4Z" fill="#00e9ff"/><path d="M331.5 364.8 336.1 368.7 338.9 367.1 334.2 363.2Z" fill="#00ffa1"/><path d="M357.5 377.6 362.1 379.5 364.9 377.9 360.2 376.0Z" fill="#00ff75"/><path d="M336.1 368.7 340.8 371.9 343.5 370.3 338.9 367.1Z" fill="#00ff93"/><path d="M129.9 385.3 134.6 386.2 137.3 384.5 132.6 383.6Z" fill="#00ff5a"/><path d="M427.6 232.0 432.3 233.7 435.0 230.7 430.3 229.3Z" fill="#884af5"/><path d="M327.0 264.5 331.6 266.9 334.4 259.3 329.7 257.3Z" fill="#1f11fd"/><path d="M215.0 376.8 219.6 376.9 222.4 374.2 217.7 374.2Z" fill="#00ff7d"/><path d="M242.6 358.5 247.2 356.1 250.0 351.3 245.3 354.4Z" fill="#00ffc9"/><path d="M320.2 345.8 324.9 352.7 327.6 351.1 323.0 344.2Z" fill="#00ffe1"/><path d="M336.3 270.7 340.9 276.3 343.7 266.5 339.0 262.3Z" fill="#0704fe"/><path d="M180.8 382.8 185.4 383.5 188.2 381.5 183.5 380.9Z" fill="#00ff65"/><path d="M222.4 374.2 227.0 374.1 229.7 370.9 225.1 371.3Z" fill="#00ff88"/><path d="M207.6 378.9 212.2 379.2 215.0 376.8 210.3 376.6Z" fill="#00ff75"/><path d="M408.2 233.3 412.8 235.0 415.6 231.9 410.9 230.4Z" fill="#8448f6"/><path d="M340.8 371.9 345.4 374.7 348.2 373.1 343.5 370.3Z" fill="#00ff89"/><path d="M161.4 384.2 166.0 385.0 168.8 383.2 164.1 382.5Z" fill="#00ff5f"/><path d="M332.4 251.0 337.1 252.7 339.8 247.0 335.2 245.6Z" fill="#4c29fa"/><path d="M369.4 236.7 374.0 238.4 376.7 234.9 372.1 233.5Z" fill="#7942f6"/><path d="M326.8 360.1 331.5 364.8 334.2 363.2 329.6 358.4Z" fill="#00ffb1"/><path d="M424.1 253.2 428.7 267.8 431.5 248.6 426.8 243.1Z" fill="#3e22fb"/><path d="M397.3 257.8 401.9 271.1 404.7 253.5 400.0 247.4Z" fill="#2f1afc"/><path d="M363.1 265.3 367.7 275.3 370.5 261.5 365.8 255.3Z" fill="#180dfd"/><path d="M388.8 234.8 393.4 236.5 396.2 233.2 391.5 231.8Z" fill="#8046f6"/><path d="M329.7 257.3 334.4 259.3 337.1 252.7 332.4 251.0Z" fill="#371efb"/><path d="M386.2 382.5 390.9 383.8 393.6 382.2 388.9 380.9Z" fill="#00ff66"/><path d="M398.2 383.5 402.9 384.7 405.6 383.1 401.0 381.9Z" fill="#00ff62"/><path d="M331.6 266.9 336.3 270.7 339.0 262.3 334.4 259.3Z" fill="#160cfd"/><path d="M110.5 386.1 115.2 386.9 117.9 385.3 113.2 384.4Z" fill="#00ff58"/><path d="M410.3 384.3 414.9 385.4 417.7 383.9 413.0 382.7Z" fill="#00ff60"/><path d="M142.0 385.3 146.6 386.1 149.3 384.4 144.7 383.6Z" fill="#00ff5c"/><path d="M374.2 381.2 378.8 382.6 381.5 381.1 376.9 379.6Z" fill="#00ff6a"/><path d="M200.2 380.6 204.9 381.1 207.6 378.9 202.9 378.5Z" fill="#00ff6f"/><path d="M362.0 238.8 366.6 240.6 369.4 236.7 364.7 235.3Z" fill="#733ff7"/><path d="M420.2 233.5 424.9 235.3 427.6 232.0 422.9 230.5Z" fill="#8549f6"/><path d="M339.8 247.0 344.5 248.9 347.2 243.8 342.6 242.3Z" fill="#5931f9"/><path d="M345.4 374.7 350.1 377.1 352.8 375.5 348.2 373.1Z" fill="#00ff81"/><path d="M278.4 317.4 283.0 313.5 285.7 311.9 281.1 315.8Z" fill="#009fff"/><path d="M229.7 370.9 234.4 370.4 237.1 366.6 232.5 367.6Z" fill="#00ff98"/><path d="M400.8 234.8 405.5 236.7 408.2 233.3 403.5 231.8Z" fill="#8046f6"/><path d="M343.7 266.5 348.3 272.7 351.1 262.6 346.4 258.1Z" fill="#160cfd"/><path d="M381.4 236.5 386.0 238.4 388.8 234.8 384.1 233.3Z" fill="#7b43f6"/><path d="M362.1 379.5 366.8 381.2 369.5 379.6 364.9 377.9Z" fill="#00ff71"/><path d="M354.6 241.1 359.2 242.9 362.0 238.8 357.3 237.2Z" fill="#6c3bf7"/><path d="M309.8 312.1 314.5 317.9 317.2 315.6 312.5 309.8Z" fill="#009cff"/><path d="M370.5 261.5 375.1 271.3 377.9 257.7 373.2 252.0Z" fill="#2615fc"/><path d="M347.2 243.8 351.9 245.7 354.6 241.1 349.9 239.5Z" fill="#6436f8"/><path d="M122.5 386.1 127.2 387.0 129.9 385.3 125.3 384.5Z" fill="#00ff59"/><path d="M173.4 384.0 178.1 384.7 180.8 382.8 176.1 382.1Z" fill="#00ff62"/><path d="M239.8 362.6 244.5 360.9 247.2 356.1 242.6 358.5Z" fill="#00ffba"/><path d="M432.3 233.7 436.9 235.7 439.6 232.2 435.0 230.7Z" fill="#8549f6"/><path d="M268.2 326.9 272.9 321.5 275.6 319.3 271.0 324.7Z" fill="#00bdff"/><path d="M334.4 259.3 339.0 262.3 341.7 255.0 337.1 252.7Z" fill="#311bfb"/><path d="M154.0 385.2 158.6 386.0 161.4 384.2 156.7 383.5Z" fill="#00ff5e"/><path d="M192.8 382.2 197.5 382.7 200.2 380.6 195.6 380.1Z" fill="#00ff6a"/><path d="M322.2 354.3 326.8 360.1 329.6 358.4 324.9 352.7Z" fill="#00ffc7"/><path d="M300.5 306.3 305.2 308.2 307.9 305.9 303.2 304.0Z" fill="#007fff"/><path d="M337.1 252.7 341.7 255.0 344.5 248.9 339.8 247.0Z" fill="#4827fa"/><path d="M450.9 247.3 455.5 259.3 458.3 243.2 453.6 239.0Z" fill="#552ef9"/><path d="M255.4 342.3 260.1 337.4 262.8 333.1 258.1 338.5Z" fill="#00f3ff"/><path d="M404.7 253.5 409.3 264.7 412.0 249.6 407.4 244.5Z" fill="#4023fa"/><path d="M412.8 235.0 417.5 237.0 420.2 233.5 415.6 231.9Z" fill="#8146f6"/><path d="M374.0 238.4 378.7 240.4 381.4 236.5 376.7 234.9Z" fill="#7640f7"/><path d="M339.0 262.3 343.7 266.5 346.4 258.1 341.7 255.0Z" fill="#2715fc"/><path d="M393.4 236.5 398.1 238.6 400.8 234.8 396.2 233.2Z" fill="#7c44f6"/><path d="M351.1 262.6 355.7 269.1 358.4 258.8 353.8 254.4Z" fill="#2514fc"/><path d="M134.6 386.2 139.2 387.0 142.0 385.3 137.3 384.5Z" fill="#00ff5b"/><path d="M377.9 257.7 382.5 266.9 385.2 254.0 380.6 248.9Z" fill="#341cfb"/><path d="M431.5 248.6 436.1 259.3 438.8 244.8 434.2 240.5Z" fill="#512df9"/><path d="M350.1 377.1 354.8 379.2 357.5 377.6 352.8 375.5Z" fill="#00ff7b"/><path d="M305.2 308.2 309.8 312.1 312.5 309.8 307.9 305.9Z" fill="#0088ff"/><path d="M311.7 319.7 316.4 326.9 319.1 325.1 314.5 317.9Z" fill="#00baff"/><path d="M366.6 240.6 371.3 242.7 374.0 238.4 369.4 236.7Z" fill="#6f3df7"/><path d="M424.9 235.3 429.5 237.5 432.3 233.7 427.6 232.0Z" fill="#8146f6"/><path d="M390.9 383.8 395.5 385.0 398.2 383.5 393.6 382.2Z" fill="#00ff64"/><path d="M344.5 248.9 349.1 251.3 351.9 245.7 347.2 243.8Z" fill="#552ef9"/><path d="M378.8 382.6 383.5 384.0 386.2 382.5 381.5 381.1Z" fill="#00ff68"/><path d="M402.9 384.7 407.5 385.9 410.3 384.3 405.6 383.1Z" fill="#00ff61"/><path d="M166.0 385.0 170.7 385.8 173.4 384.0 168.8 383.2Z" fill="#00ff60"/><path d="M405.5 236.7 410.1 239.0 412.8 235.0 408.2 233.3Z" fill="#7c44f6"/><path d="M185.4 383.5 190.1 384.1 192.8 382.2 188.2 381.5Z" fill="#00ff66"/><path d="M359.2 242.9 363.9 245.2 366.6 240.6 362.0 238.8Z" fill="#6839f8"/><path d="M386.0 238.4 390.7 240.6 393.4 236.5 388.8 234.8Z" fill="#7741f7"/><path d="M351.9 245.7 356.5 248.0 359.2 242.9 354.6 241.1Z" fill="#5f34f8"/><path d="M341.7 255.0 346.4 258.1 349.1 251.3 344.5 248.9Z" fill="#4123fa"/><path d="M285.7 311.9 290.4 309.8 293.1 308.2 288.5 310.3Z" fill="#008cff"/><path d="M313.7 328.5 318.3 336.5 321.0 334.9 316.4 326.9Z" fill="#00dbff"/><path d="M366.8 381.2 371.4 382.7 374.2 381.2 369.5 379.6Z" fill="#00ff6d"/><path d="M115.2 386.9 119.8 387.8 122.5 386.1 117.9 385.3Z" fill="#00ff59"/><path d="M436.9 235.7 441.6 238.2 444.3 234.0 439.6 232.2Z" fill="#8046f6"/><path d="M293.1 308.2 297.8 308.1 300.5 306.3 295.9 306.4Z" fill="#0081ff"/><path d="M219.6 376.9 224.3 377.1 227.0 374.1 222.4 374.2Z" fill="#00ff82"/><path d="M358.4 258.8 363.1 265.3 365.8 255.3 361.2 251.1Z" fill="#321bfb"/><path d="M412.0 249.6 416.7 258.6 419.4 246.1 414.8 241.9Z" fill="#502cf9"/><path d="M212.2 379.2 216.9 379.6 219.6 376.9 215.0 376.8Z" fill="#00ff78"/><path d="M346.4 258.1 351.1 262.6 353.8 254.4 349.1 251.3Z" fill="#361dfb"/><path d="M146.6 386.1 151.3 386.9 154.0 385.2 149.3 384.4Z" fill="#00ff5c"/><path d="M385.2 254.0 389.9 262.3 392.6 250.6 388.0 246.1Z" fill="#4124fa"/><path d="M237.1 366.6 241.8 365.6 244.5 360.9 239.8 362.6Z" fill="#00ffad"/><path d="M315.6 338.1 320.2 345.8 323.0 344.2 318.3 336.5Z" fill="#00fdff"/><path d="M417.5 237.0 422.1 239.6 424.9 235.3 420.2 233.5Z" fill="#7c44f6"/><path d="M378.7 240.4 383.3 242.9 386.0 238.4 381.4 236.5Z" fill="#713ef7"/><path d="M398.1 238.6 402.7 241.1 405.5 236.7 400.8 234.8Z" fill="#7741f7"/><path d="M438.8 244.8 443.5 252.5 446.2 241.6 441.6 238.2Z" fill="#6135f8"/><path d="M252.7 346.6 257.3 342.4 260.1 337.4 255.4 342.3Z" fill="#00fffd"/><path d="M349.1 251.3 353.8 254.4 356.5 248.0 351.9 245.7Z" fill="#4d2af9"/><path d="M204.9 381.1 209.5 381.6 212.2 379.2 207.6 378.9Z" fill="#00ff71"/><path d="M227.0 374.1 231.7 373.9 234.4 370.4 229.7 370.9Z" fill="#00ff8e"/><path d="M328.8 366.5 333.4 370.4 336.1 368.7 331.5 364.8Z" fill="#00ffa0"/><path d="M333.4 370.4 338.1 373.6 340.8 371.9 336.1 368.7Z" fill="#00ff93"/><path d="M429.5 237.5 434.2 240.5 436.9 235.7 432.3 233.7Z" fill="#7b43f6"/><path d="M354.8 379.2 359.4 381.0 362.1 379.5 357.5 377.6Z" fill="#00ff75"/><path d="M365.8 255.3 370.5 261.5 373.2 252.0 368.5 248.1Z" fill="#3f22fb"/><path d="M371.3 242.7 375.9 245.3 378.7 240.4 374.0 238.4Z" fill="#6a3af7"/><path d="M127.2 387.0 131.8 387.8 134.6 386.2 129.9 385.3Z" fill="#00ff5a"/><path d="M392.6 250.6 397.3 257.8 400.0 247.4 395.3 243.5Z" fill="#4e2bf9"/><path d="M353.8 254.4 358.4 258.8 361.2 251.1 356.5 248.0Z" fill="#4324fa"/><path d="M419.4 246.1 424.1 253.2 426.8 243.1 422.1 239.6Z" fill="#5d33f8"/><path d="M356.5 248.0 361.2 251.1 363.9 245.2 359.2 242.9Z" fill="#5830f9"/><path d="M178.1 384.7 182.7 385.4 185.4 383.5 180.8 382.8Z" fill="#00ff63"/><path d="M410.1 239.0 414.8 241.9 417.5 237.0 412.8 235.0Z" fill="#7641f7"/><path d="M363.9 245.2 368.5 248.1 371.3 242.7 366.6 240.6Z" fill="#6235f8"/><path d="M441.6 238.2 446.2 241.6 448.9 236.1 444.3 234.0Z" fill="#7942f6"/><path d="M390.7 240.6 395.3 243.5 398.1 238.6 393.4 236.5Z" fill="#713ef7"/><path d="M317.5 347.5 322.2 354.3 324.9 352.7 320.2 345.8Z" fill="#00ffe1"/><path d="M446.2 241.6 450.9 247.3 453.6 239.0 448.9 236.1Z" fill="#6d3bf7"/><path d="M158.6 386.0 163.3 386.8 166.0 385.0 161.4 384.2Z" fill="#00ff5e"/><path d="M422.1 239.6 426.8 243.1 429.5 237.5 424.9 235.3Z" fill="#7440f7"/><path d="M324.1 361.8 328.8 366.5 331.5 364.8 326.8 360.1Z" fill="#00ffb1"/><path d="M338.1 373.6 342.7 376.3 345.4 374.7 340.8 371.9Z" fill="#00ff89"/><path d="M426.8 243.1 431.5 248.6 434.2 240.5 429.5 237.5Z" fill="#6839f8"/><path d="M373.2 252.0 377.9 257.7 380.6 248.9 375.9 245.3Z" fill="#4b29fa"/><path d="M434.2 240.5 438.8 244.8 441.6 238.2 436.9 235.7Z" fill="#713ef7"/><path d="M400.0 247.4 404.7 253.5 407.4 244.5 402.7 241.1Z" fill="#5a31f9"/><path d="M197.5 382.7 202.1 383.3 204.9 381.1 200.2 380.6Z" fill="#00ff6c"/><path d="M361.2 251.1 365.8 255.3 368.5 248.1 363.9 245.2Z" fill="#4e2bf9"/><path d="M383.3 242.9 388.0 246.1 390.7 240.6 386.0 238.4Z" fill="#6a3af7"/><path d="M402.7 241.1 407.4 244.5 410.1 239.0 405.5 236.7Z" fill="#703df7"/><path d="M414.8 241.9 419.4 246.1 422.1 239.6 417.5 237.0Z" fill="#6d3bf7"/><path d="M407.4 244.5 412.0 249.6 414.8 241.9 410.1 239.0Z" fill="#6437f8"/><path d="M383.5 384.0 388.1 385.3 390.9 383.8 386.2 382.5Z" fill="#00ff66"/><path d="M368.5 248.1 373.2 252.0 375.9 245.3 371.3 242.7Z" fill="#5930f9"/><path d="M375.9 245.3 380.6 248.9 383.3 242.9 378.7 240.4Z" fill="#6235f8"/><path d="M395.5 385.0 400.2 386.3 402.9 384.7 398.2 383.5Z" fill="#00ff62"/><path d="M380.6 248.9 385.2 254.0 388.0 246.1 383.3 242.9Z" fill="#562ff9"/><path d="M139.2 387.0 143.9 387.8 146.6 386.1 142.0 385.3Z" fill="#00ff5b"/><path d="M395.3 243.5 400.0 247.4 402.7 241.1 398.1 238.6Z" fill="#6839f8"/><path d="M250.0 351.3 254.6 347.9 257.3 342.4 252.7 346.6Z" fill="#00ffed"/><path d="M388.0 246.1 392.6 250.6 395.3 243.5 390.7 240.6Z" fill="#5f34f8"/><path d="M407.5 385.9 412.2 387.0 414.9 385.4 410.3 384.3Z" fill="#00ff60"/><path d="M265.5 329.6 270.2 324.5 272.9 321.5 268.2 326.9Z" fill="#00c2ff"/><path d="M371.4 382.7 376.1 384.2 378.8 382.6 374.2 381.2Z" fill="#00ff6a"/><path d="M307.1 313.9 311.7 319.7 314.5 317.9 309.8 312.1Z" fill="#009eff"/><path d="M234.4 370.4 239.0 369.8 241.8 365.6 237.1 366.6Z" fill="#00ffa0"/><path d="M275.6 319.3 280.3 315.3 283.0 313.5 278.4 317.4Z" fill="#00a0ff"/><path d="M342.7 376.3 347.4 378.7 350.1 377.1 345.4 374.7Z" fill="#00ff81"/><path d="M170.7 385.8 175.3 386.5 178.1 384.7 173.4 384.0Z" fill="#00ff61"/><path d="M359.4 381.0 364.1 382.7 366.8 381.2 362.1 379.5Z" fill="#00ff71"/><path d="M190.1 384.1 194.8 384.8 197.5 382.7 192.8 382.2Z" fill="#00ff68"/><path d="M119.8 387.8 124.5 388.6 127.2 387.0 122.5 386.1Z" fill="#00ff59"/><path d="M297.8 308.1 302.4 310.1 305.2 308.2 300.5 306.3Z" fill="#0081ff"/><path d="M151.3 386.9 155.9 387.7 158.6 386.0 154.0 385.2Z" fill="#00ff5d"/><path d="M319.4 356.2 324.1 361.8 326.8 360.1 322.2 354.3Z" fill="#00ffc6"/><path d="M247.2 356.1 251.9 353.6 254.6 347.9 250.0 351.3Z" fill="#00ffdb"/><path d="M302.4 310.1 307.1 313.9 309.8 312.1 305.2 308.2Z" fill="#008bff"/><path d="M216.9 379.6 221.6 379.9 224.3 377.1 219.6 376.9Z" fill="#00ff7b"/><path d="M224.3 377.1 228.9 377.2 231.7 373.9 227.0 374.1Z" fill="#00ff86"/><path d="M131.8 387.8 136.5 388.7 139.2 387.0 134.6 386.2Z" fill="#00ff5a"/><path d="M309.0 321.3 313.7 328.5 316.4 326.9 311.7 319.7Z" fill="#00baff"/><path d="M209.5 381.6 214.2 382.1 216.9 379.6 212.2 379.2Z" fill="#00ff74"/><path d="M347.4 378.7 352.0 380.7 354.8 379.2 350.1 377.1Z" fill="#00ff7a"/><path d="M182.7 385.4 187.4 386.1 190.1 384.1 185.4 383.5Z" fill="#00ff64"/><path d="M244.5 360.9 249.2 359.2 251.9 353.6 247.2 356.1Z" fill="#00ffc9"/><path d="M163.3 386.8 168.0 387.6 170.7 385.8 166.0 385.0Z" fill="#00ff5f"/><path d="M388.1 385.3 392.8 386.6 395.5 385.0 390.9 383.8Z" fill="#00ff64"/><path d="M376.1 384.2 380.7 385.6 383.5 384.0 378.8 382.6Z" fill="#00ff68"/><path d="M400.2 386.3 404.8 387.4 407.5 385.9 402.9 384.7Z" fill="#00ff61"/><path d="M283.0 313.5 287.7 311.4 290.4 309.8 285.7 311.9Z" fill="#008cff"/><path d="M310.9 330.1 315.6 338.1 318.3 336.5 313.7 328.5Z" fill="#00dbff"/><path d="M290.4 309.8 295.1 309.8 297.8 308.1 293.1 308.2Z" fill="#0082ff"/><path d="M202.1 383.3 206.8 383.9 209.5 381.6 204.9 381.1Z" fill="#00ff6e"/><path d="M231.7 373.9 236.3 373.7 239.0 369.8 234.4 370.4Z" fill="#00ff94"/><path d="M364.1 382.7 368.7 384.3 371.4 382.7 366.8 381.2Z" fill="#00ff6d"/><path d="M143.9 387.8 148.5 388.6 151.3 386.9 146.6 386.1Z" fill="#00ff5b"/><path d="M312.9 339.8 317.5 347.5 320.2 345.8 315.6 338.1Z" fill="#00feff"/><path d="M262.8 333.1 267.4 328.2 270.2 324.5 265.5 329.6Z" fill="#00cbff"/><path d="M241.8 365.6 246.4 364.5 249.2 359.2 244.5 360.9Z" fill="#00ffb8"/><path d="M326.0 368.3 330.7 372.1 333.4 370.4 328.8 366.5Z" fill="#00ff9f"/><path d="M330.7 372.1 335.3 375.3 338.1 373.6 333.4 370.4Z" fill="#00ff93"/><path d="M175.3 386.5 180.0 387.3 182.7 385.4 178.1 384.7Z" fill="#00ff62"/><path d="M124.5 388.6 129.1 389.5 131.8 387.8 127.2 387.0Z" fill="#00ff59"/><path d="M352.0 380.7 356.7 382.6 359.4 381.0 354.8 379.2Z" fill="#00ff75"/><path d="M314.8 349.5 319.4 356.2 322.2 354.3 317.5 347.5Z" fill="#00ffe0"/><path d="M194.8 384.8 199.4 385.4 202.1 383.3 197.5 382.7Z" fill="#00ff69"/><path d="M155.9 387.7 160.6 388.6 163.3 386.8 158.6 386.0Z" fill="#00ff5d"/><path d="M321.4 363.8 326.0 368.3 328.8 366.5 324.1 361.8Z" fill="#00ffaf"/><path d="M335.3 375.3 340.0 378.0 342.7 376.3 338.1 373.6Z" fill="#00ff89"/><path d="M136.5 388.7 141.2 389.5 143.9 387.8 139.2 387.0Z" fill="#00ff5a"/><path d="M380.7 385.6 385.4 386.9 388.1 385.3 383.5 384.0Z" fill="#00ff66"/><path d="M392.8 386.6 397.4 387.8 400.2 386.3 395.5 385.0Z" fill="#00ff62"/><path d="M272.9 321.5 277.6 317.7 280.3 315.3 275.6 319.3Z" fill="#00a2ff"/><path d="M239.0 369.8 243.7 369.3 246.4 364.5 241.8 365.6Z" fill="#00ffa8"/><path d="M404.8 387.4 409.5 388.6 412.2 387.0 407.5 385.9Z" fill="#00ff60"/><path d="M368.7 384.3 373.4 385.8 376.1 384.2 371.4 382.7Z" fill="#00ff6a"/><path d="M304.4 315.5 309.0 321.3 311.7 319.7 307.1 313.9Z" fill="#009fff"/><path d="M221.6 379.9 226.2 380.2 228.9 377.2 224.3 377.1Z" fill="#00ff7f"/><path d="M187.4 386.1 192.0 386.8 194.8 384.8 190.1 384.1Z" fill="#00ff65"/><path d="M168.0 387.6 172.6 388.4 175.3 386.5 170.7 385.8Z" fill="#00ff60"/><path d="M214.2 382.1 218.8 382.5 221.6 379.9 216.9 379.6Z" fill="#00ff76"/><path d="M340.0 378.0 344.6 380.3 347.4 378.7 342.7 376.3Z" fill="#00ff81"/><path d="M260.1 337.4 264.7 332.9 267.4 328.2 262.8 333.1Z" fill="#00d7ff"/><path d="M295.1 309.8 299.7 311.7 302.4 310.1 297.8 308.1Z" fill="#0082ff"/><path d="M228.9 377.2 233.6 377.3 236.3 373.7 231.7 373.9Z" fill="#00ff8b"/><path d="M356.7 382.6 361.3 384.3 364.1 382.7 359.4 381.0Z" fill="#00ff71"/><path d="M316.7 358.3 321.4 363.8 324.1 361.8 319.4 356.2Z" fill="#00ffc4"/><path d="M148.5 388.6 153.2 389.5 155.9 387.7 151.3 386.9Z" fill="#00ff5c"/><path d="M206.8 383.9 211.4 384.4 214.2 382.1 209.5 381.6Z" fill="#00ff70"/><path d="M299.7 311.7 304.4 315.5 307.1 313.9 302.4 310.1Z" fill="#008cff"/><path d="M129.1 389.5 133.8 390.3 136.5 388.7 131.8 387.8Z" fill="#00ff59"/><path d="M180.0 387.3 184.6 388.0 187.4 386.1 182.7 385.4Z" fill="#00ff63"/><path d="M344.6 380.3 349.3 382.4 352.0 380.7 347.4 378.7Z" fill="#00ff7a"/><path d="M306.3 322.9 310.9 330.1 313.7 328.5 309.0 321.3Z" fill="#00baff"/><path d="M257.3 342.4 262.0 338.5 264.7 332.9 260.1 337.4Z" fill="#00e7ff"/><path d="M236.3 373.7 241.0 373.6 243.7 369.3 239.0 369.8Z" fill="#00ff9b"/><path d="M160.6 388.6 165.2 389.4 168.0 387.6 163.3 386.8Z" fill="#00ff5e"/><path d="M199.4 385.4 204.1 386.1 206.8 383.9 202.1 383.3Z" fill="#00ff6b"/><path d="M385.4 386.9 390.1 388.2 392.8 386.6 388.1 385.3Z" fill="#00ff64"/><path d="M373.4 385.8 378.0 387.2 380.7 385.6 376.1 384.2Z" fill="#00ff68"/><path d="M397.4 387.8 402.1 389.0 404.8 387.4 400.2 386.3Z" fill="#00ff61"/><path d="M280.3 315.3 284.9 313.3 287.7 311.4 283.0 313.5Z" fill="#008dff"/><path d="M308.2 331.9 312.9 339.8 315.6 338.1 310.9 330.1Z" fill="#00dcff"/><path d="M287.7 311.4 292.3 311.4 295.1 309.8 290.4 309.8Z" fill="#0082ff"/><path d="M141.2 389.5 145.8 390.4 148.5 388.6 143.9 387.8Z" fill="#00ff5b"/><path d="M310.1 341.9 314.8 349.5 317.5 347.5 312.9 339.8Z" fill="#00ffff"/><path d="M254.6 347.9 259.3 344.7 262.0 338.5 257.3 342.4Z" fill="#00fbff"/><path d="M361.3 384.3 366.0 385.9 368.7 384.3 364.1 382.7Z" fill="#00ff6d"/><path d="M251.9 353.6 256.5 351.2 259.3 344.7 254.6 347.9Z" fill="#00ffee"/><path d="M323.3 370.3 327.9 374.0 330.7 372.1 326.0 368.3Z" fill="#00ff9e"/><path d="M249.2 359.2 253.8 357.6 256.5 351.2 251.9 353.6Z" fill="#00ffd8"/><path d="M172.6 388.4 177.3 389.1 180.0 387.3 175.3 386.5Z" fill="#00ff60"/><path d="M312.1 351.8 316.7 358.3 319.4 356.2 314.8 349.5Z" fill="#00ffdd"/><path d="M327.9 374.0 332.6 377.1 335.3 375.3 330.7 372.1Z" fill="#00ff92"/><path d="M192.0 386.8 196.7 387.5 199.4 385.4 194.8 384.8Z" fill="#00ff67"/><path d="M318.6 366.0 323.3 370.3 326.0 368.3 321.4 363.8Z" fill="#00ffad"/><path d="M246.4 364.5 251.1 363.6 253.8 357.6 249.2 359.2Z" fill="#00ffc3"/><path d="M349.3 382.4 353.9 384.2 356.7 382.6 352.0 380.7Z" fill="#00ff75"/><path d="M270.2 324.5 274.8 320.7 277.6 317.7 272.9 321.5Z" fill="#00a7ff"/><path d="M153.2 389.5 157.8 390.3 160.6 388.6 155.9 387.7Z" fill="#00ff5c"/><path d="M226.2 380.2 230.9 380.5 233.6 377.3 228.9 377.2Z" fill="#00ff82"/><path d="M218.8 382.5 223.5 383.0 226.2 380.2 221.6 379.9Z" fill="#00ff79"/><path d="M332.6 377.1 337.3 379.7 340.0 378.0 335.3 375.3Z" fill="#00ff88"/><path d="M211.4 384.4 216.1 385.0 218.8 382.5 214.2 382.1Z" fill="#00ff72"/><path d="M233.6 377.3 238.2 377.5 241.0 373.6 236.3 373.7Z" fill="#00ff8f"/><path d="M133.8 390.3 138.4 391.2 141.2 389.5 136.5 388.7Z" fill="#00ff5a"/><path d="M243.7 369.3 248.4 368.9 251.1 363.6 246.4 364.5Z" fill="#00ffb0"/><path d="M378.0 387.2 382.7 388.5 385.4 386.9 380.7 385.6Z" fill="#00ff66"/><path d="M390.1 388.2 394.7 389.4 397.4 387.8 392.8 386.6Z" fill="#00ff62"/><path d="M184.6 388.0 189.3 388.8 192.0 386.8 187.4 386.1Z" fill="#00ff63"/><path d="M402.1 389.0 406.7 390.1 409.5 388.6 404.8 387.4Z" fill="#00ff60"/><path d="M301.6 317.1 306.3 322.9 309.0 321.3 304.4 315.5Z" fill="#009fff"/><path d="M366.0 385.9 370.6 387.3 373.4 385.8 368.7 384.3Z" fill="#00ff6a"/><path d="M165.2 389.4 169.9 390.2 172.6 388.4 168.0 387.6Z" fill="#00ff5e"/><path d="M314.0 360.7 318.6 366.0 321.4 363.8 316.7 358.3Z" fill="#00ffc1"/><path d="M337.3 379.7 341.9 382.0 344.6 380.3 340.0 378.0Z" fill="#00ff80"/><path d="M204.1 386.1 208.7 386.7 211.4 384.4 206.8 383.9Z" fill="#00ff6c"/><path d="M292.3 311.4 297.0 313.3 299.7 311.7 295.1 309.8Z" fill="#0082ff"/><path d="M353.9 384.2 358.6 385.9 361.3 384.3 356.7 382.6Z" fill="#00ff71"/><path d="M145.8 390.4 150.5 391.2 153.2 389.5 148.5 388.6Z" fill="#00ff5b"/><path d="M241.0 373.6 245.6 373.6 248.4 368.9 243.7 369.3Z" fill="#00ffa0"/><path d="M297.0 313.3 301.6 317.1 304.4 315.5 299.7 311.7Z" fill="#008cff"/><path d="M177.3 389.1 181.9 389.9 184.6 388.0 180.0 387.3Z" fill="#00ff61"/><path d="M196.7 387.5 201.3 388.2 204.1 386.1 199.4 385.4Z" fill="#00ff68"/><path d="M267.4 328.2 272.1 324.6 274.8 320.7 270.2 324.5Z" fill="#00b0ff"/><path d="M303.6 324.7 308.2 331.9 310.9 330.1 306.3 322.9Z" fill="#00bbff"/><path d="M157.8 390.3 162.5 391.1 165.2 389.4 160.6 388.6Z" fill="#00ff5d"/><path d="M341.9 382.0 346.6 384.0 349.3 382.4 344.6 380.3Z" fill="#00ff7a"/><path d="M277.6 317.7 282.2 315.6 284.9 313.3 280.3 315.3Z" fill="#008fff"/><path d="M307.4 344.5 312.1 351.8 314.8 349.5 310.1 341.9Z" fill="#00fffb"/><path d="M305.5 334.1 310.1 341.9 312.9 339.8 308.2 331.9Z" fill="#00deff"/><path d="M382.7 388.5 387.3 389.7 390.1 388.2 385.4 386.9Z" fill="#00ff64"/><path d="M223.5 383.0 228.1 383.5 230.9 380.5 226.2 380.2Z" fill="#00ff7b"/><path d="M370.6 387.3 375.3 388.7 378.0 387.2 373.4 385.8Z" fill="#00ff68"/><path d="M394.7 389.4 399.4 390.6 402.1 389.0 397.4 387.8Z" fill="#00ff61"/><path d="M230.9 380.5 235.5 380.9 238.2 377.5 233.6 377.3Z" fill="#00ff86"/><path d="M309.3 354.6 314.0 360.7 316.7 358.3 312.1 351.8Z" fill="#00ffd9"/><path d="M284.9 313.3 289.6 313.2 292.3 311.4 287.7 311.4Z" fill="#0083ff"/><path d="M138.4 391.2 143.1 392.1 145.8 390.4 141.2 389.5Z" fill="#00ff5a"/><path d="M320.6 372.5 325.2 376.0 327.9 374.0 323.3 370.3Z" fill="#00ff9c"/><path d="M216.1 385.0 220.8 385.6 223.5 383.0 218.8 382.5Z" fill="#00ff73"/><path d="M358.6 385.9 363.3 387.5 366.0 385.9 361.3 384.3Z" fill="#00ff6d"/><path d="M189.3 388.8 193.9 389.5 196.7 387.5 192.0 386.8Z" fill="#00ff64"/><path d="M315.9 368.4 320.6 372.5 323.3 370.3 318.6 366.0Z" fill="#00ffaa"/><path d="M325.2 376.0 329.9 378.9 332.6 377.1 327.9 374.0Z" fill="#00ff90"/><path d="M169.9 390.2 174.5 391.0 177.3 389.1 172.6 388.4Z" fill="#00ff5f"/><path d="M238.2 377.5 242.9 377.7 245.6 373.6 241.0 373.6Z" fill="#00ff93"/><path d="M208.7 386.7 213.4 387.4 216.1 385.0 211.4 384.4Z" fill="#00ff6e"/><path d="M346.6 384.0 351.2 385.8 353.9 384.2 349.3 382.4Z" fill="#00ff75"/><path d="M150.5 391.2 155.1 392.0 157.8 390.3 153.2 389.5Z" fill="#00ff5c"/><path d="M251.1 363.6 255.7 363.0 258.5 356.5 253.8 357.6Z" fill="#00ffcc"/><path d="M264.7 332.9 269.4 329.5 272.1 324.6 267.4 328.2Z" fill="#00beff"/><path d="M329.9 378.9 334.5 381.5 337.3 379.7 332.6 377.1Z" fill="#00ff87"/><path d="M253.8 357.6 258.5 356.5 261.2 349.4 256.5 351.2Z" fill="#00ffe5"/><path d="M248.4 368.9 253.0 368.8 255.7 363.0 251.1 363.6Z" fill="#00ffb7"/><path d="M311.3 363.5 315.9 368.4 318.6 366.0 314.0 360.7Z" fill="#00ffbd"/><path d="M181.9 389.9 186.6 390.7 189.3 388.8 184.6 388.0Z" fill="#00ff62"/><path d="M256.5 351.2 261.2 349.4 263.9 342.2 259.3 344.7Z" fill="#00fffe"/><path d="M201.3 388.2 206.0 388.9 208.7 386.7 204.1 386.1Z" fill="#00ff69"/><path d="M375.3 388.7 379.9 390.0 382.7 388.5 378.0 387.2Z" fill="#00ff66"/><path d="M387.3 389.7 392.0 390.9 394.7 389.4 390.1 388.2Z" fill="#00ff62"/><path d="M162.5 391.1 167.1 391.9 169.9 390.2 165.2 389.4Z" fill="#00ff5d"/><path d="M262.0 338.5 266.6 335.5 269.4 329.5 264.7 332.9Z" fill="#00d0ff"/><path d="M298.9 319.0 303.6 324.7 306.3 322.9 301.6 317.1Z" fill="#00a0ff"/><path d="M259.3 344.7 263.9 342.2 266.6 335.5 262.0 338.5Z" fill="#00e7ff"/><path d="M399.4 390.6 404.0 391.7 406.7 390.1 402.1 389.0Z" fill="#00ff60"/><path d="M363.3 387.5 367.9 388.9 370.6 387.3 366.0 385.9Z" fill="#00ff6a"/><path d="M245.6 373.6 250.3 373.8 253.0 368.8 248.4 368.9Z" fill="#00ffa5"/><path d="M334.5 381.5 339.2 383.7 341.9 382.0 337.3 379.7Z" fill="#00ff7f"/><path d="M289.6 313.2 294.2 315.1 297.0 313.3 292.3 311.4Z" fill="#0083ff"/><path d="M143.1 392.1 147.7 392.9 150.5 391.2 145.8 390.4Z" fill="#00ff5a"/><path d="M351.2 385.8 355.9 387.5 358.6 385.9 353.9 384.2Z" fill="#00ff71"/><path d="M228.1 383.5 232.8 384.0 235.5 380.9 230.9 380.5Z" fill="#00ff7e"/><path d="M274.8 320.7 279.5 318.6 282.2 315.6 277.6 317.7Z" fill="#0095ff"/><path d="M304.7 347.6 309.3 354.6 312.1 351.8 307.4 344.5Z" fill="#00fff6"/><path d="M235.5 380.9 240.2 381.3 242.9 377.7 238.2 377.5Z" fill="#00ff88"/><path d="M193.9 389.5 198.6 390.2 201.3 388.2 196.7 387.5Z" fill="#00ff65"/><path d="M220.8 385.6 225.4 386.2 228.1 383.5 223.5 383.0Z" fill="#00ff75"/><path d="M174.5 391.0 179.2 391.8 181.9 389.9 177.3 389.1Z" fill="#00ff60"/><path d="M306.6 357.8 311.3 363.5 314.0 360.7 309.3 354.6Z" fill="#00ffd3"/><path d="M294.2 315.1 298.9 319.0 301.6 317.1 297.0 313.3Z" fill="#008dff"/><path d="M302.8 336.9 307.4 344.5 310.1 341.9 305.5 334.1Z" fill="#00e2ff"/><path d="M300.8 327.0 305.5 334.1 308.2 331.9 303.6 324.7Z" fill="#00bdff"/><path d="M155.1 392.0 159.8 392.9 162.5 391.1 157.8 390.3Z" fill="#00ff5c"/><path d="M339.2 383.7 343.8 385.7 346.6 384.0 341.9 382.0Z" fill="#00ff79"/><path d="M213.4 387.4 218.0 388.0 220.8 385.6 216.1 385.0Z" fill="#00ff6f"/><path d="M242.9 377.7 247.6 378.1 250.3 373.8 245.6 373.6Z" fill="#00ff97"/><path d="M282.2 315.6 286.9 315.5 289.6 313.2 284.9 313.3Z" fill="#0085ff"/><path d="M317.8 374.8 322.5 378.1 325.2 376.0 320.6 372.5Z" fill="#00ff99"/><path d="M313.2 371.0 317.8 374.8 320.6 372.5 315.9 368.4Z" fill="#00ffa6"/><path d="M379.9 390.0 384.6 391.3 387.3 389.7 382.7 388.5Z" fill="#00ff64"/><path d="M367.9 388.9 372.6 390.3 375.3 388.7 370.6 387.3Z" fill="#00ff68"/><path d="M392.0 390.9 396.6 392.1 399.4 390.6 394.7 389.4Z" fill="#00ff61"/><path d="M186.6 390.7 191.2 391.4 193.9 389.5 189.3 388.8Z" fill="#00ff62"/><path d="M322.5 378.1 327.1 380.9 329.9 378.9 325.2 376.0Z" fill="#00ff8e"/><path d="M355.9 387.5 360.5 389.1 363.3 387.5 358.6 385.9Z" fill="#00ff6d"/><path d="M167.1 391.9 171.8 392.8 174.5 391.0 169.9 390.2Z" fill="#00ff5e"/><path d="M206.0 388.9 210.6 389.6 213.4 387.4 208.7 386.7Z" fill="#00ff6a"/><path d="M308.5 366.6 313.2 371.0 315.9 368.4 311.3 363.5Z" fill="#00ffb7"/><path d="M253.0 368.8 257.7 369.0 260.4 362.9 255.7 363.0Z" fill="#00ffbc"/><path d="M255.7 363.0 260.4 362.9 263.1 356.0 258.5 356.5Z" fill="#00ffd4"/><path d="M147.7 392.9 152.4 393.7 155.1 392.0 150.5 391.2Z" fill="#00ff5b"/><path d="M343.8 385.7 348.5 387.5 351.2 385.8 346.6 384.0Z" fill="#00ff74"/><path d="M327.1 380.9 331.8 383.3 334.5 381.5 329.9 378.9Z" fill="#00ff85"/><path d="M272.1 324.6 276.8 322.6 279.5 318.6 274.8 320.7Z" fill="#009eff"/><path d="M250.3 373.8 254.9 374.2 257.7 369.0 253.0 368.8Z" fill="#00ffa9"/><path d="M258.5 356.5 263.1 356.0 265.8 348.5 261.2 349.4Z" fill="#00ffee"/><path d="M302.0 351.4 306.6 357.8 309.3 354.6 304.7 347.6Z" fill="#00ffee"/><path d="M232.8 384.0 237.4 384.6 240.2 381.3 235.5 380.9Z" fill="#00ff80"/><path d="M198.6 390.2 203.3 391.0 206.0 388.9 201.3 388.2Z" fill="#00ff66"/><path d="M179.2 391.8 183.8 392.6 186.6 390.7 181.9 389.9Z" fill="#00ff60"/><path d="M225.4 386.2 230.1 386.8 232.8 384.0 228.1 383.5Z" fill="#00ff77"/><path d="M296.2 321.3 300.8 327.0 303.6 324.7 298.9 319.0Z" fill="#00a2ff"/><path d="M240.2 381.3 244.8 381.9 247.6 378.1 242.9 377.7Z" fill="#00ff8b"/><path d="M303.9 361.4 308.5 366.6 311.3 363.5 306.6 357.8Z" fill="#00ffcb"/><path d="M159.8 392.9 164.4 393.7 167.1 391.9 162.5 391.1Z" fill="#00ff5c"/><path d="M300.0 340.4 304.7 347.6 307.4 344.5 302.8 336.9Z" fill="#00e9ff"/><path d="M372.6 390.3 377.2 391.6 379.9 390.0 375.3 388.7Z" fill="#00ff66"/><path d="M384.6 391.3 389.3 392.5 392.0 390.9 387.3 389.7Z" fill="#00ff62"/><path d="M286.9 315.5 291.5 317.4 294.2 315.1 289.6 313.2Z" fill="#0085ff"/><path d="M331.8 383.3 336.5 385.5 339.2 383.7 334.5 381.5Z" fill="#00ff7e"/><path d="M218.0 388.0 222.7 388.7 225.4 386.2 220.8 385.6Z" fill="#00ff70"/><path d="M360.5 389.1 365.2 390.5 367.9 388.9 363.3 387.5Z" fill="#00ff6a"/><path d="M396.6 392.1 401.3 393.3 404.0 391.7 399.4 390.6Z" fill="#00ff60"/><path d="M261.2 349.4 265.8 348.5 268.6 340.9 263.9 342.2Z" fill="#00f3ff"/><path d="M298.1 329.9 302.8 336.9 305.5 334.1 300.8 327.0Z" fill="#00c2ff"/><path d="M247.6 378.1 252.2 378.7 254.9 374.2 250.3 373.8Z" fill="#00ff99"/><path d="M348.5 387.5 353.1 389.2 355.9 387.5 351.2 385.8Z" fill="#00ff70"/><path d="M191.2 391.4 195.9 392.2 198.6 390.2 193.9 389.5Z" fill="#00ff63"/><path d="M291.5 317.4 296.2 321.3 298.9 319.0 294.2 315.1Z" fill="#008fff"/><path d="M269.4 329.5 274.0 327.6 276.8 322.6 272.1 324.6Z" fill="#00acff"/><path d="M279.5 318.6 284.1 318.6 286.9 315.5 282.2 315.6Z" fill="#008bff"/><path d="M171.8 392.8 176.5 393.6 179.2 391.8 174.5 391.0Z" fill="#00ff5e"/><path d="M210.6 389.6 215.3 390.3 218.0 388.0 213.4 387.4Z" fill="#00ff6b"/><path d="M310.5 373.9 315.1 377.3 317.8 374.8 313.2 371.0Z" fill="#00ffa1"/><path d="M263.9 342.2 268.6 340.9 271.3 333.8 266.6 335.5Z" fill="#00d8ff"/><path d="M315.1 377.3 319.8 380.3 322.5 378.1 317.8 374.8Z" fill="#00ff95"/><path d="M266.6 335.5 271.3 333.8 274.0 327.6 269.4 329.5Z" fill="#00c0ff"/><path d="M305.8 369.9 310.5 373.9 313.2 371.0 308.5 366.6Z" fill="#00ffb0"/><path d="M152.4 393.7 157.0 394.6 159.8 392.9 155.1 392.0Z" fill="#00ff5b"/><path d="M336.5 385.5 341.1 387.4 343.8 385.7 339.2 383.7Z" fill="#00ff78"/><path d="M257.7 369.0 262.3 369.7 265.0 363.5 260.4 362.9Z" fill="#00ffbf"/><path d="M299.2 355.7 303.9 361.4 306.6 357.8 302.0 351.4Z" fill="#00ffe3"/><path d="M260.4 362.9 265.0 363.5 267.8 356.4 263.1 356.0Z" fill="#00ffd8"/><path d="M319.8 380.3 324.4 383.0 327.1 380.9 322.5 378.1Z" fill="#00ff8b"/><path d="M254.9 374.2 259.6 375.0 262.3 369.7 257.7 369.0Z" fill="#00ffab"/><path d="M183.8 392.6 188.5 393.4 191.2 391.4 186.6 390.7Z" fill="#00ff61"/><path d="M203.3 391.0 207.9 391.7 210.6 389.6 206.0 388.9Z" fill="#00ff67"/><path d="M377.2 391.6 381.9 392.9 384.6 391.3 379.9 390.0Z" fill="#00ff64"/><path d="M237.4 384.6 242.1 385.2 244.8 381.9 240.2 381.3Z" fill="#00ff81"/><path d="M365.2 390.5 369.8 391.9 372.6 390.3 367.9 388.9Z" fill="#00ff68"/><path d="M301.2 365.3 305.8 369.9 308.5 366.6 303.9 361.4Z" fill="#00ffc2"/><path d="M389.3 392.5 393.9 393.7 396.6 392.1 392.0 390.9Z" fill="#00ff61"/><path d="M297.3 344.7 302.0 351.4 304.7 347.6 300.0 340.4Z" fill="#00f3ff"/><path d="M230.1 386.8 234.7 387.5 237.4 384.6 232.8 384.0Z" fill="#00ff79"/><path d="M164.4 393.7 169.1 394.5 171.8 392.8 167.1 391.9Z" fill="#00ff5d"/><path d="M244.8 381.9 249.5 382.6 252.2 378.7 247.6 378.1Z" fill="#00ff8d"/><path d="M353.1 389.2 357.8 390.7 360.5 389.1 355.9 387.5Z" fill="#00ff6d"/><path d="M263.1 356.0 267.8 356.4 270.5 348.8 265.8 348.5Z" fill="#00fff4"/><path d="M324.4 383.0 329.1 385.3 331.8 383.3 327.1 380.9Z" fill="#00ff83"/><path d="M222.7 388.7 227.3 389.4 230.1 386.8 225.4 386.2Z" fill="#00ff72"/><path d="M293.4 324.3 298.1 329.9 300.8 327.0 296.2 321.3Z" fill="#00a7ff"/><path d="M341.1 387.4 345.8 389.2 348.5 387.5 343.8 385.7Z" fill="#00ff74"/><path d="M295.4 333.7 300.0 340.4 302.8 336.9 298.1 329.9Z" fill="#00cbff"/><path d="M252.2 378.7 256.9 379.5 259.6 375.0 254.9 374.2Z" fill="#00ff9a"/><path d="M195.9 392.2 200.5 393.0 203.3 391.0 198.6 390.2Z" fill="#00ff64"/><path d="M284.1 318.6 288.8 320.5 291.5 317.4 286.9 315.5Z" fill="#008bff"/><path d="M276.8 322.6 281.4 322.5 284.1 318.6 279.5 318.6Z" fill="#0094ff"/><path d="M176.5 393.6 181.1 394.4 183.8 392.6 179.2 391.8Z" fill="#00ff5f"/><path d="M296.5 360.4 301.2 365.3 303.9 361.4 299.2 355.7Z" fill="#00ffd7"/><path d="M215.3 390.3 219.9 391.0 222.7 388.7 218.0 388.0Z" fill="#00ff6c"/><path d="M157.0 394.6 161.7 395.4 164.4 393.7 159.8 392.9Z" fill="#00ff5b"/><path d="M262.3 369.7 267.0 370.8 269.7 364.7 265.0 363.5Z" fill="#00ffbf"/><path d="M288.8 320.5 293.4 324.3 296.2 321.3 291.5 317.4Z" fill="#0095ff"/><path d="M265.8 348.5 270.5 348.8 273.2 341.1 268.6 340.9Z" fill="#00edff"/><path d="M294.6 349.7 299.2 355.7 302.0 351.4 297.3 344.7Z" fill="#00fffd"/><path d="M329.1 385.3 333.7 387.4 336.5 385.5 331.8 383.3Z" fill="#00ff7d"/><path d="M303.1 373.3 307.7 376.8 310.5 373.9 305.8 369.9Z" fill="#00ffa8"/><path d="M369.8 391.9 374.5 393.2 377.2 391.6 372.6 390.3Z" fill="#00ff66"/><path d="M265.0 363.5 269.7 364.7 272.4 357.8 267.8 356.4Z" fill="#00ffd8"/><path d="M307.7 376.8 312.4 379.9 315.1 377.3 310.5 373.9Z" fill="#00ff9c"/><path d="M381.9 392.9 386.5 394.1 389.3 392.5 384.6 391.3Z" fill="#00ff62"/><path d="M357.8 390.7 362.5 392.1 365.2 390.5 360.5 389.1Z" fill="#00ff6a"/><path d="M259.6 375.0 264.2 376.0 267.0 370.8 262.3 369.7Z" fill="#00ffab"/><path d="M393.9 393.7 398.6 394.8 401.3 393.3 396.6 392.1Z" fill="#00ff60"/><path d="M298.4 369.4 303.1 373.3 305.8 369.9 301.2 365.3Z" fill="#00ffb7"/><path d="M188.5 393.4 193.1 394.2 195.9 392.2 191.2 391.4Z" fill="#00ff61"/><path d="M207.9 391.7 212.6 392.5 215.3 390.3 210.6 389.6Z" fill="#00ff68"/><path d="M312.4 379.9 317.0 382.7 319.8 380.3 315.1 377.3Z" fill="#00ff91"/><path d="M345.8 389.2 350.4 390.8 353.1 389.2 348.5 387.5Z" fill="#00ff70"/><path d="M242.1 385.2 246.7 386.0 249.5 382.6 244.8 381.9Z" fill="#00ff83"/><path d="M274.0 327.6 278.7 327.6 281.4 322.5 276.8 322.6Z" fill="#00a3ff"/><path d="M169.1 394.5 173.7 395.4 176.5 393.6 171.8 392.8Z" fill="#00ff5d"/><path d="M234.7 387.5 239.4 388.2 242.1 385.2 237.4 384.6Z" fill="#00ff7a"/><path d="M268.6 340.9 273.2 341.1 276.0 333.9 271.3 333.8Z" fill="#00d0ff"/><path d="M249.5 382.6 254.1 383.4 256.9 379.5 252.2 378.7Z" fill="#00ff8d"/><path d="M292.6 338.4 297.3 344.7 300.0 340.4 295.4 333.7Z" fill="#00d7ff"/><path d="M267.8 356.4 272.4 357.8 275.2 350.3 270.5 348.8Z" fill="#00fff4"/><path d="M293.8 365.2 298.4 369.4 301.2 365.3 296.5 360.4Z" fill="#00ffc9"/><path d="M291.8 355.2 296.5 360.4 299.2 355.7 294.6 349.7Z" fill="#00ffed"/><path d="M271.3 333.8 276.0 333.9 278.7 327.6 274.0 327.6Z" fill="#00b7ff"/><path d="M290.7 328.2 295.4 333.7 298.1 329.9 293.4 324.3Z" fill="#00b0ff"/><path d="M227.3 389.4 232.0 390.1 234.7 387.5 230.1 386.8Z" fill="#00ff73"/><path d="M333.7 387.4 338.4 389.2 341.1 387.4 336.5 385.5Z" fill="#00ff77"/><path d="M317.0 382.7 321.7 385.1 324.4 383.0 319.8 380.3Z" fill="#00ff88"/><path d="M256.9 379.5 261.5 380.5 264.2 376.0 259.6 375.0Z" fill="#00ff9a"/><path d="M281.4 322.5 286.1 324.4 288.8 320.5 284.1 318.6Z" fill="#0094ff"/><path d="M200.5 393.0 205.2 393.8 207.9 391.7 203.3 391.0Z" fill="#00ff65"/><path d="M267.0 370.8 271.6 372.4 274.4 366.6 269.7 364.7Z" fill="#00ffbc"/><path d="M269.7 364.7 274.4 366.6 277.1 360.1 272.4 357.8Z" fill="#00ffd4"/><path d="M181.1 394.4 185.8 395.2 188.5 393.4 183.8 392.6Z" fill="#00ff5f"/><path d="M289.1 360.9 293.8 365.2 296.5 360.4 291.8 355.2Z" fill="#00ffdb"/><path d="M219.9 391.0 224.6 391.8 227.3 389.4 222.7 388.7Z" fill="#00ff6d"/><path d="M289.9 343.9 294.6 349.7 297.3 344.7 292.6 338.4Z" fill="#00e7ff"/><path d="M374.5 393.2 379.1 394.5 381.9 392.9 377.2 391.6Z" fill="#00ff64"/><path d="M362.5 392.1 367.1 393.5 369.8 391.9 365.2 390.5Z" fill="#00ff67"/><path d="M270.5 348.8 275.2 350.3 277.9 342.8 273.2 341.1Z" fill="#00edff"/><path d="M161.7 395.4 166.3 396.3 169.1 394.5 164.4 393.7Z" fill="#00ff5c"/><path d="M386.5 394.1 391.2 395.3 393.9 393.7 389.3 392.5Z" fill="#00ff61"/><path d="M286.1 324.4 290.7 328.2 293.4 324.3 288.8 320.5Z" fill="#009eff"/><path d="M264.2 376.0 268.9 377.4 271.6 372.4 267.0 370.8Z" fill="#00ffa9"/><path d="M350.4 390.8 355.1 392.4 357.8 390.7 353.1 389.2Z" fill="#00ff6c"/><path d="M272.4 357.8 277.1 360.1 279.8 353.1 275.2 350.3Z" fill="#00ffee"/><path d="M321.7 385.1 326.3 387.3 329.1 385.3 324.4 383.0Z" fill="#00ff81"/><path d="M295.7 373.5 300.3 376.8 303.1 373.3 298.4 369.4Z" fill="#00ffad"/><path d="M291.0 370.0 295.7 373.5 298.4 369.4 293.8 365.2Z" fill="#00ffba"/><path d="M300.3 376.8 305.0 379.9 307.7 376.8 303.1 373.3Z" fill="#00ffa0"/><path d="M287.2 350.2 291.8 355.2 294.6 349.7 289.9 343.9Z" fill="#00fbff"/><path d="M274.4 366.6 279.0 369.0 281.7 363.1 277.1 360.1Z" fill="#00ffcc"/><path d="M286.4 366.5 291.0 370.0 293.8 365.2 289.1 360.9Z" fill="#00ffc9"/><path d="M193.1 394.2 197.8 395.0 200.5 393.0 195.9 392.2Z" fill="#00ff62"/><path d="M338.4 389.2 343.0 390.9 345.8 389.2 341.1 387.4Z" fill="#00ff73"/><path d="M284.5 356.7 289.1 360.9 291.8 355.2 287.2 350.2Z" fill="#00ffee"/><path d="M288.0 333.1 292.6 338.4 295.4 333.7 290.7 328.2Z" fill="#00beff"/><path d="M212.6 392.5 217.2 393.3 219.9 391.0 215.3 390.3Z" fill="#00ff69"/><path d="M277.1 360.1 281.7 363.1 284.5 356.7 279.8 353.1Z" fill="#00ffe5"/><path d="M281.7 363.1 286.4 366.5 289.1 360.9 284.5 356.7Z" fill="#00ffd8"/><path d="M278.7 327.6 283.3 329.5 286.1 324.4 281.4 322.5Z" fill="#00a3ff"/><path d="M305.0 379.9 309.7 382.6 312.4 379.9 307.7 376.8Z" fill="#00ff95"/><path d="M271.6 372.4 276.3 374.4 279.0 369.0 274.4 366.6Z" fill="#00ffb7"/><path d="M246.7 386.0 251.4 386.8 254.1 383.4 249.5 382.6Z" fill="#00ff83"/><path d="M173.7 395.4 178.4 396.2 181.1 394.4 176.5 393.6Z" fill="#00ff5e"/><path d="M273.2 341.1 277.9 342.8 280.6 335.6 276.0 333.9Z" fill="#00d0ff"/><path d="M254.1 383.4 258.8 384.4 261.5 380.5 256.9 379.5Z" fill="#00ff8d"/><path d="M239.4 388.2 244.0 389.0 246.7 386.0 242.1 385.2Z" fill="#00ff7b"/><path d="M275.2 350.3 279.8 353.1 282.5 345.9 277.9 342.8Z" fill="#00f3ff"/><path d="M279.0 369.0 283.7 371.8 286.4 366.5 281.7 363.1Z" fill="#00ffc3"/><path d="M279.8 353.1 284.5 356.7 287.2 350.2 282.5 345.9Z" fill="#00fffe"/><path d="M261.5 380.5 266.2 381.8 268.9 377.4 264.2 376.0Z" fill="#00ff99"/><path d="M276.0 333.9 280.6 335.6 283.3 329.5 278.7 327.6Z" fill="#00b7ff"/><path d="M326.3 387.3 331.0 389.3 333.7 387.4 329.1 385.3Z" fill="#00ff7b"/><path d="M283.3 329.5 288.0 333.1 290.7 328.2 286.1 324.4Z" fill="#00acff"/><path d="M285.3 339.1 289.9 343.9 292.6 338.4 288.0 333.1Z" fill="#00d0ff"/><path d="M232.0 390.1 236.6 390.9 239.4 388.2 234.7 387.5Z" fill="#00ff74"/><path d="M309.7 382.6 314.3 385.1 317.0 382.7 312.4 379.9Z" fill="#00ff8c"/><path d="M283.7 371.8 288.3 374.7 291.0 370.0 286.4 366.5Z" fill="#00ffb8"/><path d="M282.5 345.9 287.2 350.2 289.9 343.9 285.3 339.1Z" fill="#00e7ff"/><path d="M268.9 377.4 273.5 379.1 276.3 374.4 271.6 372.4Z" fill="#00ffa5"/><path d="M205.2 393.8 209.8 394.6 212.6 392.5 207.9 391.7Z" fill="#00ff65"/><path d="M367.1 393.5 371.8 394.8 374.5 393.2 369.8 391.9Z" fill="#00ff65"/><path d="M277.9 342.8 282.5 345.9 285.3 339.1 280.6 335.6Z" fill="#00d8ff"/><path d="M379.1 394.5 383.8 395.7 386.5 394.1 381.9 392.9Z" fill="#00ff62"/><path d="M185.8 395.2 190.4 396.0 193.1 394.2 188.5 393.4Z" fill="#00ff60"/><path d="M288.3 374.7 293.0 377.5 295.7 373.5 291.0 370.0Z" fill="#00ffad"/><path d="M276.3 374.4 280.9 376.6 283.7 371.8 279.0 369.0Z" fill="#00ffb0"/><path d="M355.1 392.4 359.7 393.8 362.5 392.1 357.8 390.7Z" fill="#00ff6a"/><path d="M391.2 395.3 395.8 396.4 398.6 394.8 393.9 393.7Z" fill="#00ff60"/><path d="M280.6 335.6 285.3 339.1 288.0 333.1 283.3 329.5Z" fill="#00c0ff"/><path d="M224.6 391.8 229.3 392.6 232.0 390.1 227.3 389.4Z" fill="#00ff6e"/><path d="M343.0 390.9 347.7 392.5 350.4 390.8 345.8 389.2Z" fill="#00ff6f"/><path d="M166.3 396.3 171.0 397.1 173.7 395.4 169.1 394.5Z" fill="#00ff5c"/><path d="M293.0 377.5 297.6 380.3 300.3 376.8 295.7 373.5Z" fill="#00ffa2"/><path d="M314.3 385.1 319.0 387.3 321.7 385.1 317.0 382.7Z" fill="#00ff85"/><path d="M280.9 376.6 285.6 378.9 288.3 374.7 283.7 371.8Z" fill="#00ffa8"/><path d="M331.0 389.3 335.7 391.1 338.4 389.2 333.7 387.4Z" fill="#00ff76"/><path d="M297.6 380.3 302.3 382.9 305.0 379.9 300.3 376.8Z" fill="#00ff98"/><path d="M197.8 395.0 202.5 395.8 205.2 393.8 200.5 393.0Z" fill="#00ff63"/><path d="M258.8 384.4 263.4 385.5 266.2 381.8 261.5 380.5Z" fill="#00ff8d"/><path d="M217.2 393.3 221.9 394.1 224.6 391.8 219.9 391.0Z" fill="#00ff6a"/><path d="M266.2 381.8 270.8 383.2 273.5 379.1 268.9 377.4Z" fill="#00ff97"/><path d="M251.4 386.8 256.1 387.8 258.8 384.4 254.1 383.4Z" fill="#00ff83"/><path d="M273.5 379.1 278.2 380.9 280.9 376.6 276.3 374.4Z" fill="#00ffa0"/><path d="M178.4 396.2 183.0 397.0 185.8 395.2 181.1 394.4Z" fill="#00ff5e"/><path d="M244.0 389.0 248.7 389.9 251.4 386.8 246.7 386.0Z" fill="#00ff7b"/><path d="M285.6 378.9 290.2 381.3 293.0 377.5 288.3 374.7Z" fill="#00ffa0"/><path d="M319.0 387.3 323.6 389.3 326.3 387.3 321.7 385.1Z" fill="#00ff7e"/><path d="M302.3 382.9 306.9 385.3 309.7 382.6 305.0 379.9Z" fill="#00ff8f"/><path d="M371.8 394.8 376.4 396.1 379.1 394.5 374.5 393.2Z" fill="#00ff64"/><path d="M359.7 393.8 364.4 395.1 367.1 393.5 362.5 392.1Z" fill="#00ff67"/><path d="M236.6 390.9 241.3 391.7 244.0 389.0 239.4 388.2Z" fill="#00ff74"/><path d="M383.8 395.7 388.5 396.8 391.2 395.3 386.5 394.1Z" fill="#00ff61"/><path d="M347.7 392.5 352.3 394.0 355.1 392.4 350.4 390.8Z" fill="#00ff6c"/><path d="M209.8 394.6 214.5 395.4 217.2 393.3 212.6 392.5Z" fill="#00ff66"/><path d="M190.4 396.0 195.1 396.9 197.8 395.0 193.1 394.2Z" fill="#00ff60"/><path d="M335.7 391.1 340.3 392.7 343.0 390.9 338.4 389.2Z" fill="#00ff72"/><path d="M278.2 380.9 282.9 382.8 285.6 378.9 280.9 376.6Z" fill="#00ff9b"/><path d="M290.2 381.3 294.9 383.6 297.6 380.3 293.0 377.5Z" fill="#00ff98"/><path d="M229.3 392.6 233.9 393.4 236.6 390.9 232.0 390.1Z" fill="#00ff6f"/><path d="M306.9 385.3 311.6 387.5 314.3 385.1 309.7 382.6Z" fill="#00ff87"/><path d="M171.0 397.1 175.7 398.0 178.4 396.2 173.7 395.4Z" fill="#00ff5c"/><path d="M270.8 383.2 275.5 384.7 278.2 380.9 273.5 379.1Z" fill="#00ff93"/><path d="M323.6 389.3 328.3 391.2 331.0 389.3 326.3 387.3Z" fill="#00ff79"/><path d="M263.4 385.5 268.1 386.8 270.8 383.2 266.2 381.8Z" fill="#00ff8b"/><path d="M256.1 387.8 260.7 388.9 263.4 385.5 258.8 384.4Z" fill="#00ff83"/><path d="M202.5 395.8 207.1 396.6 209.8 394.6 205.2 393.8Z" fill="#00ff63"/><path d="M294.9 383.6 299.5 385.9 302.3 382.9 297.6 380.3Z" fill="#00ff90"/><path d="M221.9 394.1 226.5 394.9 229.3 392.6 224.6 391.8Z" fill="#00ff6a"/><path d="M183.0 397.0 187.7 397.9 190.4 396.0 185.8 395.2Z" fill="#00ff5e"/><path d="M282.9 382.8 287.5 384.8 290.2 381.3 285.6 378.9Z" fill="#00ff94"/><path d="M248.7 389.9 253.3 390.8 256.1 387.8 251.4 386.8Z" fill="#00ff7b"/><path d="M364.4 395.1 369.0 396.4 371.8 394.8 367.1 393.5Z" fill="#00ff65"/><path d="M311.6 387.5 316.2 389.6 319.0 387.3 314.3 385.1Z" fill="#00ff81"/><path d="M376.4 396.1 381.1 397.3 383.8 395.7 379.1 394.5Z" fill="#00ff62"/><path d="M352.3 394.0 357.0 395.4 359.7 393.8 355.1 392.4Z" fill="#00ff69"/><path d="M388.5 396.8 393.1 398.0 395.8 396.4 391.2 395.3Z" fill="#00ff60"/><path d="M340.3 392.7 345.0 394.3 347.7 392.5 343.0 390.9Z" fill="#00ff6e"/><path d="M241.3 391.7 245.9 392.6 248.7 389.9 244.0 389.0Z" fill="#00ff75"/><path d="M275.5 384.7 280.1 386.4 282.9 382.8 278.2 380.9Z" fill="#00ff8f"/><path d="M328.3 391.2 332.9 392.9 335.7 391.1 331.0 389.3Z" fill="#00ff74"/><path d="M299.5 385.9 304.2 388.0 306.9 385.3 302.3 382.9Z" fill="#00ff89"/><path d="M214.5 395.4 219.1 396.2 221.9 394.1 217.2 393.3Z" fill="#00ff67"/><path d="M195.1 396.9 199.7 397.7 202.5 395.8 197.8 395.0Z" fill="#00ff61"/><path d="M287.5 384.8 292.2 386.8 294.9 383.6 290.2 381.3Z" fill="#00ff8e"/><path d="M268.1 386.8 272.7 388.2 275.5 384.7 270.8 383.2Z" fill="#00ff88"/><path d="M233.9 393.4 238.6 394.2 241.3 391.7 236.6 390.9Z" fill="#00ff6f"/><path d="M175.7 398.0 180.3 398.8 183.0 397.0 178.4 396.2Z" fill="#00ff5d"/><path d="M316.2 389.6 320.9 391.4 323.6 389.3 319.0 387.3Z" fill="#00ff7b"/><path d="M260.7 388.9 265.4 390.0 268.1 386.8 263.4 385.5Z" fill="#00ff81"/><path d="M357.0 395.4 361.7 396.8 364.4 395.1 359.7 393.8Z" fill="#00ff67"/><path d="M207.1 396.6 211.8 397.4 214.5 395.4 209.8 394.6Z" fill="#00ff64"/><path d="M369.0 396.4 373.7 397.7 376.4 396.1 371.8 394.8Z" fill="#00ff63"/><path d="M304.2 388.0 308.9 390.0 311.6 387.5 306.9 385.3Z" fill="#00ff83"/><path d="M345.0 394.3 349.6 395.7 352.3 394.0 347.7 392.5Z" fill="#00ff6b"/><path d="M381.1 397.3 385.7 398.4 388.5 396.8 383.8 395.7Z" fill="#00ff61"/><path d="M226.5 394.9 231.2 395.7 233.9 393.4 229.3 392.6Z" fill="#00ff6b"/><path d="M253.3 390.8 258.0 391.8 260.7 388.9 256.1 387.8Z" fill="#00ff7b"/><path d="M280.1 386.4 284.8 388.1 287.5 384.8 282.9 382.8Z" fill="#00ff8b"/><path d="M187.7 397.9 192.3 398.7 195.1 396.9 190.4 396.0Z" fill="#00ff5f"/><path d="M332.9 392.9 337.6 394.5 340.3 392.7 335.7 391.1Z" fill="#00ff70"/><path d="M292.2 386.8 296.8 388.7 299.5 385.9 294.9 383.6Z" fill="#00ff88"/><path d="M245.9 392.6 250.6 393.6 253.3 390.8 248.7 389.9Z" fill="#00ff75"/><path d="M320.9 391.4 325.5 393.2 328.3 391.2 323.6 389.3Z" fill="#00ff77"/><path d="M272.7 388.2 277.4 389.6 280.1 386.4 275.5 384.7Z" fill="#00ff86"/><path d="M219.1 396.2 223.8 397.1 226.5 394.9 221.9 394.1Z" fill="#00ff67"/><path d="M199.7 397.7 204.4 398.5 207.1 396.6 202.5 395.8Z" fill="#00ff61"/><path d="M308.9 390.0 313.5 391.8 316.2 389.6 311.6 387.5Z" fill="#00ff7d"/><path d="M238.6 394.2 243.2 395.1 245.9 392.6 241.3 391.7Z" fill="#00ff6f"/><path d="M180.3 398.8 185.0 399.7 187.7 397.9 183.0 397.0Z" fill="#00ff5d"/><path d="M265.4 390.0 270.0 391.3 272.7 388.2 268.1 386.8Z" fill="#00ff80"/><path d="M284.8 388.1 289.4 389.8 292.2 386.8 287.5 384.8Z" fill="#00ff86"/><path d="M296.8 388.7 301.5 390.6 304.2 388.0 299.5 385.9Z" fill="#00ff83"/><path d="M361.7 396.8 366.3 398.0 369.0 396.4 364.4 395.1Z" fill="#00ff65"/><path d="M349.6 395.7 354.3 397.1 357.0 395.4 352.3 394.0Z" fill="#00ff69"/><path d="M373.7 397.7 378.3 398.8 381.1 397.3 376.4 396.1Z" fill="#00ff62"/><path d="M337.6 394.5 342.2 396.0 345.0 394.3 340.3 392.7Z" fill="#00ff6d"/><path d="M385.7 398.4 390.4 399.6 393.1 398.0 388.5 396.8Z" fill="#00ff5f"/><path d="M258.0 391.8 262.6 392.9 265.4 390.0 260.7 388.9Z" fill="#00ff7a"/><path d="M211.8 397.4 216.4 398.3 219.1 396.2 214.5 395.4Z" fill="#00ff64"/><path d="M325.5 393.2 330.2 394.8 332.9 392.9 328.3 391.2Z" fill="#00ff73"/><path d="M231.2 395.7 235.8 396.6 238.6 394.2 233.9 393.4Z" fill="#00ff6b"/><path d="M192.3 398.7 197.0 399.6 199.7 397.7 195.1 396.9Z" fill="#00ff5f"/><path d="M277.4 389.6 282.1 391.1 284.8 388.1 280.1 386.4Z" fill="#00ff82"/><path d="M313.5 391.8 318.2 393.6 320.9 391.4 316.2 389.6Z" fill="#00ff78"/><path d="M250.6 393.6 255.3 394.5 258.0 391.8 253.3 390.8Z" fill="#00ff74"/><path d="M301.5 390.6 306.1 392.4 308.9 390.0 304.2 388.0Z" fill="#00ff7e"/><path d="M289.4 389.8 294.1 391.5 296.8 388.7 292.2 386.8Z" fill="#00ff82"/><path d="M223.8 397.1 228.5 397.9 231.2 395.7 226.5 394.9Z" fill="#00ff67"/><path d="M204.4 398.5 209.0 399.4 211.8 397.4 207.1 396.6Z" fill="#00ff61"/><path d="M270.0 391.3 274.7 392.6 277.4 389.6 272.7 388.2Z" fill="#00ff7e"/><path d="M354.3 397.1 358.9 398.4 361.7 396.8 357.0 395.4Z" fill="#00ff66"/><path d="M243.2 395.1 247.9 396.1 250.6 393.6 245.9 392.6Z" fill="#00ff6f"/><path d="M366.3 398.0 371.0 399.3 373.7 397.7 369.0 396.4Z" fill="#00ff63"/><path d="M342.2 396.0 346.9 397.4 349.6 395.7 345.0 394.3Z" fill="#00ff6a"/><path d="M185.0 399.7 189.6 400.5 192.3 398.7 187.7 397.9Z" fill="#00ff5d"/><path d="M378.3 398.8 383.0 400.0 385.7 398.4 381.1 397.3Z" fill="#00ff61"/><path d="M330.2 394.8 334.9 396.4 337.6 394.5 332.9 392.9Z" fill="#00ff6f"/><path d="M262.6 392.9 267.3 394.1 270.0 391.3 265.4 390.0Z" fill="#00ff79"/><path d="M318.2 393.6 322.8 395.2 325.5 393.2 320.9 391.4Z" fill="#00ff74"/><path d="M282.1 391.1 286.7 392.6 289.4 389.8 284.8 388.1Z" fill="#00ff7f"/><path d="M306.1 392.4 310.8 394.1 313.5 391.8 308.9 390.0Z" fill="#00ff79"/><path d="M216.4 398.3 221.1 399.1 223.8 397.1 219.1 396.2Z" fill="#00ff64"/><path d="M294.1 391.5 298.7 393.2 301.5 390.6 296.8 388.7Z" fill="#00ff7d"/><path d="M235.8 396.6 240.5 397.5 243.2 395.1 238.6 394.2Z" fill="#00ff6b"/><path d="M197.0 399.6 201.7 400.4 204.4 398.5 199.7 397.7Z" fill="#00ff5f"/><path d="M255.3 394.5 259.9 395.6 262.6 392.9 258.0 391.8Z" fill="#00ff74"/><path d="M274.7 392.6 279.3 393.9 282.1 391.1 277.4 389.6Z" fill="#00ff7b"/><path d="M346.9 397.4 351.5 398.8 354.3 397.1 349.6 395.7Z" fill="#00ff68"/><path d="M358.9 398.4 363.6 399.7 366.3 398.0 361.7 396.8Z" fill="#00ff65"/><path d="M228.5 397.9 233.1 398.8 235.8 396.6 231.2 395.7Z" fill="#00ff68"/><path d="M334.9 396.4 339.5 397.8 342.2 396.0 337.6 394.5Z" fill="#00ff6c"/><path d="M209.0 399.4 213.7 400.2 216.4 398.3 211.8 397.4Z" fill="#00ff62"/><path d="M371.0 399.3 375.6 400.5 378.3 398.8 373.7 397.7Z" fill="#00ff62"/><path d="M322.8 395.2 327.5 396.7 330.2 394.8 325.5 393.2Z" fill="#00ff71"/><path d="M286.7 392.6 291.4 394.1 294.1 391.5 289.4 389.8Z" fill="#00ff7b"/><path d="M247.9 396.1 252.5 397.0 255.3 394.5 250.6 393.6Z" fill="#00ff6f"/><path d="M383.0 400.0 387.6 401.1 390.4 399.6 385.7 398.4Z" fill="#00ff5f"/><path d="M310.8 394.1 315.4 395.7 318.2 393.6 313.5 391.8Z" fill="#00ff75"/><path d="M189.6 400.5 194.3 401.4 197.0 399.6 192.3 398.7Z" fill="#00ff5e"/><path d="M298.7 393.2 303.4 394.8 306.1 392.4 301.5 390.6Z" fill="#00ff79"/><path d="M267.3 394.1 271.9 395.3 274.7 392.6 270.0 391.3Z" fill="#00ff77"/><path d="M221.1 399.1 225.7 400.0 228.5 397.9 223.8 397.1Z" fill="#00ff65"/><path d="M240.5 397.5 245.1 398.4 247.9 396.1 243.2 395.1Z" fill="#00ff6b"/><path d="M201.7 400.4 206.3 401.3 209.0 399.4 204.4 398.5Z" fill="#00ff60"/><path d="M279.3 393.9 284.0 395.3 286.7 392.6 282.1 391.1Z" fill="#00ff79"/><path d="M259.9 395.6 264.6 396.7 267.3 394.1 262.6 392.9Z" fill="#00ff73"/><path d="M351.5 398.8 356.2 400.1 358.9 398.4 354.3 397.1Z" fill="#00ff66"/><path d="M339.5 397.8 344.2 399.2 346.9 397.4 342.2 396.0Z" fill="#00ff69"/><path d="M291.4 394.1 296.0 395.6 298.7 393.2 294.1 391.5Z" fill="#00ff78"/><path d="M327.5 396.7 332.1 398.2 334.9 396.4 330.2 394.8Z" fill="#00ff6d"/><path d="M363.6 399.7 368.2 400.9 371.0 399.3 366.3 398.0Z" fill="#00ff63"/><path d="M315.4 395.7 320.1 397.2 322.8 395.2 318.2 393.6Z" fill="#00ff72"/><path d="M303.4 394.8 308.1 396.3 310.8 394.1 306.1 392.4Z" fill="#00ff76"/><path d="M375.6 400.5 380.3 401.6 383.0 400.0 378.3 398.8Z" fill="#00ff60"/><path d="M233.1 398.8 237.8 399.7 240.5 397.5 235.8 396.6Z" fill="#00ff68"/><path d="M213.7 400.2 218.3 401.1 221.1 399.1 216.4 398.3Z" fill="#00ff62"/><path d="M252.5 397.0 257.2 398.0 259.9 395.6 255.3 394.5Z" fill="#00ff6f"/><path d="M271.9 395.3 276.6 396.5 279.3 393.9 274.7 392.6Z" fill="#00ff75"/><path d="M194.3 401.4 198.9 402.3 201.7 400.4 197.0 399.6Z" fill="#00ff5e"/><path d="M284.0 395.3 288.6 396.6 291.4 394.1 286.7 392.6Z" fill="#00ff76"/><path d="M225.7 400.0 230.4 400.9 233.1 398.8 228.5 397.9Z" fill="#00ff65"/><path d="M245.1 398.4 249.8 399.4 252.5 397.0 247.9 396.1Z" fill="#00ff6b"/><path d="M264.6 396.7 269.2 397.8 271.9 395.3 267.3 394.1Z" fill="#00ff72"/><path d="M296.0 395.6 300.7 397.1 303.4 394.8 298.7 393.2Z" fill="#00ff75"/><path d="M206.3 401.3 211.0 402.2 213.7 400.2 209.0 399.4Z" fill="#00ff60"/><path d="M344.2 399.2 348.8 400.5 351.5 398.8 346.9 397.4Z" fill="#00ff67"/><path d="M332.1 398.2 336.8 399.6 339.5 397.8 334.9 396.4Z" fill="#00ff6b"/><path d="M320.1 397.2 324.7 398.7 327.5 396.7 322.8 395.2Z" fill="#00ff6f"/><path d="M308.1 396.3 312.7 397.8 315.4 395.7 310.8 394.1Z" fill="#00ff72"/><path d="M356.2 400.1 360.9 401.3 363.6 399.7 358.9 398.4Z" fill="#00ff64"/><path d="M368.2 400.9 372.9 402.1 375.6 400.5 371.0 399.3Z" fill="#00ff61"/><path d="M380.3 401.6 384.9 402.7 387.6 401.1 383.0 400.0Z" fill="#00ff5f"/><path d="M276.6 396.5 281.3 397.7 284.0 395.3 279.3 393.9Z" fill="#00ff73"/><path d="M237.8 399.7 242.4 400.6 245.1 398.4 240.5 397.5Z" fill="#00ff68"/><path d="M257.2 398.0 261.8 399.1 264.6 396.7 259.9 395.6Z" fill="#00ff6e"/><path d="M218.3 401.1 223.0 402.0 225.7 400.0 221.1 399.1Z" fill="#00ff62"/><path d="M198.9 402.3 203.6 403.1 206.3 401.3 201.7 400.4Z" fill="#00ff5e"/><path d="M288.6 396.6 293.3 398.0 296.0 395.6 291.4 394.1Z" fill="#00ff74"/><path d="M300.7 397.1 305.3 398.5 308.1 396.3 303.4 394.8Z" fill="#00ff72"/><path d="M312.7 397.8 317.4 399.2 320.1 397.2 315.4 395.7Z" fill="#00ff6f"/><path d="M324.7 398.7 329.4 400.1 332.1 398.2 327.5 396.7Z" fill="#00ff6c"/><path d="M269.2 397.8 273.9 398.9 276.6 396.5 271.9 395.3Z" fill="#00ff70"/><path d="M336.8 399.6 341.4 400.9 344.2 399.2 339.5 397.8Z" fill="#00ff68"/><path d="M249.8 399.4 254.5 400.3 257.2 398.0 252.5 397.0Z" fill="#00ff6b"/><path d="M348.8 400.5 353.5 401.8 356.2 400.1 351.5 398.8Z" fill="#00ff65"/><path d="M230.4 400.9 235.0 401.8 237.8 399.7 233.1 398.8Z" fill="#00ff65"/><path d="M360.9 401.3 365.5 402.5 368.2 400.9 363.6 399.7Z" fill="#00ff62"/><path d="M211.0 402.2 215.6 403.0 218.3 401.1 213.7 400.2Z" fill="#00ff60"/><path d="M372.9 402.1 377.5 403.2 380.3 401.6 375.6 400.5Z" fill="#00ff60"/><path d="M281.3 397.7 285.9 399.0 288.6 396.6 284.0 395.3Z" fill="#00ff72"/><path d="M261.8 399.1 266.5 400.1 269.2 397.8 264.6 396.7Z" fill="#00ff6d"/><path d="M242.4 400.6 247.1 401.5 249.8 399.4 245.1 398.4Z" fill="#00ff68"/><path d="M293.3 398.0 297.9 399.3 300.7 397.1 296.0 395.6Z" fill="#00ff71"/><path d="M223.0 402.0 227.7 402.9 230.4 400.9 225.7 400.0Z" fill="#00ff62"/><path d="M305.3 398.5 310.0 399.9 312.7 397.8 308.1 396.3Z" fill="#00ff6f"/><path d="M203.6 403.1 208.2 404.0 211.0 402.2 206.3 401.3Z" fill="#00ff5e"/><path d="M317.4 399.2 322.0 400.6 324.7 398.7 320.1 397.2Z" fill="#00ff6d"/><path d="M329.4 400.1 334.0 401.4 336.8 399.6 332.1 398.2Z" fill="#00ff69"/><path d="M341.4 400.9 346.1 402.2 348.8 400.5 344.2 399.2Z" fill="#00ff66"/><path d="M273.9 398.9 278.5 400.1 281.3 397.7 276.6 396.5Z" fill="#00ff6f"/><path d="M353.5 401.8 358.1 403.0 360.9 401.3 356.2 400.1Z" fill="#00ff64"/><path d="M365.5 402.5 370.2 403.7 372.9 402.1 368.2 400.9Z" fill="#00ff61"/><path d="M254.5 400.3 259.1 401.3 261.8 399.1 257.2 398.0Z" fill="#00ff6a"/><path d="M235.0 401.8 239.7 402.7 242.4 400.6 237.8 399.7Z" fill="#00ff65"/><path d="M377.5 403.2 382.2 404.3 384.9 402.7 380.3 401.6Z" fill="#00ff5f"/><path d="M215.6 403.0 220.3 403.9 223.0 402.0 218.3 401.1Z" fill="#00ff60"/><path d="M285.9 399.0 290.6 400.3 293.3 398.0 288.6 396.6Z" fill="#00ff70"/><path d="M297.9 399.3 302.6 400.7 305.3 398.5 300.7 397.1Z" fill="#00ff6f"/><path d="M266.5 400.1 271.1 401.2 273.9 398.9 269.2 397.8Z" fill="#00ff6c"/><path d="M247.1 401.5 251.7 402.5 254.5 400.3 249.8 399.4Z" fill="#00ff67"/><path d="M310.0 399.9 314.6 401.2 317.4 399.2 312.7 397.8Z" fill="#00ff6d"/><path d="M322.0 400.6 326.7 402.0 329.4 400.1 324.7 398.7Z" fill="#00ff6a"/><path d="M227.7 402.9 232.3 403.8 235.0 401.8 230.4 400.9Z" fill="#00ff62"/><path d="M334.0 401.4 338.7 402.7 341.4 400.9 336.8 399.6Z" fill="#00ff67"/><path d="M346.1 402.2 350.7 403.5 353.5 401.8 348.8 400.5Z" fill="#00ff65"/><path d="M208.2 404.0 212.9 404.9 215.6 403.0 211.0 402.2Z" fill="#00ff5f"/><path d="M278.5 400.1 283.2 401.3 285.9 399.0 281.3 397.7Z" fill="#00ff6e"/><path d="M358.1 403.0 362.8 404.2 365.5 402.5 360.9 401.3Z" fill="#00ff62"/><path d="M370.2 403.7 374.8 404.8 377.5 403.2 372.9 402.1Z" fill="#00ff60"/><path d="M259.1 401.3 263.8 402.4 266.5 400.1 261.8 399.1Z" fill="#00ff6a"/><path d="M239.7 402.7 244.3 403.6 247.1 401.5 242.4 400.6Z" fill="#00ff65"/><path d="M290.6 400.3 295.2 401.5 297.9 399.3 293.3 398.0Z" fill="#00ff6e"/><path d="M220.3 403.9 224.9 404.8 227.7 402.9 223.0 402.0Z" fill="#00ff60"/><path d="M302.6 400.7 307.2 402.0 310.0 399.9 305.3 398.5Z" fill="#00ff6d"/><path d="M271.1 401.2 275.8 402.3 278.5 400.1 273.9 398.9Z" fill="#00ff6b"/><path d="M314.6 401.2 319.3 402.6 322.0 400.6 317.4 399.2Z" fill="#00ff6b"/><path d="M326.7 402.0 331.3 403.2 334.0 401.4 329.4 400.1Z" fill="#00ff68"/><path d="M251.7 402.5 256.4 403.5 259.1 401.3 254.5 400.3Z" fill="#00ff67"/><path d="M338.7 402.7 343.4 404.0 346.1 402.2 341.4 400.9Z" fill="#00ff65"/><path d="M350.7 403.5 355.4 404.7 358.1 403.0 353.5 401.8Z" fill="#00ff63"/><path d="M232.3 403.8 237.0 404.7 239.7 402.7 235.0 401.8Z" fill="#00ff62"/><path d="M283.2 401.3 287.8 402.5 290.6 400.3 285.9 399.0Z" fill="#00ff6c"/><path d="M362.8 404.2 367.4 405.3 370.2 403.7 365.5 402.5Z" fill="#00ff61"/><path d="M212.9 404.9 217.5 405.8 220.3 403.9 215.6 403.0Z" fill="#00ff5f"/><path d="M374.8 404.8 379.5 405.9 382.2 404.3 377.5 403.2Z" fill="#00ff5f"/><path d="M263.8 402.4 268.4 403.4 271.1 401.2 266.5 400.1Z" fill="#00ff69"/><path d="M295.2 401.5 299.9 402.8 302.6 400.7 297.9 399.3Z" fill="#00ff6c"/><path d="M244.3 403.6 249.0 404.6 251.7 402.5 247.1 401.5Z" fill="#00ff65"/><path d="M307.2 402.0 311.9 403.2 314.6 401.2 310.0 399.9Z" fill="#00ff6a"/><path d="M224.9 404.8 229.6 405.7 232.3 403.8 227.7 402.9Z" fill="#00ff60"/><path d="M319.3 402.6 323.9 403.8 326.7 402.0 322.0 400.6Z" fill="#00ff68"/><path d="M275.8 402.3 280.4 403.5 283.2 401.3 278.5 400.1Z" fill="#00ff6a"/><path d="M331.3 403.2 336.0 404.5 338.7 402.7 334.0 401.4Z" fill="#00ff66"/><path d="M343.4 404.0 348.0 405.2 350.7 403.5 346.1 402.2Z" fill="#00ff64"/><path d="M256.4 403.5 261.0 404.5 263.8 402.4 259.1 401.3Z" fill="#00ff67"/><path d="M355.4 404.7 360.0 405.8 362.8 404.2 358.1 403.0Z" fill="#00ff62"/><path d="M287.8 402.5 292.5 403.6 295.2 401.5 290.6 400.3Z" fill="#00ff6b"/><path d="M237.0 404.7 241.6 405.6 244.3 403.6 239.7 402.7Z" fill="#00ff62"/><path d="M367.4 405.3 372.1 406.5 374.8 404.8 370.2 403.7Z" fill="#00ff60"/><path d="M299.9 402.8 304.5 404.0 307.2 402.0 302.6 400.7Z" fill="#00ff6a"/><path d="M217.5 405.8 222.2 406.7 224.9 404.8 220.3 403.9Z" fill="#00ff5f"/><path d="M268.4 403.4 273.1 404.5 275.8 402.3 271.1 401.2Z" fill="#00ff68"/><path d="M311.9 403.2 316.6 404.5 319.3 402.6 314.6 401.2Z" fill="#00ff69"/><path d="M249.0 404.6 253.6 405.5 256.4 403.5 251.7 402.5Z" fill="#00ff64"/><path d="M323.9 403.8 328.6 405.1 331.3 403.2 326.7 402.0Z" fill="#00ff67"/><path d="M280.4 403.5 285.1 404.6 287.8 402.5 283.2 401.3Z" fill="#00ff69"/><path d="M336.0 404.5 340.6 405.7 343.4 404.0 338.7 402.7Z" fill="#00ff65"/><path d="M229.6 405.7 234.2 406.6 237.0 404.7 232.3 403.8Z" fill="#00ff60"/><path d="M348.0 405.2 352.7 406.4 355.4 404.7 350.7 403.5Z" fill="#00ff62"/><path d="M360.0 405.8 364.7 407.0 367.4 405.3 362.8 404.2Z" fill="#00ff60"/><path d="M261.0 404.5 265.7 405.5 268.4 403.4 263.8 402.4Z" fill="#00ff66"/><path d="M292.5 403.6 297.1 404.8 299.9 402.8 295.2 401.5Z" fill="#00ff69"/><path d="M372.1 406.5 376.7 407.6 379.5 405.9 374.8 404.8Z" fill="#00ff5f"/><path d="M241.6 405.6 246.3 406.6 249.0 404.6 244.3 403.6Z" fill="#00ff62"/><path d="M304.5 404.0 309.2 405.2 311.9 403.2 307.2 402.0Z" fill="#00ff68"/><path d="M273.1 404.5 277.7 405.5 280.4 403.5 275.8 402.3Z" fill="#00ff67"/><path d="M222.2 406.7 226.8 407.6 229.6 405.7 224.9 404.8Z" fill="#00ff5f"/><path d="M316.6 404.5 321.2 405.7 323.9 403.8 319.3 402.6Z" fill="#00ff67"/><path d="M328.6 405.1 333.2 406.3 336.0 404.5 331.3 403.2Z" fill="#00ff65"/><path d="M253.6 405.5 258.3 406.5 261.0 404.5 256.4 403.5Z" fill="#00ff64"/><path d="M340.6 405.7 345.3 406.9 348.0 405.2 343.4 404.0Z" fill="#00ff63"/><path d="M285.1 404.6 289.8 405.7 292.5 403.6 287.8 402.5Z" fill="#00ff68"/><path d="M352.7 406.4 357.3 407.5 360.0 405.8 355.4 404.7Z" fill="#00ff61"/><path d="M234.2 406.6 238.9 407.6 241.6 405.6 237.0 404.7Z" fill="#00ff60"/><path d="M364.7 407.0 369.4 408.1 372.1 406.5 367.4 405.3Z" fill="#00ff5f"/><path d="M297.1 404.8 301.8 406.0 304.5 404.0 299.9 402.8Z" fill="#00ff68"/><path d="M265.7 405.5 270.3 406.5 273.1 404.5 268.4 403.4Z" fill="#00ff65"/><path d="M309.2 405.2 313.8 406.4 316.6 404.5 311.9 403.2Z" fill="#00ff67"/><path d="M246.3 406.6 250.9 407.5 253.6 405.5 249.0 404.6Z" fill="#00ff62"/><path d="M321.2 405.7 325.9 406.9 328.6 405.1 323.9 403.8Z" fill="#00ff65"/><path d="M277.7 405.5 282.4 406.6 285.1 404.6 280.4 403.5Z" fill="#00ff66"/><path d="M226.8 407.6 231.5 408.5 234.2 406.6 229.6 405.7Z" fill="#00ff5f"/><path d="M333.2 406.3 337.9 407.5 340.6 405.7 336.0 404.5Z" fill="#00ff63"/><path d="M258.3 406.5 263.0 407.5 265.7 405.5 261.0 404.5Z" fill="#00ff64"/><path d="M345.3 406.9 349.9 408.0 352.7 406.4 348.0 405.2Z" fill="#00ff62"/><path d="M289.8 405.7 294.4 406.8 297.1 404.8 292.5 403.6Z" fill="#00ff67"/><path d="M357.3 407.5 362.0 408.6 364.7 407.0 360.0 405.8Z" fill="#00ff60"/><path d="M238.9 407.6 243.5 408.5 246.3 406.6 241.6 405.6Z" fill="#00ff60"/><path d="M301.8 406.0 306.4 407.1 309.2 405.2 304.5 404.0Z" fill="#00ff66"/><path d="M369.4 408.1 374.0 409.2 376.7 407.6 372.1 406.5Z" fill="#00ff5e"/><path d="M270.3 406.5 275.0 407.6 277.7 405.5 273.1 404.5Z" fill="#00ff65"/><path d="M313.8 406.4 318.5 407.6 321.2 405.7 316.6 404.5Z" fill="#00ff65"/><path d="M250.9 407.5 255.6 408.5 258.3 406.5 253.6 405.5Z" fill="#00ff62"/><path d="M325.9 406.9 330.5 408.1 333.2 406.3 328.6 405.1Z" fill="#00ff64"/><path d="M282.4 406.6 287.0 407.7 289.8 405.7 285.1 404.6Z" fill="#00ff65"/><path d="M337.9 407.5 342.6 408.6 345.3 406.9 340.6 405.7Z" fill="#00ff62"/><path d="M231.5 408.5 236.2 409.4 238.9 407.6 234.2 406.6Z" fill="#00ff5f"/><path d="M349.9 408.0 354.6 409.2 357.3 407.5 352.7 406.4Z" fill="#00ff60"/><path d="M294.4 406.8 299.1 407.9 301.8 406.0 297.1 404.8Z" fill="#00ff65"/><path d="M263.0 407.5 267.6 408.5 270.3 406.5 265.7 405.5Z" fill="#00ff63"/><path d="M362.0 408.6 366.6 409.7 369.4 408.1 364.7 407.0Z" fill="#00ff5f"/><path d="M306.4 407.1 311.1 408.3 313.8 406.4 309.2 405.2Z" fill="#00ff65"/><path d="M243.5 408.5 248.2 409.4 250.9 407.5 246.3 406.6Z" fill="#00ff60"/><path d="M275.0 407.6 279.6 408.6 282.4 406.6 277.7 405.5Z" fill="#00ff64"/><path d="M318.5 407.6 323.1 408.7 325.9 406.9 321.2 405.7Z" fill="#00ff64"/><path d="M330.5 408.1 335.2 409.2 337.9 407.5 333.2 406.3Z" fill="#00ff62"/><path d="M255.6 408.5 260.2 409.5 263.0 407.5 258.3 406.5Z" fill="#00ff61"/><path d="M287.0 407.7 291.7 408.8 294.4 406.8 289.8 405.7Z" fill="#00ff64"/><path d="M342.6 408.6 347.2 409.8 349.9 408.0 345.3 406.9Z" fill="#00ff61"/><path d="M236.2 409.4 240.8 410.4 243.5 408.5 238.9 407.6Z" fill="#00ff5f"/><path d="M354.6 409.2 359.2 410.3 362.0 408.6 357.3 407.5Z" fill="#00ff5f"/><path d="M299.1 407.9 303.7 409.1 306.4 407.1 301.8 406.0Z" fill="#00ff64"/><path d="M267.6 408.5 272.3 409.5 275.0 407.6 270.3 406.5Z" fill="#00ff63"/><path d="M366.6 409.7 371.3 410.8 374.0 409.2 369.4 408.1Z" fill="#00ff5e"/><path d="M311.1 408.3 315.8 409.4 318.5 407.6 313.8 406.4Z" fill="#00ff64"/><path d="M248.2 409.4 252.8 410.4 255.6 408.5 250.9 407.5Z" fill="#00ff60"/><path d="M279.6 408.6 284.3 409.6 287.0 407.7 282.4 406.6Z" fill="#00ff63"/><path d="M323.1 408.7 327.8 409.9 330.5 408.1 325.9 406.9Z" fill="#00ff63"/><path d="M335.2 409.2 339.8 410.4 342.6 408.6 337.9 407.5Z" fill="#00ff61"/><path d="M291.7 408.8 296.3 409.9 299.1 407.9 294.4 406.8Z" fill="#00ff63"/><path d="M260.2 409.5 264.9 410.4 267.6 408.5 263.0 407.5Z" fill="#00ff61"/><path d="M347.2 409.8 351.9 410.9 354.6 409.2 349.9 408.0Z" fill="#00ff60"/><path d="M359.2 410.3 363.9 411.4 366.6 409.7 362.0 408.6Z" fill="#00ff5e"/><path d="M303.7 409.1 308.4 410.2 311.1 408.3 306.4 407.1Z" fill="#00ff63"/><path d="M240.8 410.4 245.5 411.3 248.2 409.4 243.5 408.5Z" fill="#00ff5f"/><path d="M272.3 409.5 276.9 410.5 279.6 408.6 275.0 407.6Z" fill="#00ff62"/><path d="M315.8 409.4 320.4 410.5 323.1 408.7 318.5 407.6Z" fill="#00ff62"/><path d="M252.8 410.4 257.5 411.3 260.2 409.5 255.6 408.5Z" fill="#00ff60"/><path d="M327.8 409.9 332.4 411.0 335.2 409.2 330.5 408.1Z" fill="#00ff61"/><path d="M284.3 409.6 289.0 410.7 291.7 408.8 287.0 407.7Z" fill="#00ff62"/><path d="M339.8 410.4 344.5 411.5 347.2 409.8 342.6 408.6Z" fill="#00ff60"/><path d="M296.3 409.9 301.0 410.9 303.7 409.1 299.1 407.9Z" fill="#00ff63"/><path d="M264.9 410.4 269.5 411.4 272.3 409.5 267.6 408.5Z" fill="#00ff61"/><path d="M351.9 410.9 356.5 412.0 359.2 410.3 354.6 409.2Z" fill="#00ff5f"/><path d="M363.9 411.4 368.6 412.5 371.3 410.8 366.6 409.7Z" fill="#00ff5e"/><path d="M308.4 410.2 313.0 411.3 315.8 409.4 311.1 408.3Z" fill="#00ff62"/><path d="M245.5 411.3 250.1 412.2 252.8 410.4 248.2 409.4Z" fill="#00ff5e"/><path d="M276.9 410.5 281.6 411.6 284.3 409.6 279.6 408.6Z" fill="#00ff61"/><path d="M320.4 410.5 325.1 411.6 327.8 409.9 323.1 408.7Z" fill="#00ff61"/><path d="M332.4 411.0 337.1 412.1 339.8 410.4 335.2 409.2Z" fill="#00ff60"/><path d="M289.0 410.7 293.6 411.7 296.3 409.9 291.7 408.8Z" fill="#00ff62"/><path d="M257.5 411.3 262.2 412.3 264.9 410.4 260.2 409.5Z" fill="#00ff5f"/><path d="M344.5 411.5 349.1 412.6 351.9 410.9 347.2 409.8Z" fill="#00ff5f"/><path d="M301.0 410.9 305.6 412.0 308.4 410.2 303.7 409.1Z" fill="#00ff62"/><path d="M356.5 412.0 361.2 413.0 363.9 411.4 359.2 410.3Z" fill="#00ff5e"/><path d="M269.5 411.4 274.2 412.4 276.9 410.5 272.3 409.5Z" fill="#00ff60"/><path d="M313.0 411.3 317.7 412.3 320.4 410.5 315.8 409.4Z" fill="#00ff61"/><path d="M250.1 412.2 254.8 413.2 257.5 411.3 252.8 410.4Z" fill="#00ff5e"/><path d="M281.6 411.6 286.2 412.6 289.0 410.7 284.3 409.6Z" fill="#00ff61"/><path d="M325.1 411.6 329.7 412.7 332.4 411.0 327.8 409.9Z" fill="#00ff60"/><path d="M337.1 412.1 341.8 413.2 344.5 411.5 339.8 410.4Z" fill="#00ff5f"/><path d="M293.6 411.7 298.3 412.8 301.0 410.9 296.3 409.9Z" fill="#00ff61"/><path d="M262.2 412.3 266.8 413.3 269.5 411.4 264.9 410.4Z" fill="#00ff5f"/><path d="M349.1 412.6 353.8 413.6 356.5 412.0 351.9 410.9Z" fill="#00ff5e"/><path d="M305.6 412.0 310.3 413.1 313.0 411.3 308.4 410.2Z" fill="#00ff61"/><path d="M361.2 413.0 365.8 414.1 368.6 412.5 363.9 411.4Z" fill="#00ff5d"/><path d="M274.2 412.4 278.8 413.4 281.6 411.6 276.9 410.5Z" fill="#00ff60"/><path d="M317.7 412.3 322.3 413.4 325.1 411.6 320.4 410.5Z" fill="#00ff60"/><path d="M286.2 412.6 290.9 413.6 293.6 411.7 289.0 410.7Z" fill="#00ff60"/><path d="M329.7 412.7 334.4 413.8 337.1 412.1 332.4 411.0Z" fill="#00ff5f"/><path d="M254.8 413.2 259.4 414.1 262.2 412.3 257.5 411.3Z" fill="#00ff5e"/><path d="M341.8 413.2 346.4 414.2 349.1 412.6 344.5 411.5Z" fill="#00ff5f"/><path d="M298.3 412.8 302.9 413.8 305.6 412.0 301.0 410.9Z" fill="#00ff60"/><path d="M266.8 413.3 271.5 414.3 274.2 412.4 269.5 411.4Z" fill="#00ff5f"/><path d="M353.8 413.6 358.4 414.7 361.2 413.0 356.5 412.0Z" fill="#00ff5d"/><path d="M310.3 413.1 315.0 414.1 317.7 412.3 313.0 411.3Z" fill="#00ff60"/><path d="M278.8 413.4 283.5 414.4 286.2 412.6 281.6 411.6Z" fill="#00ff5f"/><path d="M322.3 413.4 327.0 414.5 329.7 412.7 325.1 411.6Z" fill="#00ff5f"/><path d="M290.9 413.6 295.5 414.6 298.3 412.8 293.6 411.7Z" fill="#00ff60"/><path d="M334.4 413.8 339.0 414.9 341.8 413.2 337.1 412.1Z" fill="#00ff5f"/><path d="M259.4 414.1 264.1 415.1 266.8 413.3 262.2 412.3Z" fill="#00ff5e"/><path d="M346.4 414.2 351.1 415.3 353.8 413.6 349.1 412.6Z" fill="#00ff5e"/><path d="M302.9 413.8 307.6 414.9 310.3 413.1 305.6 412.0Z" fill="#00ff60"/><path d="M271.5 414.3 276.1 415.2 278.8 413.4 274.2 412.4Z" fill="#00ff5e"/><path d="M358.4 414.7 363.1 415.7 365.8 414.1 361.2 413.0Z" fill="#00ff5d"/><path d="M315.0 414.1 319.6 415.2 322.3 413.4 317.7 412.3Z" fill="#00ff5f"/><path d="M283.5 414.4 288.2 415.4 290.9 413.6 286.2 412.6Z" fill="#00ff5f"/><path d="M327.0 414.5 331.6 415.5 334.4 413.8 329.7 412.7Z" fill="#00ff5f"/><path d="M339.0 414.9 343.7 415.9 346.4 414.2 341.8 413.2Z" fill="#00ff5e"/><path d="M295.5 414.6 300.2 415.6 302.9 413.8 298.3 412.8Z" fill="#00ff5f"/><path d="M264.1 415.1 268.7 416.1 271.5 414.3 266.8 413.3Z" fill="#00ff5d"/><path d="M351.1 415.3 355.7 416.4 358.4 414.7 353.8 413.6Z" fill="#00ff5d"/><path d="M307.6 414.9 312.2 415.9 315.0 414.1 310.3 413.1Z" fill="#00ff5f"/><path d="M276.1 415.2 280.8 416.2 283.5 414.4 278.8 413.4Z" fill="#00ff5e"/><path d="M319.6 415.2 324.3 416.2 327.0 414.5 322.3 413.4Z" fill="#00ff5e"/><path d="M288.2 415.4 292.8 416.4 295.5 414.6 290.9 413.6Z" fill="#00ff5e"/><path d="M331.6 415.5 336.3 416.6 339.0 414.9 334.4 413.8Z" fill="#00ff5e"/><path d="M343.7 415.9 348.3 417.0 351.1 415.3 346.4 414.2Z" fill="#00ff5d"/><path d="M300.2 415.6 304.8 416.7 307.6 414.9 302.9 413.8Z" fill="#00ff5e"/><path d="M268.7 416.1 273.4 417.0 276.1 415.2 271.5 414.3Z" fill="#00ff5d"/><path d="M355.7 416.4 360.4 417.4 363.1 415.7 358.4 414.7Z" fill="#00ff5c"/><path d="M312.2 415.9 316.9 416.9 319.6 415.2 315.0 414.1Z" fill="#00ff5e"/><path d="M280.8 416.2 285.4 417.2 288.2 415.4 283.5 414.4Z" fill="#00ff5e"/><path d="M324.3 416.2 328.9 417.3 331.6 415.5 327.0 414.5Z" fill="#00ff5e"/><path d="M292.8 416.4 297.5 417.4 300.2 415.6 295.5 414.6Z" fill="#00ff5e"/><path d="M336.3 416.6 341.0 417.6 343.7 415.9 339.0 414.9Z" fill="#00ff5d"/><path d="M348.3 417.0 353.0 418.0 355.7 416.4 351.1 415.3Z" fill="#00ff5c"/><path d="M304.8 416.7 309.5 417.7 312.2 415.9 307.6 414.9Z" fill="#00ff5e"/><path d="M273.4 417.0 278.0 418.0 280.8 416.2 276.1 415.2Z" fill="#00ff5d"/><path d="M316.9 416.9 321.5 418.0 324.3 416.2 319.6 415.2Z" fill="#00ff5e"/><path d="M285.4 417.2 290.1 418.2 292.8 416.4 288.2 415.4Z" fill="#00ff5d"/><path d="M328.9 417.3 333.6 418.3 336.3 416.6 331.6 415.5Z" fill="#00ff5d"/><path d="M297.5 417.4 302.1 418.4 304.8 416.7 300.2 415.6Z" fill="#00ff5d"/><path d="M341.0 417.6 345.6 418.7 348.3 417.0 343.7 415.9Z" fill="#00ff5d"/><path d="M353.0 418.0 357.6 419.0 360.4 417.4 355.7 416.4Z" fill="#00ff5c"/><path d="M309.5 417.7 314.2 418.7 316.9 416.9 312.2 415.9Z" fill="#00ff5d"/><path d="M278.0 418.0 282.7 419.0 285.4 417.2 280.8 416.2Z" fill="#00ff5c"/><path d="M321.5 418.0 326.2 419.0 328.9 417.3 324.3 416.2Z" fill="#00ff5d"/><path d="M290.1 418.2 294.7 419.2 297.5 417.4 292.8 416.4Z" fill="#00ff5d"/><path d="M333.6 418.3 338.2 419.3 341.0 417.6 336.3 416.6Z" fill="#00ff5d"/><path d="M302.1 418.4 306.8 419.4 309.5 417.7 304.8 416.7Z" fill="#00ff5d"/><path d="M345.6 418.7 350.3 419.7 353.0 418.0 348.3 417.0Z" fill="#00ff5c"/><path d="M314.2 418.7 318.8 419.7 321.5 418.0 316.9 416.9Z" fill="#00ff5d"/><path d="M282.7 419.0 287.4 419.9 290.1 418.2 285.4 417.2Z" fill="#00ff5c"/><path d="M326.2 419.0 330.8 420.0 333.6 418.3 328.9 417.3Z" fill="#00ff5c"/><path d="M294.7 419.2 299.4 420.2 302.1 418.4 297.5 417.4Z" fill="#00ff5c"/><path d="M338.2 419.3 342.9 420.3 345.6 418.7 341.0 417.6Z" fill="#00ff5c"/><path d="M350.3 419.7 354.9 420.7 357.6 419.0 353.0 418.0Z" fill="#00ff5b"/><path d="M306.8 419.4 311.4 420.4 314.2 418.7 309.5 417.7Z" fill="#00ff5c"/><path d="M318.8 419.7 323.5 420.7 326.2 419.0 321.5 418.0Z" fill="#00ff5c"/><path d="M287.4 419.9 292.0 420.9 294.7 419.2 290.1 418.2Z" fill="#00ff5c"/><path d="M330.8 420.0 335.5 421.0 338.2 419.3 333.6 418.3Z" fill="#00ff5c"/><path d="M299.4 420.2 304.0 421.1 306.8 419.4 302.1 418.4Z" fill="#00ff5c"/><path d="M342.9 420.3 347.5 421.4 350.3 419.7 345.6 418.7Z" fill="#00ff5b"/><path d="M311.4 420.4 316.1 421.4 318.8 419.7 314.2 418.7Z" fill="#00ff5c"/><path d="M323.5 420.7 328.1 421.7 330.8 420.0 326.2 419.0Z" fill="#00ff5c"/><path d="M292.0 420.9 296.7 421.9 299.4 420.2 294.7 419.2Z" fill="#00ff5b"/><path d="M335.5 421.0 340.1 422.0 342.9 420.3 338.2 419.3Z" fill="#00ff5b"/><path d="M304.0 421.1 308.7 422.1 311.4 420.4 306.8 419.4Z" fill="#00ff5c"/><path d="M347.5 421.4 352.2 422.4 354.9 420.7 350.3 419.7Z" fill="#00ff5b"/><path d="M316.1 421.4 320.7 422.4 323.5 420.7 318.8 419.7Z" fill="#00ff5b"/><path d="M328.1 421.7 332.8 422.7 335.5 421.0 330.8 420.0Z" fill="#00ff5b"/><path d="M296.7 421.9 301.3 422.9 304.0 421.1 299.4 420.2Z" fill="#00ff5b"/><path d="M340.1 422.0 344.8 423.0 347.5 421.4 342.9 420.3Z" fill="#00ff5b"/><path d="M308.7 422.1 313.3 423.1 316.1 421.4 311.4 420.4Z" fill="#00ff5b"/><path d="M320.7 422.4 325.4 423.4 328.1 421.7 323.5 420.7Z" fill="#00ff5b"/><path d="M332.8 422.7 337.4 423.7 340.1 422.0 335.5 421.0Z" fill="#00ff5b"/><path d="M301.3 422.9 306.0 423.8 308.7 422.1 304.0 421.1Z" fill="#00ff5b"/><path d="M344.8 423.0 349.5 424.0 352.2 422.4 347.5 421.4Z" fill="#00ff5a"/><path d="M313.3 423.1 318.0 424.1 320.7 422.4 316.1 421.4Z" fill="#00ff5b"/><path d="M325.4 423.4 330.0 424.4 332.8 422.7 328.1 421.7Z" fill="#00ff5b"/><path d="M337.4 423.7 342.1 424.7 344.8 423.0 340.1 422.0Z" fill="#00ff5a"/><path d="M306.0 423.8 310.6 424.8 313.3 423.1 308.7 422.1Z" fill="#00ff5a"/><path d="M318.0 424.1 322.7 425.1 325.4 423.4 320.7 422.4Z" fill="#00ff5a"/><path d="M330.0 424.4 334.7 425.4 337.4 423.7 332.8 422.7Z" fill="#00ff5a"/><path d="M342.1 424.7 346.7 425.7 349.5 424.0 344.8 423.0Z" fill="#00ff5a"/><path d="M310.6 424.8 315.3 425.8 318.0 424.1 313.3 423.1Z" fill="#00ff5a"/><path d="M322.7 425.1 327.3 426.0 330.0 424.4 325.4 423.4Z" fill="#00ff5a"/><path d="M334.7 425.4 339.3 426.3 342.1 424.7 337.4 423.7Z" fill="#00ff5a"/><path d="M315.3 425.8 319.9 426.7 322.7 425.1 318.0 424.1Z" fill="#00ff5a"/><path d="M327.3 426.0 332.0 427.0 334.7 425.4 330.0 424.4Z" fill="#00ff5a"/><path d="M339.3 426.3 344.0 427.3 346.7 425.7 342.1 424.7Z" fill="#00ff59"/><path d="M319.9 426.7 324.6 427.7 327.3 426.0 322.7 425.1Z" fill="#00ff59"/><path d="M332.0 427.0 336.6 428.0 339.3 426.3 334.7 425.4Z" fill="#00ff59"/><path d="M324.6 427.7 329.2 428.7 332.0 427.0 327.3 426.0Z" fill="#00ff59"/><path d="M336.6 428.0 341.3 429.0 344.0 427.3 339.3 426.3Z" fill="#00ff59"/><path d="M329.2 428.7 333.9 429.6 336.6 428.0 332.0 427.0Z" fill="#00ff59"/><path d="M333.9 429.6 338.5 430.6 341.3 429.0 336.6 428.0Z" fill="#00ff59"/></g><g><path d="M110.5 404.0L343.2 449.5" stroke="#000" stroke-width="0.9" fill="none"/><path d="M343.2 449.5L479.6 371.3" stroke="#000" stroke-width="0.9" fill="none"/><path d="M110.5 404.0L113.5 402.3" stroke="#000" stroke-width="0.8" fill="none"/><path d="M343.2 449.5L339.3 448.7" stroke="#000" stroke-width="0.8" fill="none"/><path d="M139.6 409.7L142.6 407.9" stroke="#000" stroke-width="0.8" fill="none"/><path d="M360.2 439.7L356.3 439.0" stroke="#000" stroke-width="0.8" fill="none"/><path d="M168.7 415.4L171.7 413.6" stroke="#000" stroke-width="0.8" fill="none"/><path d="M377.3 429.9L373.4 429.2" stroke="#000" stroke-width="0.8" fill="none"/><path d="M197.8 421.1L200.8 419.3" stroke="#000" stroke-width="0.8" fill="none"/><path d="M394.4 420.2L390.4 419.4" stroke="#000" stroke-width="0.8" fill="none"/><path d="M226.8 426.8L229.9 425.0" stroke="#000" stroke-width="0.8" fill="none"/><path d="M411.4 410.4L407.5 409.6" stroke="#000" stroke-width="0.8" fill="none"/><path d="M255.9 432.4L259.0 430.7" stroke="#000" stroke-width="0.8" fill="none"/><path d="M428.5 400.6L424.5 399.9" stroke="#000" stroke-width="0.8" fill="none"/><path d="M285.0 438.1L288.1 436.4" stroke="#000" stroke-width="0.8" fill="none"/><path d="M445.5 390.9L441.6 390.1" stroke="#000" stroke-width="0.8" fill="none"/><path d="M314.1 443.8L317.1 442.1" stroke="#000" stroke-width="0.8" fill="none"/><path d="M462.6 381.1L458.6 380.3" stroke="#000" stroke-width="0.8" fill="none"/><path d="M343.2 449.5L346.2 447.8" stroke="#000" stroke-width="0.8" fill="none"/><path d="M479.6 371.3L475.7 370.5" stroke="#000" stroke-width="0.8" fill="none"/></g><g font-size="8.9" fill="#202020" stroke="#202020" stroke-width="0.15" font-family="Liberation Sans, sans-serif"><text x="106.3" y="410.4" text-anchor="middle">-4</text><text x="136.3" y="416.8" text-anchor="middle">-3</text><text x="165.4" y="422.4" text-anchor="middle">-2</text><text x="194.6" y="428.0" text-anchor="middle">-1</text><text x="225.2" y="433.4" text-anchor="middle">0</text><text x="254.7" y="439.0" text-anchor="middle">1</text><text x="283.9" y="444.6" text-anchor="middle">2</text><text x="312.8" y="451.1" text-anchor="middle">3</text><text x="342.6" y="456.7" text-anchor="middle">4</text><text x="355.6" y="455.0" text-anchor="middle">-4</text><text x="372.7" y="445.2" text-anchor="middle">-3</text><text x="390.1" y="435.9" text-anchor="middle">-2</text><text x="406.7" y="426.1" text-anchor="middle">-1</text><text x="424.8" y="415.4" text-anchor="middle">0</text><text x="441.4" y="406.1" text-anchor="middle">1</text><text x="458.8" y="395.9" text-anchor="middle">2</text><text x="475.9" y="386.3" text-anchor="middle">3</text><text x="491.8" y="376.3" text-anchor="middle">4</text><text x="101.3" y="407.7" text-anchor="end">-2</text><text x="101.3" y="388.2" text-anchor="end">-1.5</text><text x="101.3" y="368.8" text-anchor="end">-1</text><text x="101.3" y="349.3" text-anchor="end">-0.5</text><text x="101.3" y="329.8" text-anchor="end">0</text><text x="101.3" y="310.3" text-anchor="end">0.5</text><text x="101.3" y="290.8" text-anchor="end">1</text><text x="101.3" y="271.4" text-anchor="end">1.5</text><text x="101.3" y="251.9" text-anchor="end">2</text><text x="200.6" y="447.5" text-anchor="middle">x</text><text x="459.9" y="423.1" text-anchor="middle">y</text><text x="68.5" y="329.3" text-anchor="middle">z</text><text x="432.4" y="165.7" font-size="10" letter-spacing="-0.15">atan(y<tspan dy="-4" font-size="7">3</tspan><tspan dy="4">/4-x</tspan><tspan dy="-4" font-size="7">2</tspan><tspan dy="4">)</tspan></text></g>
</svg>

<!-- variable manager -->
<div class="a" style="left:518px;top:77px;width:212px;height:472.5px;border:1px solid #d8d9da;background:#f2f3f3"></div>
<div class="a" style="left:524px;top:105px;width:199.5px;height:404.5px;border:1px solid #d3d4d5;border-radius:2px;background:#fcfcfc"></div>
<div class="a" style="left:525px;top:106px;width:197px;height:22.5px;background:#eff0f1;border-bottom:1px solid #d6d7d8"></div>
<div class="a" style="left:602px;top:106px;width:1px;height:22px;background:#d0d1d2"></div>
<svg style="left:0;top:0" width="752" height="569" fill="none" stroke="#31363b" stroke-width="1.1">
<path d="M699.1 82.6L703 86.6L699.1 90.6L695.2 86.6Z" stroke="#7c7e80" stroke-width="1"/>
<circle cx="717.5" cy="87.1" r="6.3" fill="#8b8d8f" stroke="none"/><path d="M715 84.6L720 89.6M720 84.6L715 89.6" stroke="#f2f3f3" stroke-width="1.3"/>
</svg>
<div class="btn" style="left:537.5px;top:516px"></div>
<div class="btn" style="left:585px;top:516px"></div>
<div class="btn" style="left:633.5px;top:516px"></div>
<div class="btn" style="left:681px;top:516px"></div>
<svg style="left:0;top:0" width="752" height="569" fill="none" stroke="#31363b" stroke-width="1.1">
<path d="M546.5 523.8H552.9L555.9 526.8V530.5M546.5 523.8V535.3H553"/><path d="M552.3 523.4L556.3 527.4H552.3Z" fill="#31363b" stroke="none"/><path d="M554.7 532.2v3.5M553 534h3.4" stroke-width="1"/>
<path d="M593.9 527.1V535.3H604.7V527.1Z"/><path d="M593.4 523.6H598.6L600 525H605.2V527.1H598.4L593.4 529.2Z" fill="#31363b" stroke="none"/>
<path d="M642 523.9H651.6L653.5 525.8V535H642Z"/><path d="M644.5 523.9V527.4H650.4V523.9M644.2 535V530.5H651.2V535"/><path d="M648.9 524.5h1.1v2.3h-1.1Z" fill="#31363b"/>
<path d="M686.5 529.9L692.2 523.7H703.8V536.2H692.2Z" fill="#232629" stroke="none"/><path d="M694.6 527.3L699.4 532.1M699.4 527.3L694.6 532.1" stroke="#f2f3f3" stroke-width="1.5"/>
</svg>

<!-- side tabs -->
<div class="a" style="left:730px;top:76px;width:22px;height:62.5px;background:#d0d1d2;border-left:1px solid #c2c3c4;border-top:1px solid #c9cacb"></div>
<div class="a" style="left:730px;top:138px;width:22px;height:99px;background:#eff0f1;border:1px solid #c9cacb"></div>
<div class="a" style="left:730px;top:236px;width:1px;height:314px;background:#cbcccd"></div>


<!-- text layer -->
<svg style="left:0;top:0" width="752" height="569" font-family="Liberation Sans, sans-serif" fill="#393e43" stroke="#393e43" stroke-width="0.18">
<text x="359.4" y="14.4" font-size="10.54" fill="#d3d6d9" stroke="#d3d6d9" stroke-width="0.1">Cantor</text>
<text x="8.0" y="38.5" font-size="10.1">File</text>
<text x="40.8" y="38.5" font-size="10.1">View</text>
<text x="79.2" y="38.5" font-size="10.1">Edit</text>
<text x="114.3" y="38.5" font-size="10.46">Worksheet</text>
<text x="180.6" y="38.5" font-size="10.71">Linear Algebra</text>
<text x="266.5" y="38.5" font-size="10.37">Calculate</text>
<text x="325.5" y="38.5" font-size="10.6">Plot</text>
<text x="360.5" y="38.5" font-size="10.61">Settings</text>
<text x="415.2" y="38.5" font-size="10.59">Help</text>
<text x="189.0" y="64.8" font-size="10.46">Evaluate Worksheet</text>
<text x="318.4" y="64.7" font-size="10.39">Restart Backend</text>
<text x="430.9" y="64.6" font-size="10.54">Show Maxima Help</text>
<text x="26.1" y="91.7" font-size="10.1">Session 1</text>
<text x="522.3" y="91.6" font-size="10.61">Variable Manager</text>
<text x="529.6" y="121.5" font-size="10.45">Name</text>
<text x="608.5" y="121.5" font-size="10.2">Value</text>
<text x="5" y="564.3" font-size="10">Ready</text>
<text transform="translate(737.8 96.8) rotate(90) scale(1 0.88)" font-size="10.4">Help</text>
<text transform="translate(737.6 145.3) rotate(90) scale(1 0.9)" font-size="11.35">Variable Manager</text>
</svg>
<svg style="left:0;top:0" width="752" height="569"><path d="M499 264.2L507.5 272.6L504 273L505.6 277.6L503.8 278.4L502 274L499 276.2Z" fill="#474747" stroke="#474747" stroke-width="0.5" stroke-linejoin="round"/></svg>
</body></html>
